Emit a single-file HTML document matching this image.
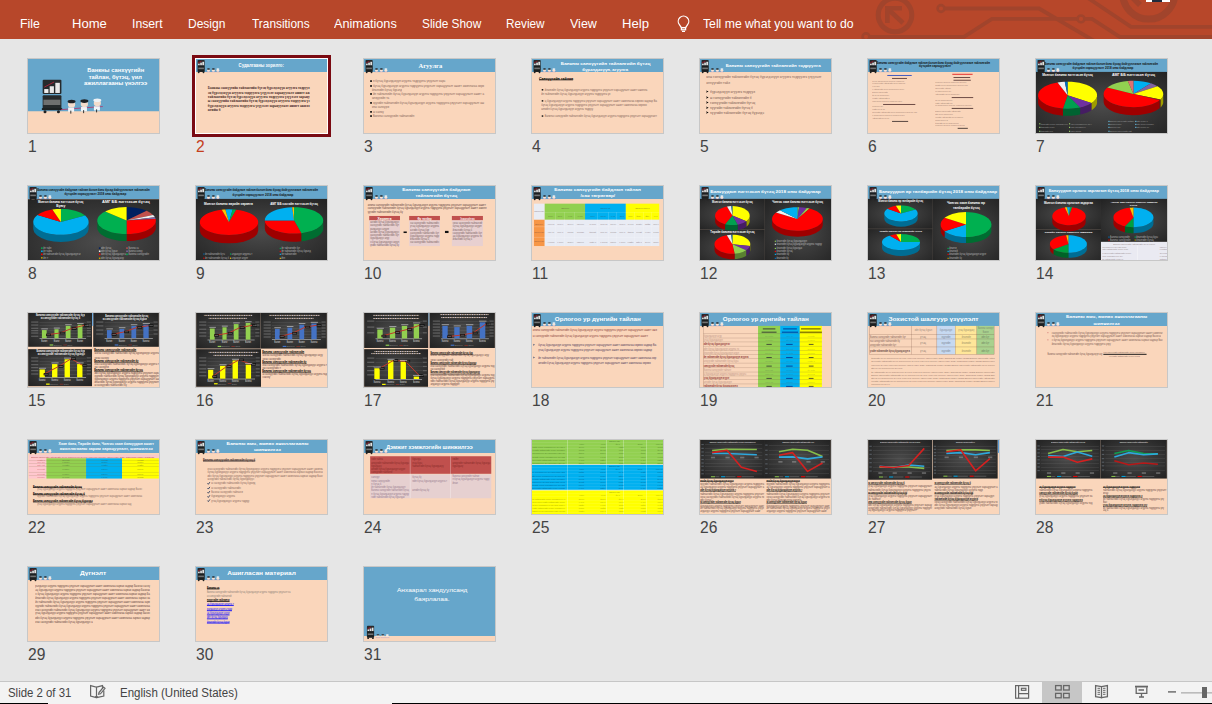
<!DOCTYPE html><html><head><meta charset="utf-8"><style>
*{margin:0;padding:0;box-sizing:border-box}
html,body{width:1212px;height:704px;overflow:hidden;background:#e6e6e6;font-family:"Liberation Sans",sans-serif}
.rib{position:absolute;left:0;top:0;width:1212px;height:39px;background:#b7472a;overflow:hidden}
.tab{position:absolute;top:16px;color:#fff;font-size:13px;line-height:16px;white-space:nowrap}
.th{position:absolute;width:133px;height:76px;border:1px solid #c7c7c7;overflow:hidden}
.th i{position:absolute;display:block}
.th svg{position:absolute;left:0;top:0}
.num{position:absolute;font-size:15.6px;line-height:18px;color:#404040}
.sb{position:absolute;left:0;top:681px;width:1212px;height:23px;background:#f3f3f3;border-top:1px solid #c6c6c6}
.sbt{position:absolute;top:4px;font-size:12px;line-height:15px;color:#444;white-space:nowrap;transform:scaleX(.95);transform-origin:0 0}
</style></head><body><div class="rib"><svg width="1212" height="39" style="position:absolute;left:0;top:0" fill="none" stroke="#a1442c" stroke-width="3.8">
<circle cx="895" cy="15" r="16.8" stroke-width="5"/>
<path d="M889.5 10.5 L903 23" stroke-width="4.6"/><path d="M887.4 23 V8.2 H902" stroke-width="4.6"/>
<circle cx="941" cy="8.5" r="3.4" stroke-width="2.6"/>
<path d="M944.4 8.5 H1039 L1096 42"/>
<circle cx="866" cy="36.8" r="3.4" stroke-width="2.6"/>
<path d="M869.4 36.8 H964 L992 18.9 H1077.6"/>
<circle cx="1081" cy="18.9" r="3.4" stroke-width="2.6"/>
<path d="M1084.4 18.9 H1092 L1120 37 H1212"/>
<path d="M1088 -2 L1131 26.8 H1212"/>
<circle cx="1148.75" cy="-7.1" r="26.2" stroke-width="7"/>
<path d="M1133 -2 L1140 5" stroke-width="5.5"/>
</svg><div style="position:absolute;left:1146px;top:0;width:24px;height:2.3px;background:#fff"></div><div style="position:absolute;left:1152px;top:0;width:10px;height:2px;background:#1e2b3c"></div><span class="tab" style="left:19.6px;transform:scaleX(0.950);transform-origin:0 0">File</span><span class="tab" style="left:72.4px;transform:scaleX(1.003);transform-origin:0 0">Home</span><span class="tab" style="left:132.3px;transform:scaleX(0.941);transform-origin:0 0">Insert</span><span class="tab" style="left:188.4px;transform:scaleX(0.924);transform-origin:0 0">Design</span><span class="tab" style="left:251.5px;transform:scaleX(0.914);transform-origin:0 0">Transitions</span><span class="tab" style="left:334.2px;transform:scaleX(0.976);transform-origin:0 0">Animations</span><span class="tab" style="left:422.0px;transform:scaleX(0.910);transform-origin:0 0">Slide Show</span><span class="tab" style="left:506.4px;transform:scaleX(0.903);transform-origin:0 0">Review</span><span class="tab" style="left:569.8px;transform:scaleX(0.962);transform-origin:0 0">View</span><span class="tab" style="left:621.9px;transform:scaleX(1.009);transform-origin:0 0">Help</span><span class="tab" style="left:703.4px;transform:scaleX(0.939);transform-origin:0 0">Tell me what you want to do</span><svg width="1212" height="39" style="position:absolute;left:0;top:0" fill="none" stroke="#fff" stroke-width="1.25">
<path d="M681.4 27.6 L679.4 24.6 A5.25 5.25 0 1 1 687.6 24.6 L685.6 27.6 Z"/><rect x="681.4" y="27.6" width="4.2" height="2.2"/><path d="M682 31.4 H685"/></svg></div><div class="th" style="left:27px;top:58px;background:#fad6bb"><div style="position:absolute;left:0;top:0;width:131px;height:74px;overflow:hidden"><svg width="131" height="74" viewBox="0 0 131 74" font-family="Liberation Sans"><rect x="0.00" y="0.00" width="131.00" height="74.00" fill="#66a6cb" /><rect x="-8.00" y="52.25" width="160.00" height="79.38" fill="#fad6bb" /><text x="59.19" y="12.97" font-size="4.6" font-weight="bold" font-family="Liberation Sans" fill="#fff" textLength="57.03" lengthAdjust="spacingAndGlyphs" >Банкны санхүүгийн</text><text x="60.75" y="20.00" font-size="4.6" font-weight="bold" font-family="Liberation Sans" fill="#fff" textLength="53.12" lengthAdjust="spacingAndGlyphs" >тайлан, бүтэц, үил</text><text x="56.06" y="25.94" font-size="4.6" font-weight="bold" font-family="Liberation Sans" fill="#fff" textLength="63.28" lengthAdjust="spacingAndGlyphs" >ажиллагааны үнэлгээ</text><rect x="14.66" y="20.69" width="18.75" height="14.38" fill="#262a2c" rx="1"/><rect x="14.66" y="36.31" width="18.75" height="14.84" fill="#262a2c" rx="1"/><rect x="16.22" y="30.06" width="4.22" height="3.91" fill="#eee" /><rect x="21.69" y="27.25" width="4.22" height="6.72" fill="#e8e8e8" /><rect x="27.31" y="23.81" width="4.53" height="10.16" fill="#e8e8e8" /><path d="M16.22 28.19 L26.06 23.03" stroke="#b0223a" stroke-width="0.9"/><rect x="15.44" y="40.69" width="16.88" height="5.31" fill="#7d7d7d" opacity=".85"/><rect x="13.88" y="49.12" width="20.31" height="1.88" fill="#1e2224" /><circle cx="17.00" cy="52.72" r="1.5" fill="#222"/><circle cx="30.44" cy="52.72" r="1.5" fill="#222"/><path d="M32.94 50.69 Q54.50 48.81 74.81 47.56" stroke="#b3346a" stroke-width="0.8" fill="none"/><rect x="40.12" y="48.50" width="6" height="4.2" fill="#fff" opacity=".9"/><ellipse cx="43.56" cy="45.38" rx="3.6" ry="3.2" fill="#f3dccc"/><ellipse cx="43.56" cy="42.56" rx="4" ry="1.8" fill="#1e2226"/><rect x="42.31" y="51.62" width="1" height="3" fill="#333"/><rect x="52.94" y="48.03" width="6" height="4.2" fill="#fff" opacity=".9"/><ellipse cx="56.38" cy="44.91" rx="3.6" ry="3.2" fill="#f3dccc"/><ellipse cx="56.38" cy="42.09" rx="4" ry="1.8" fill="#1e2226"/><rect x="55.12" y="51.16" width="1" height="3" fill="#333"/><rect x="65.91" y="47.25" width="6" height="4.2" fill="#fff" opacity=".9"/><ellipse cx="69.34" cy="44.12" rx="3.6" ry="3.2" fill="#f3dccc"/><ellipse cx="69.34" cy="41.31" rx="4" ry="1.8" fill="#eef2f6"/><rect x="68.09" y="50.38" width="1" height="3" fill="#333"/></svg></div></div><span class="num" style="left:28px;top:138px;color:#444">1</span><div style="position:absolute;left:192px;top:55px;width:139px;height:82px;border:3px solid #7a0a12;background:#fff"></div><div class="th" style="left:196px;top:59px;width:131px;height:74px;border:none;background:#fad6bb"><svg width="131" height="74" viewBox="0 0 131 74" font-family="Liberation Sans"><rect x="0.00" y="0.00" width="131.00" height="13.00" fill="#66a6cb" /><rect x="1.50" y="1.00" width="7.2" height="12" rx="0.8" fill="#25292b"/><rect x="2.10" y="4.60" width="1.6" height="1.6" fill="#e8e8e8"/><rect x="4.20" y="3.60" width="1.7" height="2.6" fill="#e0e0e0"/><rect x="6.30" y="2.80" width="1.8" height="3.4" fill="#e0e0e0"/><path d="M2.10 3.90 L5.50 2.20" stroke="#9a1a2a" stroke-width="0.9"/><rect x="2.00" y="7.00" width="6.2" height="5.4" fill="#1c1f20"/><rect x="2.30" y="8.60" width="5.6" height="1.6" fill="#8a8a8a" opacity=".8"/><circle cx="2.70" cy="13.30" r="0.9" fill="#222"/><circle cx="7.50" cy="13.30" r="0.9" fill="#222"/><ellipse cx="12.50" cy="11.40" rx="1.5" ry="1.5" fill="#f6e2d4"/><ellipse cx="12.50" cy="10.00" rx="1.5" ry="0.7" fill="#1e2226"/><rect x="10.30" y="12.60" width="4.2" height="0.6" fill="#8060b0" opacity=".4"/><ellipse cx="17.40" cy="11.40" rx="1.5" ry="1.5" fill="#f6e2d4"/><ellipse cx="17.40" cy="10.00" rx="1.5" ry="0.7" fill="#1e2226"/><rect x="15.20" y="12.60" width="4.2" height="0.6" fill="#8060b0" opacity=".4"/><ellipse cx="21.90" cy="11.40" rx="1.5" ry="1.5" fill="#f6e2d4"/><ellipse cx="21.90" cy="10.00" rx="1.5" ry="0.7" fill="#eef2f6"/><rect x="19.70" y="12.60" width="4.2" height="0.6" fill="#8060b0" opacity=".4"/><text x="42.59" y="8.04" font-size="4.8" font-weight="bold" font-family="Liberation Sans" fill="#fff" textLength="45.31" lengthAdjust="spacingAndGlyphs" >Судалгааны зорилго:</text><text x="11.81" y="29.90" font-size="3.9000000000000004" font-weight="bold" font-family="Liberation Serif" fill="#3a2020" textLength="101.88" lengthAdjust="spacingAndGlyphs" opacity="0.95">Банкны санхүүгийн тайлангийн бүтэц бүрэлдэхүүн агуулга тодруул</text><text x="11.81" y="34.90" font-size="3.9000000000000004" font-weight="bold" font-family="Liberation Serif" fill="#3a2020" textLength="101.88" lengthAdjust="spacingAndGlyphs" opacity="0.95">эц бүрэлдэхүүн агуулга тодруулга үзүүлэлт харьцуулалт ашигт аж</text><text x="11.81" y="38.97" font-size="3.9000000000000004" font-weight="bold" font-family="Liberation Serif" fill="#3a2020" textLength="101.88" lengthAdjust="spacingAndGlyphs" opacity="0.95">тайлангийн бүтэц бүрэлдэхүүн агуулга тодруулга үзүүлэлт харьцу</text><text x="11.81" y="43.19" font-size="3.9000000000000004" font-weight="bold" font-family="Liberation Serif" fill="#3a2020" textLength="101.88" lengthAdjust="spacingAndGlyphs" opacity="0.95">ы санхүүгийн тайлангийн бүтэц бүрэлдэхүүн агуулга тодруулга үз</text><text x="11.81" y="47.87" font-size="3.9000000000000004" font-weight="bold" font-family="Liberation Serif" fill="#3a2020" textLength="101.88" lengthAdjust="spacingAndGlyphs" opacity="0.95">бүрэлдэхүүн агуулга тодруулга үзүүлэлт харьцуулалт ашигт ажилл</text><text x="11.81" y="52.25" font-size="3.9000000000000004" font-weight="bold" font-family="Liberation Serif" fill="#3a2020" textLength="12.81" lengthAdjust="spacingAndGlyphs" opacity="0.95">нгийн б</text></svg></div><span class="num" style="left:196px;top:138px;color:#c43e1c">2</span><div class="th" style="left:363px;top:58px;background:#fad6bb"><div style="position:absolute;left:0;top:0;width:131px;height:74px;overflow:hidden"><svg width="131" height="74" viewBox="0 0 131 74" font-family="Liberation Sans"><rect x="0.00" y="0.00" width="131.00" height="13.00" fill="#66a6cb" /><rect x="1.50" y="1.00" width="7.2" height="12" rx="0.8" fill="#25292b"/><rect x="2.10" y="4.60" width="1.6" height="1.6" fill="#e8e8e8"/><rect x="4.20" y="3.60" width="1.7" height="2.6" fill="#e0e0e0"/><rect x="6.30" y="2.80" width="1.8" height="3.4" fill="#e0e0e0"/><path d="M2.10 3.90 L5.50 2.20" stroke="#9a1a2a" stroke-width="0.9"/><rect x="2.00" y="7.00" width="6.2" height="5.4" fill="#1c1f20"/><rect x="2.30" y="8.60" width="5.6" height="1.6" fill="#8a8a8a" opacity=".8"/><circle cx="2.70" cy="13.30" r="0.9" fill="#222"/><circle cx="7.50" cy="13.30" r="0.9" fill="#222"/><ellipse cx="12.50" cy="11.40" rx="1.5" ry="1.5" fill="#f6e2d4"/><ellipse cx="12.50" cy="10.00" rx="1.5" ry="0.7" fill="#1e2226"/><rect x="10.30" y="12.60" width="4.2" height="0.6" fill="#8060b0" opacity=".4"/><ellipse cx="17.40" cy="11.40" rx="1.5" ry="1.5" fill="#f6e2d4"/><ellipse cx="17.40" cy="10.00" rx="1.5" ry="0.7" fill="#1e2226"/><rect x="15.20" y="12.60" width="4.2" height="0.6" fill="#8060b0" opacity=".4"/><ellipse cx="21.90" cy="11.40" rx="1.5" ry="1.5" fill="#f6e2d4"/><ellipse cx="21.90" cy="10.00" rx="1.5" ry="0.7" fill="#eef2f6"/><rect x="19.70" y="12.60" width="4.2" height="0.6" fill="#8060b0" opacity=".4"/><text x="54.47" y="8.81" font-size="5.2" font-weight="bold" font-family="Liberation Serif" fill="#fff" textLength="23.87" lengthAdjust="spacingAndGlyphs" >Агуулга</text><rect x="6.14" y="21.25" width="1.79" height="1.67" fill="#111" /><text x="8.89" y="23.31" font-size="3.3800000000000003" font-weight="normal" font-family="Liberation Sans" fill="#4e3030" textLength="72.43" lengthAdjust="spacingAndGlyphs" opacity="0.7">н бүтэц бүрэлдэхүүн агуулга тодруулга үзүүлэлт харь</text><rect x="6.14" y="26.15" width="1.79" height="1.67" fill="#111" /><text x="8.89" y="28.20" font-size="3.3800000000000003" font-weight="normal" font-family="Liberation Sans" fill="#4e3030" textLength="111.22" lengthAdjust="spacingAndGlyphs" opacity="0.7"> бүтэц бүрэлдэхүүн агуулга тодруулга үзүүлэлт харьцуулалт ашигт ажиллагаа хөрв</text><text x="7.93" y="32.02" font-size="3.3800000000000003" font-weight="normal" font-family="Liberation Sans" fill="#4e3030" textLength="29.83" lengthAdjust="spacingAndGlyphs" opacity="0.7">йлангийн бүтэц бүрэлд</text><rect x="6.14" y="34.14" width="1.79" height="1.67" fill="#111" /><text x="8.89" y="36.19" font-size="3.3800000000000003" font-weight="normal" font-family="Liberation Sans" fill="#4e3030" textLength="111.22" lengthAdjust="spacingAndGlyphs" opacity="0.7">йн тайлангийн бүтэц бүрэлдэхүүн агуулга тодруулга үзүүлэлт харьцуулалт ашигт а</text><text x="7.93" y="40.13" font-size="3.3800000000000003" font-weight="normal" font-family="Liberation Sans" fill="#4e3030" textLength="17.30" lengthAdjust="spacingAndGlyphs" opacity="0.7">анхүүгийн та</text><rect x="6.14" y="43.09" width="1.79" height="1.67" fill="#111" /><text x="8.89" y="45.14" font-size="3.3800000000000003" font-weight="normal" font-family="Liberation Sans" fill="#4e3030" textLength="111.22" lengthAdjust="spacingAndGlyphs" opacity="0.7">хүүгийн тайлангийн бүтэц бүрэлдэхүүн агуулга тодруулга үзүүлэлт харьцуулалт аш</text><text x="7.93" y="49.08" font-size="3.3800000000000003" font-weight="normal" font-family="Liberation Sans" fill="#4e3030" textLength="17.30" lengthAdjust="spacingAndGlyphs" opacity="0.7">кны санхүүги</text><rect x="6.14" y="52.04" width="1.79" height="1.67" fill="#111" /><text x="8.89" y="54.09" font-size="3.3800000000000003" font-weight="normal" font-family="Liberation Sans" fill="#4e3030" textLength="10.98" lengthAdjust="spacingAndGlyphs" opacity="0.7">ы санхү</text><rect x="6.14" y="56.22" width="1.79" height="1.67" fill="#111" /><text x="8.89" y="58.27" font-size="3.3800000000000003" font-weight="normal" font-family="Liberation Sans" fill="#4e3030" textLength="41.41" lengthAdjust="spacingAndGlyphs" opacity="0.7">Банкны санхүүгийн тайлангийн </text></svg></div></div><span class="num" style="left:364px;top:138px;color:#444">3</span><div class="th" style="left:531px;top:58px;background:#fad6bb"><div style="position:absolute;left:0;top:0;width:131px;height:74px;overflow:hidden"><svg width="131" height="74" viewBox="0 0 131 74" font-family="Liberation Sans"><rect x="0.00" y="0.00" width="131.00" height="13.00" fill="#66a6cb" /><rect x="1.50" y="1.00" width="7.2" height="12" rx="0.8" fill="#25292b"/><rect x="2.10" y="4.60" width="1.6" height="1.6" fill="#e8e8e8"/><rect x="4.20" y="3.60" width="1.7" height="2.6" fill="#e0e0e0"/><rect x="6.30" y="2.80" width="1.8" height="3.4" fill="#e0e0e0"/><path d="M2.10 3.90 L5.50 2.20" stroke="#9a1a2a" stroke-width="0.9"/><rect x="2.00" y="7.00" width="6.2" height="5.4" fill="#1c1f20"/><rect x="2.30" y="8.60" width="5.6" height="1.6" fill="#8a8a8a" opacity=".8"/><circle cx="2.70" cy="13.30" r="0.9" fill="#222"/><circle cx="7.50" cy="13.30" r="0.9" fill="#222"/><ellipse cx="12.50" cy="11.40" rx="1.5" ry="1.5" fill="#f6e2d4"/><ellipse cx="12.50" cy="10.00" rx="1.5" ry="0.7" fill="#1e2226"/><rect x="10.30" y="12.60" width="4.2" height="0.6" fill="#8060b0" opacity=".4"/><ellipse cx="17.40" cy="11.40" rx="1.5" ry="1.5" fill="#f6e2d4"/><ellipse cx="17.40" cy="10.00" rx="1.5" ry="0.7" fill="#1e2226"/><rect x="15.20" y="12.60" width="4.2" height="0.6" fill="#8060b0" opacity=".4"/><ellipse cx="21.90" cy="11.40" rx="1.5" ry="1.5" fill="#f6e2d4"/><ellipse cx="21.90" cy="10.00" rx="1.5" ry="0.7" fill="#eef2f6"/><rect x="19.70" y="12.60" width="4.2" height="0.6" fill="#8060b0" opacity=".4"/><text x="28.82" y="6.06" font-size="4.2" font-weight="bold" font-family="Liberation Sans" fill="#fff" textLength="89.50" lengthAdjust="spacingAndGlyphs" >Банкны санхүүгийн тайлангийн бүтэц</text><text x="50.30" y="12.03" font-size="4.2" font-weight="bold" font-family="Liberation Sans" fill="#fff" textLength="45.94" lengthAdjust="spacingAndGlyphs" >бүрэлдэхүүн, агуулга</text><text x="6.98" y="21.00" font-size="3.6" font-weight="bold" font-family="Liberation Sans" fill="#000" textLength="34.13" lengthAdjust="spacingAndGlyphs" >Санхүүгийн тайлан</text><rect x="6.98" y="20.54" width="34.13" height="0.72" fill="#000" /><rect x="9.72" y="30.08" width="1.55" height="1.43" fill="#111" /><text x="12.71" y="31.92" font-size="3.12" font-weight="normal" font-family="Liberation Sans" fill="#4e3030" textLength="102.63" lengthAdjust="spacingAndGlyphs" opacity="0.7">йлангийн бүтэц бүрэлдэхүүн агуулга тодруулга үзүүлэлт харьцуулалт ашигт ажилла</text><text x="9.13" y="36.10" font-size="3.12" font-weight="normal" font-family="Liberation Sans" fill="#4e3030" textLength="69.21" lengthAdjust="spacingAndGlyphs" opacity="0.7">йн тайлангийн бүтэц бүрэлдэхүүн агуулга тодруулга үз</text><rect x="9.72" y="41.18" width="1.55" height="1.43" fill="#111" /><text x="12.71" y="43.02" font-size="3.12" font-weight="normal" font-family="Liberation Sans" fill="#4e3030" textLength="112.17" lengthAdjust="spacingAndGlyphs" opacity="0.7">ц бүрэлдэхүүн агуулга тодруулга үзүүлэлт харьцуулалт ашигт ажиллагаа хөрвөх чадвар Ба</text><text x="9.13" y="47.20" font-size="3.12" font-weight="normal" font-family="Liberation Sans" fill="#4e3030" textLength="105.61" lengthAdjust="spacingAndGlyphs" opacity="0.7"> бүтэц бүрэлдэхүүн агуулга тодруулга үзүүлэлт харьцуулалт ашигт ажиллагаа хөрвөх</text><text x="9.13" y="51.25" font-size="3.12" font-weight="normal" font-family="Liberation Sans" fill="#4e3030" textLength="51.91" lengthAdjust="spacingAndGlyphs" opacity="0.7">ангийн бүтэц бүрэлдэхүүн агуулга тодруу</text><rect x="9.72" y="56.34" width="1.55" height="1.43" fill="#111" /><text x="12.71" y="58.18" font-size="3.12" font-weight="normal" font-family="Liberation Sans" fill="#4e3030" textLength="112.17" lengthAdjust="spacingAndGlyphs" opacity="0.7">Банкны санхүүгийн тайлангийн бүтэц бүрэлдэхүүн агуулга тодруулга үзүүлэлт харьцуулалт</text></svg></div></div><span class="num" style="left:532px;top:138px;color:#444">4</span><div class="th" style="left:699px;top:58px;background:#fad6bb"><div style="position:absolute;left:0;top:0;width:131px;height:74px;overflow:hidden"><svg width="131" height="74" viewBox="0 0 131 74" font-family="Liberation Sans"><rect x="0.00" y="0.00" width="131.00" height="13.00" fill="#66a6cb" /><rect x="1.50" y="1.00" width="7.2" height="12" rx="0.8" fill="#25292b"/><rect x="2.10" y="4.60" width="1.6" height="1.6" fill="#e8e8e8"/><rect x="4.20" y="3.60" width="1.7" height="2.6" fill="#e0e0e0"/><rect x="6.30" y="2.80" width="1.8" height="3.4" fill="#e0e0e0"/><path d="M2.10 3.90 L5.50 2.20" stroke="#9a1a2a" stroke-width="0.9"/><rect x="2.00" y="7.00" width="6.2" height="5.4" fill="#1c1f20"/><rect x="2.30" y="8.60" width="5.6" height="1.6" fill="#8a8a8a" opacity=".8"/><circle cx="2.70" cy="13.30" r="0.9" fill="#222"/><circle cx="7.50" cy="13.30" r="0.9" fill="#222"/><ellipse cx="12.50" cy="11.40" rx="1.5" ry="1.5" fill="#f6e2d4"/><ellipse cx="12.50" cy="10.00" rx="1.5" ry="0.7" fill="#1e2226"/><rect x="10.30" y="12.60" width="4.2" height="0.6" fill="#8060b0" opacity=".4"/><ellipse cx="17.40" cy="11.40" rx="1.5" ry="1.5" fill="#f6e2d4"/><ellipse cx="17.40" cy="10.00" rx="1.5" ry="0.7" fill="#1e2226"/><rect x="15.20" y="12.60" width="4.2" height="0.6" fill="#8060b0" opacity=".4"/><ellipse cx="21.90" cy="11.40" rx="1.5" ry="1.5" fill="#f6e2d4"/><ellipse cx="21.90" cy="10.00" rx="1.5" ry="0.7" fill="#eef2f6"/><rect x="19.70" y="12.60" width="4.2" height="0.6" fill="#8060b0" opacity=".4"/><text x="25.83" y="8.37" font-size="4.0" font-weight="bold" font-family="Liberation Sans" fill="#fff" textLength="94.87" lengthAdjust="spacingAndGlyphs" >Банкны санхүүгийн тайлангийн тодруулга</text><text x="6.14" y="19.08" font-size="3.9000000000000004" font-weight="normal" font-family="Liberation Serif" fill="#4e3030" textLength="115.16" lengthAdjust="spacingAndGlyphs" opacity="0.75">кны санхүүгийн тайлангийн бүтэц бүрэлдэхүүн агуулга тодруулга үзүүлэлт</text><text x="6.14" y="25.04" font-size="3.9000000000000004" font-weight="normal" font-family="Liberation Serif" fill="#4e3030" textLength="23.87" lengthAdjust="spacingAndGlyphs" opacity="0.75">анхүүгийн тайл</text><path d="M6.02 31.40 L8.65 32.59 L6.02 33.78 L6.74 32.59Z" fill="#000"/><text x="10.08" y="33.99" font-size="3.9000000000000004" font-weight="normal" font-family="Liberation Serif" fill="#4e3030" textLength="44.99" lengthAdjust="spacingAndGlyphs" opacity="0.8">бүрэлдэхүүн агуулга тодруул</text><path d="M6.02 37.36 L8.65 38.56 L6.02 39.75 L6.74 38.56Z" fill="#000"/><text x="10.08" y="39.96" font-size="3.9000000000000004" font-weight="normal" font-family="Liberation Serif" fill="#4e3030" textLength="41.41" lengthAdjust="spacingAndGlyphs" opacity="0.8">ы санхүүгийн тайлангийн б</text><path d="M6.02 42.37 L8.65 43.57 L6.02 44.76 L6.74 43.57Z" fill="#000"/><text x="10.08" y="44.97" font-size="3.9000000000000004" font-weight="normal" font-family="Liberation Serif" fill="#4e3030" textLength="44.99" lengthAdjust="spacingAndGlyphs" opacity="0.8">санхүүгийн тайлангийн бүтэц</text><path d="M6.02 47.51 L8.65 48.70 L6.02 49.89 L6.74 48.70Z" fill="#000"/><text x="10.08" y="50.10" font-size="3.9000000000000004" font-weight="normal" font-family="Liberation Serif" fill="#4e3030" textLength="42.60" lengthAdjust="spacingAndGlyphs" opacity="0.8">хүүгийн тайлангийн бүтэц б</text><path d="M6.02 52.28 L8.65 53.47 L6.02 54.67 L6.74 53.47Z" fill="#000"/><text x="10.08" y="54.88" font-size="3.9000000000000004" font-weight="normal" font-family="Liberation Serif" fill="#4e3030" textLength="53.94" lengthAdjust="spacingAndGlyphs" opacity="0.8">хүүгийн тайлангийн бүтэц бүрэлдэ</text></svg></div></div><span class="num" style="left:700px;top:138px;color:#444">5</span><div class="th" style="left:867px;top:58px;background:#fad6bb"><div style="position:absolute;left:0;top:0;width:131px;height:74px;overflow:hidden"><svg width="131" height="74" viewBox="0 0 131 74" font-family="Liberation Sans"><rect x="0.00" y="0.00" width="131.00" height="13.00" fill="#66a6cb" /><rect x="1.50" y="1.00" width="7.2" height="12" rx="0.8" fill="#25292b"/><rect x="2.10" y="4.60" width="1.6" height="1.6" fill="#e8e8e8"/><rect x="4.20" y="3.60" width="1.7" height="2.6" fill="#e0e0e0"/><rect x="6.30" y="2.80" width="1.8" height="3.4" fill="#e0e0e0"/><path d="M2.10 3.90 L5.50 2.20" stroke="#9a1a2a" stroke-width="0.9"/><rect x="2.00" y="7.00" width="6.2" height="5.4" fill="#1c1f20"/><rect x="2.30" y="8.60" width="5.6" height="1.6" fill="#8a8a8a" opacity=".8"/><circle cx="2.70" cy="13.30" r="0.9" fill="#222"/><circle cx="7.50" cy="13.30" r="0.9" fill="#222"/><ellipse cx="12.50" cy="11.40" rx="1.5" ry="1.5" fill="#f6e2d4"/><ellipse cx="12.50" cy="10.00" rx="1.5" ry="0.7" fill="#1e2226"/><rect x="10.30" y="12.60" width="4.2" height="0.6" fill="#8060b0" opacity=".4"/><ellipse cx="17.40" cy="11.40" rx="1.5" ry="1.5" fill="#f6e2d4"/><ellipse cx="17.40" cy="10.00" rx="1.5" ry="0.7" fill="#1e2226"/><rect x="15.20" y="12.60" width="4.2" height="0.6" fill="#8060b0" opacity=".4"/><ellipse cx="21.90" cy="11.40" rx="1.5" ry="1.5" fill="#f6e2d4"/><ellipse cx="21.90" cy="10.00" rx="1.5" ry="0.7" fill="#eef2f6"/><rect x="19.70" y="12.60" width="4.2" height="0.6" fill="#8060b0" opacity=".4"/><text x="8.53" y="4.51" font-size="3.2" font-weight="bold" font-family="Liberation Sans" fill="#111" textLength="113.37" lengthAdjust="spacingAndGlyphs" >Банкны санхүүгийн байдлын тайлан болон банк бусад байгууллагын тайлангийн</text><text x="50.89" y="8.32" font-size="3.2" font-weight="bold" font-family="Liberation Sans" fill="#111" textLength="32.22" lengthAdjust="spacingAndGlyphs" >бүтцийн харьцуулалт</text><rect x="19.27" y="15.98" width="24.46" height="1.0" fill="#3050c0" opacity="0.9"/><rect x="24.04" y="18.96" width="14.92" height="1.0" fill="#402020" opacity="0.75"/><text x="4.35" y="22.96" font-size="2.08" font-weight="normal" font-family="Liberation Sans" fill="#4e3030" textLength="31.62" lengthAdjust="spacingAndGlyphs" opacity="0.6"> бүтэц бүрэлдэхүүн агуулга тодруулга</text><text x="4.35" y="24.99" font-size="2.08" font-weight="normal" font-family="Liberation Sans" fill="#4e3030" textLength="32.82" lengthAdjust="spacingAndGlyphs" opacity="0.6">ы санхүүгийн тайлангийн бүтэц бүрэлдэ</text><text x="4.35" y="27.97" font-size="2.08" font-weight="normal" font-family="Liberation Sans" fill="#4e3030" textLength="7.16" lengthAdjust="spacingAndGlyphs" opacity="0.6">үтэц бүр</text><text x="4.35" y="31.07" font-size="2.08" font-weight="normal" font-family="Liberation Sans" fill="#4e3030" textLength="31.62" lengthAdjust="spacingAndGlyphs" opacity="0.6">н тайлангийн бүтэц бүрэлдэхүүн агуул</text><text x="4.35" y="33.93" font-size="2.08" font-weight="normal" font-family="Liberation Sans" fill="#4e3030" textLength="15.51" lengthAdjust="spacingAndGlyphs" opacity="0.6">Банкны санхүүгийн</text><text x="4.35" y="37.04" font-size="2.08" font-weight="normal" font-family="Liberation Sans" fill="#4e3030" textLength="16.71" lengthAdjust="spacingAndGlyphs" opacity="0.6">йн бүтэц бүрэлдэхүү</text><text x="4.35" y="40.02" font-size="2.08" font-weight="normal" font-family="Liberation Sans" fill="#4e3030" textLength="17.30" lengthAdjust="spacingAndGlyphs" opacity="0.6">үүгийн тайлангийн б</text><text x="4.35" y="43.00" font-size="2.08" font-weight="normal" font-family="Liberation Sans" fill="#4e3030" textLength="29.83" lengthAdjust="spacingAndGlyphs" opacity="0.6">үрэлдэхүүн агуулга тодруулга үзүүл</text><rect x="15.09" y="44.98" width="32.22" height="1.0" fill="#402020" opacity="0.75"/><text x="4.35" y="48.02" font-size="2.08" font-weight="normal" font-family="Liberation Sans" fill="#4e3030" textLength="10.74" lengthAdjust="spacingAndGlyphs" opacity="0.6">элдэхүүн агу</text><text x="4.35" y="51.00" font-size="2.08" font-weight="normal" font-family="Liberation Sans" fill="#4e3030" textLength="12.53" lengthAdjust="spacingAndGlyphs" opacity="0.6">нгийн бүтэц бү</text><text x="4.35" y="53.98" font-size="2.08" font-weight="normal" font-family="Liberation Sans" fill="#4e3030" textLength="44.75" lengthAdjust="spacingAndGlyphs" opacity="0.6">анхүүгийн тайлангийн бүтэц бүрэлдэхүүн агуулга тодр</text><text x="4.35" y="56.97" font-size="2.08" font-weight="normal" font-family="Liberation Sans" fill="#4e3030" textLength="32.22" lengthAdjust="spacingAndGlyphs" opacity="0.6">ц бүрэлдэхүүн агуулга тодруулга үзүү</text><text x="4.35" y="59.95" font-size="2.08" font-weight="normal" font-family="Liberation Sans" fill="#4e3030" textLength="16.71" lengthAdjust="spacingAndGlyphs" opacity="0.6">тайлангийн бүтэц бү</text><rect x="24.04" y="61.92" width="16.11" height="1.0" fill="#201818" opacity="0.75"/><rect x="84.31" y="14.79" width="20.29" height="1.0" fill="#e02020" opacity="0.9"/><rect x="85.50" y="18.01" width="16.71" height="1.0" fill="#402020" opacity="0.75"/><rect x="85.50" y="20.75" width="17.30" height="1.0" fill="#402020" opacity="0.75"/><text x="67.24" y="24.15" font-size="2.08" font-weight="normal" font-family="Liberation Sans" fill="#4e3030" textLength="31.38" lengthAdjust="spacingAndGlyphs" opacity="0.6">элдэхүүн агуулга тодруулга үзүүлэлт</text><text x="67.24" y="27.01" font-size="2.08" font-weight="normal" font-family="Liberation Sans" fill="#4e3030" textLength="32.58" lengthAdjust="spacingAndGlyphs" opacity="0.6">ангийн бүтэц бүрэлдэхүүн агуулга тодр</text><text x="67.24" y="30.00" font-size="2.08" font-weight="normal" font-family="Liberation Sans" fill="#4e3030" textLength="15.87" lengthAdjust="spacingAndGlyphs" opacity="0.6">санхүүгийн тайланг</text><text x="67.24" y="32.98" font-size="2.08" font-weight="normal" font-family="Liberation Sans" fill="#4e3030" textLength="15.87" lengthAdjust="spacingAndGlyphs" opacity="0.6">эц бүрэлдэхүүн агу</text><text x="67.24" y="35.96" font-size="2.08" font-weight="normal" font-family="Liberation Sans" fill="#4e3030" textLength="24.22" lengthAdjust="spacingAndGlyphs" opacity="0.6"> тайлангийн бүтэц бүрэлдэхү</text><rect x="83.71" y="38.06" width="21.48" height="1.0" fill="#402020" opacity="0.75"/><text x="67.24" y="42.05" font-size="2.08" font-weight="normal" font-family="Liberation Sans" fill="#4e3030" textLength="17.06" lengthAdjust="spacingAndGlyphs" opacity="0.6"> бүтэц бүрэлдэхүүн </text><text x="67.24" y="44.91" font-size="2.08" font-weight="normal" font-family="Liberation Sans" fill="#4e3030" textLength="17.66" lengthAdjust="spacingAndGlyphs" opacity="0.6">үгийн тайлангийн бүт</text><text x="67.24" y="47.30" font-size="2.08" font-weight="normal" font-family="Liberation Sans" fill="#4e3030" textLength="36.75" lengthAdjust="spacingAndGlyphs" opacity="0.6">эц бүрэлдэхүүн агуулга тодруулга үзүүлэлт </text><rect x="83.71" y="48.92" width="21.48" height="1.0" fill="#301818" opacity="0.75"/><text x="67.24" y="53.03" font-size="2.08" font-weight="normal" font-family="Liberation Sans" fill="#4e3030" textLength="25.42" lengthAdjust="spacingAndGlyphs" opacity="0.6">Банкны санхүүгийн тайлангийн </text><text x="67.24" y="56.01" font-size="2.08" font-weight="normal" font-family="Liberation Sans" fill="#4e3030" textLength="17.66" lengthAdjust="spacingAndGlyphs" opacity="0.6">ийн бүтэц бүрэлдэхүү</text><text x="67.24" y="58.99" font-size="2.08" font-weight="normal" font-family="Liberation Sans" fill="#4e3030" textLength="27.80" lengthAdjust="spacingAndGlyphs" opacity="0.6">хүүгийн тайлангийн бүтэц бүрэлд</text><text x="67.24" y="61.98" font-size="2.08" font-weight="normal" font-family="Liberation Sans" fill="#4e3030" textLength="12.89" lengthAdjust="spacingAndGlyphs" opacity="0.6">бүрэлдэхүүн аг</text><text x="67.24" y="64.96" font-size="2.08" font-weight="normal" font-family="Liberation Sans" fill="#4e3030" textLength="23.63" lengthAdjust="spacingAndGlyphs" opacity="0.6">йлангийн бүтэц бүрэлдэхүүн </text><text x="67.24" y="67.11" font-size="2.08" font-weight="normal" font-family="Liberation Sans" fill="#4e3030" textLength="29.59" lengthAdjust="spacingAndGlyphs" opacity="0.6">элдэхүүн агуулга тодруулга үзүүлэ</text><rect x="89.68" y="68.84" width="10.14" height="1.0" fill="#201818" opacity="0.75"/></svg></div></div><span class="num" style="left:868px;top:138px;color:#444">6</span><div class="th" style="left:1035px;top:58px;background:#fad6bb"><div style="position:absolute;left:0;top:0;width:131px;height:74px;overflow:hidden"><svg width="131" height="74" viewBox="0 0 131 74" font-family="Liberation Sans"><rect x="0.00" y="0.00" width="131.00" height="13.00" fill="#66a6cb" /><defs><radialGradient id="g7" cx=".5" cy=".5" r=".7"><stop offset="0" stop-color="#4b4b4b"/><stop offset="1" stop-color="#222"/></radialGradient></defs><rect x="-4.00" y="12.90" width="139.98" height="66.11" fill="url(#g7)"/><rect x="1.50" y="1.00" width="7.2" height="12" rx="0.8" fill="#25292b"/><rect x="2.10" y="4.60" width="1.6" height="1.6" fill="#e8e8e8"/><rect x="4.20" y="3.60" width="1.7" height="2.6" fill="#e0e0e0"/><rect x="6.30" y="2.80" width="1.8" height="3.4" fill="#e0e0e0"/><path d="M2.10 3.90 L5.50 2.20" stroke="#9a1a2a" stroke-width="0.9"/><rect x="2.00" y="7.00" width="6.2" height="5.4" fill="#1c1f20"/><rect x="2.30" y="8.60" width="5.6" height="1.6" fill="#8a8a8a" opacity=".8"/><circle cx="2.70" cy="13.30" r="0.9" fill="#222"/><circle cx="7.50" cy="13.30" r="0.9" fill="#222"/><ellipse cx="12.50" cy="11.40" rx="1.5" ry="1.5" fill="#f6e2d4"/><ellipse cx="12.50" cy="10.00" rx="1.5" ry="0.7" fill="#1e2226"/><rect x="10.30" y="12.60" width="4.2" height="0.6" fill="#8060b0" opacity=".4"/><ellipse cx="17.40" cy="11.40" rx="1.5" ry="1.5" fill="#f6e2d4"/><ellipse cx="17.40" cy="10.00" rx="1.5" ry="0.7" fill="#1e2226"/><rect x="15.20" y="12.60" width="4.2" height="0.6" fill="#8060b0" opacity=".4"/><ellipse cx="21.90" cy="11.40" rx="1.5" ry="1.5" fill="#f6e2d4"/><ellipse cx="21.90" cy="10.00" rx="1.5" ry="0.7" fill="#eef2f6"/><rect x="19.70" y="12.60" width="4.2" height="0.6" fill="#8060b0" opacity=".4"/><text x="8.53" y="6.30" font-size="3.2" font-weight="bold" font-family="Liberation Sans" fill="#111" textLength="113.37" lengthAdjust="spacingAndGlyphs" >Банкны санхүүгийн байдлын тайлан болон банк бусад байгууллагын тайлангийн</text><text x="36.57" y="10.47" font-size="3.2" font-weight="bold" font-family="Liberation Sans" fill="#111" textLength="60.86" lengthAdjust="spacingAndGlyphs" >бүтцийн харьцуулалт 2018 оны байдлаар</text><text x="6.14" y="17.43" font-size="3.3" font-weight="bold" font-family="Liberation Sans" fill="#fff" textLength="50.72" lengthAdjust="spacingAndGlyphs" >Монгол банкны нэгтгэсэн бүтэц</text><text x="75.95" y="17.43" font-size="3.3" font-weight="bold" font-family="Liberation Sans" fill="#fff" textLength="42.96" lengthAdjust="spacingAndGlyphs" >АМГ ББ нэгтгэсэн бүтэц</text><path d="M61.06 36.17 L61.02 36.88 L60.90 37.58 L60.70 38.28 L60.42 38.98 L60.06 39.66 L59.62 40.34 L59.10 41.01 L58.51 41.66 L57.85 42.30 L57.11 42.92 L56.30 43.52 L55.43 44.10 L55.43 51.30 L56.30 50.72 L57.11 50.12 L57.85 49.50 L58.51 48.86 L59.10 48.21 L59.62 47.54 L60.06 46.86 L60.42 46.18 L60.70 45.48 L60.90 44.78 L61.02 44.08 L61.06 43.37Z" fill="#9e9e00"/><path d="M55.43 44.10 L54.68 44.55 L53.89 44.99 L53.07 45.41 L52.20 45.81 L51.30 46.20 L50.36 46.57 L49.40 46.92 L48.40 47.25 L47.37 47.57 L46.31 47.86 L45.23 48.13 L44.12 48.38 L44.12 55.58 L45.23 55.33 L46.31 55.06 L47.37 54.77 L48.40 54.45 L49.40 54.12 L50.36 53.77 L51.30 53.40 L52.20 53.01 L53.07 52.61 L53.89 52.19 L54.68 51.75 L55.43 51.30Z" fill="#451d63"/><path d="M44.12 48.38 L42.78 48.66 L41.41 48.90 L40.01 49.10 L38.60 49.28 L37.16 49.42 L35.72 49.53 L34.26 49.61 L32.80 49.66 L31.33 49.67 L29.86 49.65 L28.40 49.59 L26.95 49.50 L26.95 56.70 L28.40 56.79 L29.86 56.85 L31.33 56.87 L32.80 56.86 L34.26 56.81 L35.72 56.73 L37.16 56.62 L38.60 56.48 L40.01 56.30 L41.41 56.10 L42.78 55.86 L44.12 55.58Z" fill="#006331"/><path d="M26.95 49.50 L23.55 49.16 L20.27 48.64 L17.15 47.95 L14.22 47.09 L11.54 46.08 L9.13 44.94 L7.03 43.67 L5.28 42.30 L3.88 40.84 L2.88 39.32 L2.27 37.76 L2.06 36.17 L2.06 43.37 L2.27 44.96 L2.88 46.52 L3.88 48.04 L5.28 49.50 L7.03 50.87 L9.13 52.14 L11.54 53.28 L14.22 54.29 L17.15 55.15 L20.27 55.84 L23.55 56.36 L26.95 56.70Z" fill="#9e0000"/><path d="M31.56 36.17 L31.56 22.67 L35.60 22.80 L39.57 23.18 L43.38 23.80 L46.97 24.66 L50.28 25.73 L53.22 27.01 L55.76 28.45 L57.85 30.04 L59.43 31.75 L60.49 33.54 L61.01 35.37 L60.97 37.23 L60.38 39.06 L59.24 40.84 L57.58 42.53 L55.43 44.10Z" fill="#ffff00"/><path d="M31.56 36.17 L55.43 44.10 L52.20 45.81 L48.40 47.25 L44.12 48.38Z" fill="#7030a0"/><path d="M31.56 36.17 L44.12 48.38 L40.01 49.10 L35.72 49.53 L31.33 49.67 L26.95 49.50Z" fill="#00a050"/><path d="M31.56 36.17 L26.95 49.50 L23.15 49.11 L19.51 48.49 L16.07 47.66 L12.90 46.63 L10.06 45.41 L7.59 44.04 L5.53 42.52 L3.93 40.90 L2.81 39.20 L2.19 37.44 L2.08 35.66 L2.48 33.89 L3.39 32.16 L4.79 30.50 L6.65 28.94 L8.95 27.50 L11.64 26.21 L14.67 25.10 L18.00 24.18 L21.57 23.47Z" fill="#ff0000"/><path d="M31.56 36.17 L21.57 23.47 L25.13 22.99 L28.78 22.73Z" fill="#f0f0f0"/><path d="M31.56 36.17 L28.78 22.73 L30.17 22.68 L31.56 22.67Z" fill="#0070c0"/><path d="M127.23 34.98 L127.21 35.46 L127.15 35.94 L127.05 36.42 L126.91 36.90 L126.73 37.38 L126.51 37.86 L126.26 38.33 L125.96 38.79 L125.63 39.25 L125.25 39.71 L124.84 40.15 L124.40 40.60 L124.40 48.60 L124.84 48.15 L125.25 47.71 L125.63 47.25 L125.96 46.79 L126.26 46.33 L126.51 45.86 L126.73 45.38 L126.91 44.90 L127.05 44.42 L127.15 43.94 L127.21 43.46 L127.23 42.98Z" fill="#9e9e00"/><path d="M124.40 40.60 L124.33 40.66 L124.26 40.72 L124.19 40.78 L124.12 40.85 L124.05 40.91 L123.98 40.97 L123.91 41.03 L123.84 41.09 L123.77 41.15 L123.69 41.21 L123.62 41.27 L123.55 41.34 L123.55 49.34 L123.62 49.27 L123.69 49.21 L123.77 49.15 L123.84 49.09 L123.91 49.03 L123.98 48.97 L124.05 48.91 L124.12 48.85 L124.19 48.78 L124.26 48.72 L124.33 48.66 L124.40 48.60Z" fill="#591313"/><path d="M123.55 41.34 L119.79 43.71 L114.95 45.66 L109.27 47.09 L103.02 47.94 L96.50 48.17 L90.02 47.76 L83.90 46.74 L78.44 45.15 L73.89 43.07 L70.47 40.60 L68.35 37.86 L67.63 34.98 L67.63 42.98 L68.35 45.86 L70.47 48.60 L73.89 51.07 L78.44 53.15 L83.90 54.74 L90.02 55.76 L96.50 56.17 L103.02 55.94 L109.27 55.09 L114.95 53.66 L119.79 51.71 L123.55 49.34Z" fill="#9e0000"/><path d="M97.43 34.98 L97.43 21.78 L102.09 21.94 L106.64 22.42 L110.96 23.21 L114.95 24.30Z" fill="#00b0f0"/><path d="M97.43 34.98 L114.95 24.30 L118.50 25.64 L121.54 27.22Z" fill="#8064a2"/><path d="M97.43 34.98 L121.54 27.22 L123.66 28.71 L125.31 30.31 L126.46 32.00 L127.10 33.73 L127.21 35.49 L126.79 37.25 L125.84 38.96 L124.40 40.60Z" fill="#ffff00"/><path d="M97.43 34.98 L124.40 40.60 L123.98 40.97 L123.55 41.34Z" fill="#902020"/><path d="M97.43 34.98 L123.55 41.34 L121.45 42.79 L118.94 44.11 L116.06 45.28 L112.87 46.27 L109.41 47.06 L105.75 47.65 L101.94 48.02 L98.06 48.17 L94.16 48.10 L90.32 47.80 L86.61 47.27 L83.08 46.54 L79.79 45.61 L76.81 44.50 L74.18 43.23 L71.94 41.81 L70.15 40.28 L68.82 38.66 L67.97 36.97 L67.64 35.25 L67.81 33.53 L68.49 31.83 L69.67 30.18 L71.32 28.62Z" fill="#ff0000"/><path d="M97.43 34.98 L71.32 28.62 L73.70 27.00 L76.58 25.55 L79.92 24.30 L83.63 23.28 L87.63 22.51 L91.85 22.01Z" fill="#92d050"/><path d="M97.43 34.98 L91.85 22.01 L94.63 21.83 L97.43 21.78Z" fill="#e07070"/><rect x="3.16" y="64.21" width="1.19" height="1.19" fill="#9c6" /><text x="4.83" y="65.65" font-size="2.3400000000000003" font-weight="normal" font-family="Liberation Sans" fill="#ddd" textLength="26.97" lengthAdjust="spacingAndGlyphs" opacity="0.6">йлангийн бүтэц бүрэлдэхүүн </text><rect x="32.99" y="64.21" width="1.19" height="1.19" fill="#9c6" /><text x="34.66" y="65.65" font-size="2.3400000000000003" font-weight="normal" font-family="Liberation Sans" fill="#ddd" textLength="21.00" lengthAdjust="spacingAndGlyphs" opacity="0.6">үтэц бүрэлдэхүүн агуу</text><rect x="3.16" y="67.79" width="1.19" height="1.19" fill="#9c6" /><text x="4.83" y="69.23" font-size="2.3400000000000003" font-weight="normal" font-family="Liberation Sans" fill="#ddd" textLength="13.84" lengthAdjust="spacingAndGlyphs" opacity="0.6">йлангийн бүтэц</text><rect x="32.99" y="67.79" width="1.19" height="1.19" fill="#9c6" /><text x="34.66" y="69.23" font-size="2.3400000000000003" font-weight="normal" font-family="Liberation Sans" fill="#ddd" textLength="15.04" lengthAdjust="spacingAndGlyphs" opacity="0.6">үтэц бүрэлдэхүү</text><rect x="3.16" y="71.73" width="1.19" height="1.19" fill="#9c6" /><text x="4.83" y="73.17" font-size="2.3400000000000003" font-weight="normal" font-family="Liberation Sans" fill="#ddd" textLength="12.05" lengthAdjust="spacingAndGlyphs" opacity="0.6">йлангийн бүт</text><rect x="32.99" y="71.73" width="1.19" height="1.19" fill="#9c6" /><text x="34.66" y="73.17" font-size="2.3400000000000003" font-weight="normal" font-family="Liberation Sans" fill="#ddd" textLength="10.26" lengthAdjust="spacingAndGlyphs" opacity="0.6">үтэц бүрэл</text><rect x="72.37" y="61.83" width="1.19" height="1.19" fill="#6bd" /><text x="74.04" y="63.26" font-size="2.3400000000000003" font-weight="normal" font-family="Liberation Sans" fill="#ddd" textLength="23.99" lengthAdjust="spacingAndGlyphs" opacity="0.6">Банкны санхүүгийн тайлан</text><rect x="99.22" y="61.83" width="1.19" height="1.19" fill="#6bd" /><text x="100.89" y="63.26" font-size="2.3400000000000003" font-weight="normal" font-family="Liberation Sans" fill="#ddd" textLength="10.86" lengthAdjust="spacingAndGlyphs" opacity="0.6">ийн бүтэц б</text><rect x="72.37" y="64.81" width="1.19" height="1.19" fill="#6bd" /><text x="74.04" y="66.25" font-size="2.3400000000000003" font-weight="normal" font-family="Liberation Sans" fill="#ddd" textLength="11.46" lengthAdjust="spacingAndGlyphs" opacity="0.6">Банкны санх</text><rect x="99.22" y="64.81" width="1.19" height="1.19" fill="#6bd" /><text x="100.89" y="66.25" font-size="2.3400000000000003" font-weight="normal" font-family="Liberation Sans" fill="#ddd" textLength="16.83" lengthAdjust="spacingAndGlyphs" opacity="0.6">ийн бүтэц бүрэлдэ</text><rect x="72.37" y="67.79" width="1.19" height="1.19" fill="#6bd" /><text x="74.04" y="69.23" font-size="2.3400000000000003" font-weight="normal" font-family="Liberation Sans" fill="#ddd" textLength="10.26" lengthAdjust="spacingAndGlyphs" opacity="0.6">Банкны сан</text><rect x="99.22" y="67.79" width="1.19" height="1.19" fill="#6bd" /><text x="100.89" y="69.23" font-size="2.3400000000000003" font-weight="normal" font-family="Liberation Sans" fill="#ddd" textLength="12.05" lengthAdjust="spacingAndGlyphs" opacity="0.6">ийн бүтэц бү</text><rect x="72.37" y="71.73" width="1.19" height="1.19" fill="#6bd" /><text x="74.04" y="73.17" font-size="2.3400000000000003" font-weight="normal" font-family="Liberation Sans" fill="#ddd" textLength="21.60" lengthAdjust="spacingAndGlyphs" opacity="0.6">Банкны санхүүгийн тай</text></svg></div></div><span class="num" style="left:1036px;top:138px;color:#444">7</span><div class="th" style="left:27px;top:185px;background:#fad6bb"><div style="position:absolute;left:0;top:0;width:131px;height:74px;overflow:hidden"><svg width="131" height="74" viewBox="0 0 131 74" font-family="Liberation Sans"><rect x="0.00" y="0.00" width="131.00" height="13.00" fill="#66a6cb" /><defs><radialGradient id="g8" cx=".5" cy=".5" r=".7"><stop offset="0" stop-color="#4b4b4b"/><stop offset="1" stop-color="#222"/></radialGradient></defs><rect x="-8.00" y="13.22" width="160.00" height="85.16" fill="url(#g8)"/><rect x="1.50" y="1.00" width="7.2" height="12" rx="0.8" fill="#25292b"/><rect x="2.10" y="4.60" width="1.6" height="1.6" fill="#e8e8e8"/><rect x="4.20" y="3.60" width="1.7" height="2.6" fill="#e0e0e0"/><rect x="6.30" y="2.80" width="1.8" height="3.4" fill="#e0e0e0"/><path d="M2.10 3.90 L5.50 2.20" stroke="#9a1a2a" stroke-width="0.9"/><rect x="2.00" y="7.00" width="6.2" height="5.4" fill="#1c1f20"/><rect x="2.30" y="8.60" width="5.6" height="1.6" fill="#8a8a8a" opacity=".8"/><circle cx="2.70" cy="13.30" r="0.9" fill="#222"/><circle cx="7.50" cy="13.30" r="0.9" fill="#222"/><ellipse cx="12.50" cy="11.40" rx="1.5" ry="1.5" fill="#f6e2d4"/><ellipse cx="12.50" cy="10.00" rx="1.5" ry="0.7" fill="#1e2226"/><rect x="10.30" y="12.60" width="4.2" height="0.6" fill="#8060b0" opacity=".4"/><ellipse cx="17.40" cy="11.40" rx="1.5" ry="1.5" fill="#f6e2d4"/><ellipse cx="17.40" cy="10.00" rx="1.5" ry="0.7" fill="#1e2226"/><rect x="15.20" y="12.60" width="4.2" height="0.6" fill="#8060b0" opacity=".4"/><ellipse cx="21.90" cy="11.40" rx="1.5" ry="1.5" fill="#f6e2d4"/><ellipse cx="21.90" cy="10.00" rx="1.5" ry="0.7" fill="#eef2f6"/><rect x="19.70" y="12.60" width="4.2" height="0.6" fill="#8060b0" opacity=".4"/><text x="9.19" y="5.20" font-size="2.9" font-weight="bold" font-family="Liberation Sans" fill="#111" textLength="112.50" lengthAdjust="spacingAndGlyphs" >Банкны санхүүгийн байдлын тайлан болон банк бусад байгууллагын тайлангийн</text><text x="36.53" y="9.26" font-size="2.9" font-weight="bold" font-family="Liberation Sans" fill="#111" textLength="61.72" lengthAdjust="spacingAndGlyphs" >бүтцийн харьцуулалт 2018 оны байдлаар</text><text x="9.97" y="17.11" font-size="3.0" font-weight="bold" font-family="Liberation Sans" fill="#fff" textLength="45.31" lengthAdjust="spacingAndGlyphs" >Монгол банкны нэгтгэсэн бүтэц</text><text x="28.25" y="21.33" font-size="3.0" font-weight="bold" font-family="Liberation Sans" fill="#fff" textLength="9.06" lengthAdjust="spacingAndGlyphs" >Буюу</text><text x="74.03" y="17.11" font-size="3.0" font-weight="bold" font-family="Liberation Sans" fill="#fff" textLength="47.66" lengthAdjust="spacingAndGlyphs" >АМГ ББ нэгтгэсэн бүтэц</text><path d="M60.64 35.88 L59.69 39.24 L56.93 42.38 L52.52 45.07 L46.79 47.13 L40.11 48.43 L32.94 48.88 L25.77 48.43 L19.09 47.13 L13.35 45.07 L8.95 42.37 L6.18 39.24 L5.24 35.88 L5.24 42.88 L6.18 46.24 L8.95 49.37 L13.35 52.07 L19.09 54.13 L25.77 55.43 L32.94 55.88 L40.11 55.43 L46.79 54.13 L52.52 52.07 L56.93 49.38 L59.69 46.24 L60.64 42.88Z" fill="#006d94"/><path d="M32.94 35.88 L32.94 22.88 L36.62 22.99 L40.25 23.34 L43.74 23.90 L47.04 24.69 L50.09 25.67 L52.83 26.83 L55.22 28.15 L57.21 29.61Z" fill="#00b050"/><path d="M32.94 35.88 L57.21 29.61 L58.75 31.16 L59.85 32.79 L60.48 34.47 L60.63 36.18 L60.30 37.88 L59.51 39.55 L58.25 41.15 L56.56 42.67 L54.45 44.06 L51.98 45.32 L49.18 46.41 L46.09 47.32 L42.78 48.03 L39.30 48.53 L35.71 48.81 L32.07 48.87 L28.44 48.70 L24.90 48.32 L21.49 47.71 L18.28 46.91 L15.32 45.91 L12.67 44.74 L10.37 43.41 L8.46 41.96 L6.97 40.40 L5.93 38.76 L5.36 37.07 L5.26 35.36 L5.64 33.67 L6.49 32.00 L7.80 30.41 L9.55 28.91Z" fill="#00b0f0"/><path d="M32.94 35.88 L9.55 28.91 L11.82 27.46 L14.49 26.18 L17.51 25.08 L20.83 24.18 L24.38 23.51Z" fill="#ff0000"/><path d="M32.94 35.88 L24.38 23.51 L28.60 23.04 L32.94 22.88Z" fill="#ffff00"/><path d="M127.86 34.62 L127.61 36.39 L126.86 38.12 L125.63 39.79 L123.94 41.38 L121.81 42.84 L119.28 44.17 L116.40 45.34 L113.21 46.32 L109.78 47.10 L106.15 47.66 L102.39 48.01 L98.56 48.12 L98.56 55.12 L102.39 55.01 L106.15 54.66 L109.78 54.10 L113.21 53.32 L116.40 52.34 L119.28 51.17 L121.81 49.84 L123.94 48.38 L125.63 46.79 L126.86 45.12 L127.61 43.39 L127.86 41.62Z" fill="#9e0000"/><path d="M98.56 48.12 L94.74 48.01 L90.98 47.66 L87.35 47.10 L83.91 46.32 L80.73 45.34 L77.84 44.17 L75.32 42.84 L73.19 41.38 L71.49 39.79 L70.26 38.12 L69.51 36.39 L69.26 34.62 L69.26 41.62 L69.51 43.39 L70.26 45.12 L71.49 46.79 L73.19 48.38 L75.32 49.84 L77.84 51.17 L80.73 52.34 L83.91 53.32 L87.35 54.10 L90.98 54.66 L94.74 55.01 L98.56 55.12Z" fill="#006d31"/><path d="M98.56 34.62 L98.56 21.12 L102.96 21.28 L107.27 21.73 L111.37 22.48 L115.18 23.51 L118.62 24.78Z" fill="#002060"/><path d="M98.56 34.62 L118.62 24.78 L122.27 26.69 L125.07 28.88Z" fill="#c0504d"/><path d="M98.56 34.62 L125.07 28.88 L126.13 30.05 L126.94 31.27Z" fill="#f2f2f2"/><path d="M98.56 34.62 L126.94 31.27 L127.34 32.10 L127.63 32.93Z" fill="#8064a2"/><path d="M98.56 34.62 L127.63 32.93 L127.86 34.84 L127.50 36.74 L126.57 38.59 L125.07 40.37 L123.05 42.04 L120.54 43.55 L117.59 44.89 L114.26 46.02 L110.62 46.93 L106.74 47.59 L102.69 47.99 L98.56 48.12Z" fill="#ff0000"/><path d="M98.56 34.62 L98.56 48.12 L94.57 48.00 L90.65 47.62 L86.88 47.00 L83.32 46.16 L80.05 45.09 L77.13 43.83 L74.61 42.40 L72.53 40.82 L70.94 39.13 L69.87 37.35 L69.33 35.52 L69.33 33.68 L69.89 31.85 L70.98 30.08 L72.58 28.39 L74.67 26.81 L77.20 25.38Z" fill="#00b050"/><path d="M98.56 34.62 L77.20 25.38 L80.12 24.13 L83.38 23.08 L86.93 22.24 L90.68 21.62 L94.59 21.25 L98.56 21.12Z" fill="#ffff00"/><rect x="13.09" y="61.34" width="1.56" height="1.56" fill="#00b050" /><text x="15.28" y="63.06" font-size="2.6" font-weight="normal" font-family="Liberation Sans" fill="#ddd" textLength="7.97" lengthAdjust="spacingAndGlyphs" opacity="0.75">йн тайл</text><rect x="13.09" y="64.47" width="1.56" height="1.56" fill="#00b0f0" /><text x="15.28" y="66.19" font-size="2.6" font-weight="normal" font-family="Liberation Sans" fill="#ddd" textLength="8.75" lengthAdjust="spacingAndGlyphs" opacity="0.75">йн тайла</text><rect x="13.09" y="67.59" width="1.56" height="1.56" fill="#ff0000" /><text x="15.28" y="69.31" font-size="2.6" font-weight="normal" font-family="Liberation Sans" fill="#ddd" textLength="37.66" lengthAdjust="spacingAndGlyphs" opacity="0.75">йн тайлангийн бүтэц бүрэлдэхүүн аг</text><rect x="13.09" y="71.03" width="1.56" height="1.56" fill="#c0a000" /><text x="15.28" y="72.75" font-size="2.6" font-weight="normal" font-family="Liberation Sans" fill="#ddd" textLength="4.84" lengthAdjust="spacingAndGlyphs" opacity="0.75">йн т</text><rect x="70.91" y="61.34" width="1.56" height="1.56" fill="#002060" /><text x="73.09" y="63.06" font-size="2.6" font-weight="normal" font-family="Liberation Sans" fill="#ddd" textLength="10.31" lengthAdjust="spacingAndGlyphs" opacity="0.75">ийн бүтэц</text><rect x="70.91" y="64.47" width="1.56" height="1.56" fill="#f2f2f2" /><text x="73.09" y="66.19" font-size="2.6" font-weight="normal" font-family="Liberation Sans" fill="#ddd" textLength="16.56" lengthAdjust="spacingAndGlyphs" opacity="0.75">ийн бүтэц бүрэл</text><rect x="70.91" y="67.59" width="1.56" height="1.56" fill="#ff0000" /><text x="73.09" y="69.31" font-size="2.6" font-weight="normal" font-family="Liberation Sans" fill="#ddd" textLength="25.16" lengthAdjust="spacingAndGlyphs" opacity="0.75">ийн бүтэц бүрэлдэхүүн а</text><rect x="70.91" y="71.50" width="1.56" height="1.56" fill="#c0a000" /><text x="73.09" y="73.22" font-size="2.6" font-weight="normal" font-family="Liberation Sans" fill="#ddd" textLength="22.81" lengthAdjust="spacingAndGlyphs" opacity="0.75">ийн бүтэц бүрэлдэхүү</text><rect x="98.25" y="61.34" width="1.56" height="1.56" fill="#c0504d" /><text x="100.44" y="63.06" font-size="2.6" font-weight="normal" font-family="Liberation Sans" fill="#ddd" textLength="10.31" lengthAdjust="spacingAndGlyphs" opacity="0.75">Банкны са</text><rect x="98.25" y="64.47" width="1.56" height="1.56" fill="#8064a2" /><text x="100.44" y="66.19" font-size="2.6" font-weight="normal" font-family="Liberation Sans" fill="#ddd" textLength="14.22" lengthAdjust="spacingAndGlyphs" opacity="0.75">Банкны санхүү</text><rect x="98.25" y="67.59" width="1.56" height="1.56" fill="#00b050" /><text x="100.44" y="69.31" font-size="2.6" font-weight="normal" font-family="Liberation Sans" fill="#ddd" textLength="20.47" lengthAdjust="spacingAndGlyphs" opacity="0.75">Банкны санхүүгийн </text></svg></div></div><span class="num" style="left:28px;top:265px;color:#444">8</span><div class="th" style="left:195px;top:185px;background:#fad6bb"><div style="position:absolute;left:0;top:0;width:131px;height:74px;overflow:hidden"><svg width="131" height="74" viewBox="0 0 131 74" font-family="Liberation Sans"><rect x="0.00" y="0.00" width="131.00" height="13.00" fill="#66a6cb" /><defs><radialGradient id="g9" cx=".5" cy=".5" r=".7"><stop offset="0" stop-color="#4b4b4b"/><stop offset="1" stop-color="#222"/></radialGradient></defs><rect x="-4.00" y="12.90" width="139.98" height="66.11" fill="url(#g9)"/><rect x="1.50" y="1.00" width="7.2" height="12" rx="0.8" fill="#25292b"/><rect x="2.10" y="4.60" width="1.6" height="1.6" fill="#e8e8e8"/><rect x="4.20" y="3.60" width="1.7" height="2.6" fill="#e0e0e0"/><rect x="6.30" y="2.80" width="1.8" height="3.4" fill="#e0e0e0"/><path d="M2.10 3.90 L5.50 2.20" stroke="#9a1a2a" stroke-width="0.9"/><rect x="2.00" y="7.00" width="6.2" height="5.4" fill="#1c1f20"/><rect x="2.30" y="8.60" width="5.6" height="1.6" fill="#8a8a8a" opacity=".8"/><circle cx="2.70" cy="13.30" r="0.9" fill="#222"/><circle cx="7.50" cy="13.30" r="0.9" fill="#222"/><ellipse cx="12.50" cy="11.40" rx="1.5" ry="1.5" fill="#f6e2d4"/><ellipse cx="12.50" cy="10.00" rx="1.5" ry="0.7" fill="#1e2226"/><rect x="10.30" y="12.60" width="4.2" height="0.6" fill="#8060b0" opacity=".4"/><ellipse cx="17.40" cy="11.40" rx="1.5" ry="1.5" fill="#f6e2d4"/><ellipse cx="17.40" cy="10.00" rx="1.5" ry="0.7" fill="#1e2226"/><rect x="15.20" y="12.60" width="4.2" height="0.6" fill="#8060b0" opacity=".4"/><ellipse cx="21.90" cy="11.40" rx="1.5" ry="1.5" fill="#f6e2d4"/><ellipse cx="21.90" cy="10.00" rx="1.5" ry="0.7" fill="#eef2f6"/><rect x="19.70" y="12.60" width="4.2" height="0.6" fill="#8060b0" opacity=".4"/><text x="8.53" y="5.46" font-size="3.2" font-weight="bold" font-family="Liberation Sans" fill="#111" textLength="113.37" lengthAdjust="spacingAndGlyphs" >Банкны санхүүгийн байдлын тайлан болон банк бусад байгууллагын тайлангийн</text><text x="36.57" y="9.52" font-size="3.2" font-weight="bold" font-family="Liberation Sans" fill="#111" textLength="60.86" lengthAdjust="spacingAndGlyphs" >бүтцийн харьцуулалт 2018 оны байдлаар</text><text x="7.93" y="18.50" font-size="3.3" font-weight="bold" font-family="Liberation Sans" fill="#fff" textLength="48.93" lengthAdjust="spacingAndGlyphs" >Монгол банкны өөрийн хөрөнгө</text><text x="74.16" y="18.50" font-size="3.3" font-weight="bold" font-family="Liberation Sans" fill="#fff" textLength="47.73" lengthAdjust="spacingAndGlyphs" >АМГ ББ хэсгийн нэгтгэсэн бүтэц</text><path d="M62.19 36.17 L61.20 39.48 L58.28 42.57 L53.64 45.22 L47.59 47.25 L40.55 48.53 L32.99 48.97 L25.44 48.53 L18.39 47.25 L12.35 45.22 L7.70 42.57 L4.79 39.48 L3.79 36.17 L3.79 44.57 L4.79 47.88 L7.70 50.97 L12.35 53.62 L18.39 55.65 L25.44 56.93 L32.99 57.37 L40.55 56.93 L47.59 55.65 L53.64 53.62 L58.28 50.97 L61.20 47.88 L62.19 44.57Z" fill="#9e0000"/><path d="M32.99 36.17 L29.33 23.47 L32.99 23.37 L36.65 23.47Z" fill="#00b0f0"/><path d="M32.99 36.17 L36.65 23.47 L38.46 23.60 L40.25 23.77Z" fill="#00b050"/><path d="M32.99 36.17 L40.25 23.77 L43.90 24.30 L47.35 25.02 L50.56 25.94 L53.46 27.04 L56.01 28.30 L58.17 29.69 L59.89 31.19 L61.15 32.77 L61.92 34.42 L62.19 36.10 L61.96 37.77 L61.23 39.42 L60.02 41.02 L58.34 42.53 L56.22 43.93 L53.70 45.19 L50.82 46.31 L47.64 47.24 L44.21 47.99 L40.58 48.53 L36.82 48.86 L32.99 48.97 L29.17 48.86 L25.41 48.53 L21.78 47.99 L18.34 47.24 L15.16 46.31 L12.29 45.19 L9.77 43.93 L7.65 42.53 L5.97 41.02 L4.75 39.42 L4.02 37.77 L3.79 36.10 L4.07 34.42 L4.84 32.77 L6.10 31.19 L7.82 29.69 L9.97 28.30 L12.52 27.04 L15.43 25.94 L18.63 25.02 L22.09 24.30 L25.73 23.77Z" fill="#ff0000"/><path d="M32.99 36.17 L25.73 23.77 L27.52 23.60 L29.33 23.47Z" fill="#ffc000"/><path d="M127.23 34.38 L127.05 35.83 L126.53 37.26 L125.65 38.66 L124.45 40.00 L122.93 41.28 L121.10 42.47 L119.00 43.57 L116.64 44.55 L114.06 45.41 L111.29 46.14 L108.35 46.73 L105.29 47.16 L105.29 55.36 L108.35 54.93 L111.29 54.34 L114.06 53.61 L116.64 52.75 L119.00 51.77 L121.10 50.67 L122.93 49.48 L124.45 48.20 L125.65 46.86 L126.53 45.46 L127.05 44.03 L127.23 42.58Z" fill="#006d31"/><path d="M105.29 47.16 L100.93 47.51 L96.50 47.56 L92.11 47.31 L87.85 46.75 L83.83 45.91 L80.13 44.81 L76.85 43.47 L74.05 41.91 L71.81 40.19 L70.16 38.33 L69.16 36.38 L68.83 34.38 L68.83 42.58 L69.16 44.58 L70.16 46.53 L71.81 48.39 L74.05 50.11 L76.85 51.67 L80.13 53.01 L83.83 54.11 L87.85 54.95 L92.11 55.51 L96.50 55.76 L100.93 55.71 L105.29 55.36Z" fill="#9e0000"/><path d="M98.03 34.38 L98.03 21.18 L101.85 21.29 L105.61 21.63 L109.24 22.19 L112.68 22.96 L115.86 23.93 L118.74 25.07 L121.25 26.38 L123.37 27.82 L125.05 29.38 L126.27 31.02 L127.00 32.73 L127.23 34.45 L126.95 36.18 L126.18 37.88 L124.93 39.52 L123.20 41.07 L121.05 42.50 L118.50 43.79 L115.59 44.92 L112.39 45.87 L108.93 46.62 L105.29 47.16Z" fill="#00b050"/><path d="M98.03 34.38 L105.29 47.16 L101.27 47.50 L97.18 47.57 L93.11 47.39 L89.14 46.95 L85.34 46.27 L81.79 45.35 L78.56 44.22 L75.71 42.89 L73.30 41.40 L71.37 39.77 L69.97 38.03 L69.11 36.22 L68.83 34.38Z" fill="#ff0000"/><path d="M98.03 34.38 L68.83 34.38 L69.10 32.58 L69.92 30.81 L71.26 29.10 L73.11 27.50 L75.42 26.02 L78.16 24.71 L81.27 23.57 L84.70 22.64 L88.37 21.92 L92.23 21.44 L96.20 21.21Z" fill="#00b0f0"/><path d="M98.03 34.38 L96.20 21.21 L97.11 21.19 L98.03 21.18Z" fill="#ffc000"/><rect x="7.34" y="67.43" width="1.19" height="1.19" fill="#0070c0" /><text x="9.01" y="68.97" font-size="2.6" font-weight="normal" font-family="Liberation Sans" fill="#ddd" textLength="19.81" lengthAdjust="spacingAndGlyphs" opacity="0.75">йн тайлангийн бүтэ</text><rect x="7.34" y="71.61" width="1.19" height="1.19" fill="#ff0000" /><text x="9.01" y="73.14" font-size="2.6" font-weight="normal" font-family="Liberation Sans" fill="#ddd" textLength="23.99" lengthAdjust="spacingAndGlyphs" opacity="0.75">йн тайлангийн бүтэц б</text><rect x="33.95" y="67.43" width="1.19" height="1.19" fill="#00b050" /><text x="35.62" y="68.97" font-size="2.6" font-weight="normal" font-family="Liberation Sans" fill="#ddd" textLength="20.64" lengthAdjust="spacingAndGlyphs" opacity="0.75">элдэхүүн агуулга т</text><rect x="33.95" y="71.61" width="1.19" height="1.19" fill="#ffc000" /><text x="35.62" y="73.14" font-size="2.6" font-weight="normal" font-family="Liberation Sans" fill="#ddd" textLength="16.47" lengthAdjust="spacingAndGlyphs" opacity="0.75">элдэхүүн агуулг</text><rect x="83.71" y="61.83" width="1.19" height="1.19" fill="#00b050" /><text x="85.38" y="63.36" font-size="2.6" font-weight="normal" font-family="Liberation Sans" fill="#ddd" textLength="18.62" lengthAdjust="spacingAndGlyphs" opacity="0.75">йн тайлангийн бүт</text><rect x="83.71" y="64.81" width="1.19" height="1.19" fill="#ff0000" /><text x="85.38" y="66.34" font-size="2.6" font-weight="normal" font-family="Liberation Sans" fill="#ddd" textLength="29.36" lengthAdjust="spacingAndGlyphs" opacity="0.75">йн тайлангийн бүтэц бүрэлд</text><rect x="83.71" y="67.79" width="1.19" height="1.19" fill="#00b0f0" /><text x="85.38" y="69.33" font-size="2.6" font-weight="normal" font-family="Liberation Sans" fill="#ddd" textLength="15.04" lengthAdjust="spacingAndGlyphs" opacity="0.75">йн тайлангийн</text><rect x="83.71" y="71.73" width="1.19" height="1.19" fill="#ffc000" /><text x="85.38" y="73.26" font-size="2.6" font-weight="normal" font-family="Liberation Sans" fill="#ddd" textLength="3.70" lengthAdjust="spacingAndGlyphs" opacity="0.75">йн </text></svg></div></div><span class="num" style="left:196px;top:265px;color:#444">9</span><div class="th" style="left:363px;top:185px;background:#fad6bb"><div style="position:absolute;left:0;top:0;width:131px;height:74px;overflow:hidden"><svg width="131" height="74" viewBox="0 0 131 74" font-family="Liberation Sans"><rect x="0.00" y="0.00" width="131.00" height="13.00" fill="#66a6cb" /><rect x="1.50" y="1.00" width="7.2" height="12" rx="0.8" fill="#25292b"/><rect x="2.10" y="4.60" width="1.6" height="1.6" fill="#e8e8e8"/><rect x="4.20" y="3.60" width="1.7" height="2.6" fill="#e0e0e0"/><rect x="6.30" y="2.80" width="1.8" height="3.4" fill="#e0e0e0"/><path d="M2.10 3.90 L5.50 2.20" stroke="#9a1a2a" stroke-width="0.9"/><rect x="2.00" y="7.00" width="6.2" height="5.4" fill="#1c1f20"/><rect x="2.30" y="8.60" width="5.6" height="1.6" fill="#8a8a8a" opacity=".8"/><circle cx="2.70" cy="13.30" r="0.9" fill="#222"/><circle cx="7.50" cy="13.30" r="0.9" fill="#222"/><ellipse cx="12.50" cy="11.40" rx="1.5" ry="1.5" fill="#f6e2d4"/><ellipse cx="12.50" cy="10.00" rx="1.5" ry="0.7" fill="#1e2226"/><rect x="10.30" y="12.60" width="4.2" height="0.6" fill="#8060b0" opacity=".4"/><ellipse cx="17.40" cy="11.40" rx="1.5" ry="1.5" fill="#f6e2d4"/><ellipse cx="17.40" cy="10.00" rx="1.5" ry="0.7" fill="#1e2226"/><rect x="15.20" y="12.60" width="4.2" height="0.6" fill="#8060b0" opacity=".4"/><ellipse cx="21.90" cy="11.40" rx="1.5" ry="1.5" fill="#f6e2d4"/><ellipse cx="21.90" cy="10.00" rx="1.5" ry="0.7" fill="#eef2f6"/><rect x="19.70" y="12.60" width="4.2" height="0.6" fill="#8060b0" opacity=".4"/><text x="38.36" y="5.03" font-size="4.0" font-weight="bold" font-family="Liberation Sans" fill="#fff" textLength="68.02" lengthAdjust="spacingAndGlyphs" >Банкны санхүүгийн байдлын</text><text x="51.49" y="11.36" font-size="4.0" font-weight="bold" font-family="Liberation Sans" fill="#fff" textLength="41.77" lengthAdjust="spacingAndGlyphs" >тайлангийн бүтэц</text><text x="3.76" y="19.99" font-size="3.12" font-weight="normal" font-family="Liberation Sans" fill="#4e3030" textLength="118.14" lengthAdjust="spacingAndGlyphs" opacity="0.9">анкны санхүүгийн тайлангийн бүтэц бүрэлдэхүүн агуулга тодруулга үзүүлэлт харьцуулалт ашигт</text><text x="3.76" y="23.33" font-size="3.12" font-weight="normal" font-family="Liberation Sans" fill="#4e3030" textLength="118.74" lengthAdjust="spacingAndGlyphs" opacity="0.9">санхүүгийн тайлангийн бүтэц бүрэлдэхүүн агуулга тодруулга үзүүлэлт харьцуулалт ашигт ажилл</text><text x="3.76" y="27.39" font-size="3.12" font-weight="normal" font-family="Liberation Sans" fill="#4e3030" textLength="35.20" lengthAdjust="spacingAndGlyphs" opacity="0.9">үүгийн тайлангийн бүтэц бү</text><rect x="5.19" y="29.96" width="30.79" height="4.42" fill="#c0504d" /><rect x="5.19" y="34.38" width="30.79" height="25.66" fill="#e8d0d0" /><text x="13.54" y="33.88" font-size="2.6" font-weight="bold" font-family="Liberation Sans" fill="#fff" textLength="14.08" lengthAdjust="spacingAndGlyphs" >Хөрөнгө</text><text x="6.14" y="37.15" font-size="2.7300000000000004" font-weight="normal" font-family="Liberation Sans" fill="#4e3030" textLength="28.88" lengthAdjust="spacingAndGlyphs" opacity="0.75">ангийн бүтэц бүрэлдэхүүн </text><text x="6.14" y="40.14" font-size="2.7300000000000004" font-weight="normal" font-family="Liberation Sans" fill="#4e3030" textLength="28.88" lengthAdjust="spacingAndGlyphs" opacity="0.75">санхүүгийн тайлангийн бүт</text><text x="6.14" y="43.72" font-size="2.7300000000000004" font-weight="normal" font-family="Liberation Sans" fill="#4e3030" textLength="19.09" lengthAdjust="spacingAndGlyphs" opacity="0.75">рэлдэхүүн агуулг</text><text x="6.14" y="46.70" font-size="2.7300000000000004" font-weight="normal" font-family="Liberation Sans" fill="#4e3030" textLength="28.88" lengthAdjust="spacingAndGlyphs" opacity="0.75">ангийн бүтэц бүрэлдэхүүн </text><text x="6.14" y="49.68" font-size="2.7300000000000004" font-weight="normal" font-family="Liberation Sans" fill="#4e3030" textLength="28.88" lengthAdjust="spacingAndGlyphs" opacity="0.75">санхүүгийн тайлангийн бүт</text><text x="6.14" y="53.02" font-size="2.7300000000000004" font-weight="normal" font-family="Liberation Sans" fill="#4e3030" textLength="19.09" lengthAdjust="spacingAndGlyphs" opacity="0.75">бүрэлдэхүүн агуу</text><text x="6.14" y="56.84" font-size="2.7300000000000004" font-weight="normal" font-family="Liberation Sans" fill="#4e3030" textLength="28.88" lengthAdjust="spacingAndGlyphs" opacity="0.75">н бүтэц бүрэлдэхүүн агуул</text><text x="6.14" y="59.83" font-size="2.7300000000000004" font-weight="normal" font-family="Liberation Sans" fill="#4e3030" textLength="28.88" lengthAdjust="spacingAndGlyphs" opacity="0.75">үгийн тайлангийн бүтэц бү</text><rect x="45.16" y="29.96" width="30.79" height="4.42" fill="#c0504d" /><rect x="45.16" y="34.38" width="30.79" height="25.66" fill="#e8d0d0" /><text x="53.52" y="33.88" font-size="2.6" font-weight="bold" font-family="Liberation Sans" fill="#fff" textLength="14.08" lengthAdjust="spacingAndGlyphs" >Өр төлбөр</text><text x="46.12" y="37.99" font-size="2.7300000000000004" font-weight="normal" font-family="Liberation Sans" fill="#4e3030" textLength="28.88" lengthAdjust="spacingAndGlyphs" opacity="0.75">ны санхүүгийн тайлангийн </text><text x="46.12" y="41.09" font-size="2.7300000000000004" font-weight="normal" font-family="Liberation Sans" fill="#4e3030" textLength="28.88" lengthAdjust="spacingAndGlyphs" opacity="0.75">үтэц бүрэлдэхүүн агуулга </text><text x="46.12" y="44.91" font-size="2.7300000000000004" font-weight="normal" font-family="Liberation Sans" fill="#4e3030" textLength="19.09" lengthAdjust="spacingAndGlyphs" opacity="0.75">ангийн бүтэц бүр</text><text x="46.12" y="47.89" font-size="2.7300000000000004" font-weight="normal" font-family="Liberation Sans" fill="#4e3030" textLength="28.88" lengthAdjust="spacingAndGlyphs" opacity="0.75">санхүүгийн тайлангийн бүт</text><text x="46.12" y="51.11" font-size="2.7300000000000004" font-weight="normal" font-family="Liberation Sans" fill="#4e3030" textLength="28.88" lengthAdjust="spacingAndGlyphs" opacity="0.75"> бүрэлдэхүүн агуулга тодр</text><text x="46.12" y="54.22" font-size="2.7300000000000004" font-weight="normal" font-family="Liberation Sans" fill="#4e3030" textLength="19.09" lengthAdjust="spacingAndGlyphs" opacity="0.75">йлангийн бүтэц б</text><text x="46.12" y="57.08" font-size="2.7300000000000004" font-weight="normal" font-family="Liberation Sans" fill="#4e3030" textLength="28.88" lengthAdjust="spacingAndGlyphs" opacity="0.75">ны санхүүгийн тайлангийн </text><rect x="87.89" y="29.96" width="31.03" height="4.42" fill="#c0504d" /><rect x="87.89" y="34.38" width="31.03" height="25.66" fill="#e8d0d0" /><text x="96.24" y="33.88" font-size="2.6" font-weight="bold" font-family="Liberation Sans" fill="#fff" textLength="14.32" lengthAdjust="spacingAndGlyphs" >Эзэмшигчийн өмч</text><text x="88.84" y="37.99" font-size="2.7300000000000004" font-weight="normal" font-family="Liberation Sans" fill="#4e3030" textLength="29.12" lengthAdjust="spacingAndGlyphs" opacity="0.75">нкны санхүүгийн тайлангий</text><text x="88.84" y="41.09" font-size="2.7300000000000004" font-weight="normal" font-family="Liberation Sans" fill="#4e3030" textLength="29.12" lengthAdjust="spacingAndGlyphs" opacity="0.75"> бүтэц бүрэлдэхүүн агуулг</text><text x="88.84" y="44.91" font-size="2.7300000000000004" font-weight="normal" font-family="Liberation Sans" fill="#4e3030" textLength="19.33" lengthAdjust="spacingAndGlyphs" opacity="0.75">йлангийн бүтэц б</text><text x="88.84" y="48.13" font-size="2.7300000000000004" font-weight="normal" font-family="Liberation Sans" fill="#4e3030" textLength="29.12" lengthAdjust="spacingAndGlyphs" opacity="0.75">санхүүгийн тайлангийн бүт</text><text x="88.84" y="51.11" font-size="2.7300000000000004" font-weight="normal" font-family="Liberation Sans" fill="#4e3030" textLength="29.12" lengthAdjust="spacingAndGlyphs" opacity="0.75">эц бүрэлдэхүүн агуулга то</text><text x="88.84" y="54.46" font-size="2.7300000000000004" font-weight="normal" font-family="Liberation Sans" fill="#4e3030" textLength="19.33" lengthAdjust="spacingAndGlyphs" opacity="0.75">йлангийн бүтэц б</text><rect x="39.56" y="45.48" width="3.22" height="1.55" fill="#111" /><rect x="80.96" y="44.88" width="3.58" height="2.15" fill="#111" /></svg></div></div><span class="num" style="left:364px;top:265px;color:#444">10</span><div class="th" style="left:531px;top:185px;background:#fad6bb"><div style="position:absolute;left:0;top:0;width:131px;height:74px;overflow:hidden"><svg width="131" height="74" viewBox="0 0 131 74" font-family="Liberation Sans"><rect x="0.00" y="0.00" width="131.00" height="13.00" fill="#66a6cb" /><rect x="1.50" y="1.00" width="7.2" height="12" rx="0.8" fill="#25292b"/><rect x="2.10" y="4.60" width="1.6" height="1.6" fill="#e8e8e8"/><rect x="4.20" y="3.60" width="1.7" height="2.6" fill="#e0e0e0"/><rect x="6.30" y="2.80" width="1.8" height="3.4" fill="#e0e0e0"/><path d="M2.10 3.90 L5.50 2.20" stroke="#9a1a2a" stroke-width="0.9"/><rect x="2.00" y="7.00" width="6.2" height="5.4" fill="#1c1f20"/><rect x="2.30" y="8.60" width="5.6" height="1.6" fill="#8a8a8a" opacity=".8"/><circle cx="2.70" cy="13.30" r="0.9" fill="#222"/><circle cx="7.50" cy="13.30" r="0.9" fill="#222"/><ellipse cx="12.50" cy="11.40" rx="1.5" ry="1.5" fill="#f6e2d4"/><ellipse cx="12.50" cy="10.00" rx="1.5" ry="0.7" fill="#1e2226"/><rect x="10.30" y="12.60" width="4.2" height="0.6" fill="#8060b0" opacity=".4"/><ellipse cx="17.40" cy="11.40" rx="1.5" ry="1.5" fill="#f6e2d4"/><ellipse cx="17.40" cy="10.00" rx="1.5" ry="0.7" fill="#1e2226"/><rect x="15.20" y="12.60" width="4.2" height="0.6" fill="#8060b0" opacity=".4"/><ellipse cx="21.90" cy="11.40" rx="1.5" ry="1.5" fill="#f6e2d4"/><ellipse cx="21.90" cy="10.00" rx="1.5" ry="0.7" fill="#eef2f6"/><rect x="19.70" y="12.60" width="4.2" height="0.6" fill="#8060b0" opacity=".4"/><text x="22.25" y="5.03" font-size="4.0" font-weight="bold" font-family="Liberation Sans" fill="#fff" textLength="86.52" lengthAdjust="spacingAndGlyphs" >Банкны санхүүгийн байдлын тайлан</text><text x="48.51" y="11.36" font-size="4.0" font-weight="bold" font-family="Liberation Sans" fill="#fff" textLength="34.61" lengthAdjust="spacingAndGlyphs" >/сая төгрөгөөр/</text><rect x="1.97" y="17.67" width="10.74" height="16.11" fill="#e9ecf4" /><rect x="1.97" y="33.78" width="10.74" height="26.25" fill="#f79646" /><rect x="12.71" y="17.67" width="40.33" height="16.11" fill="#92d050" /><rect x="53.04" y="17.67" width="40.81" height="16.11" fill="#00b0f0" /><rect x="93.85" y="17.67" width="33.41" height="16.11" fill="#ffff00" /><rect x="12.71" y="33.78" width="114.56" height="26.25" fill="#e9ecf4" /><rect x="12.71" y="26.15" width="114.56" height="0.24" fill="#fff" opacity=".5"/><rect x="1.97" y="40.82" width="125.30" height="0.24" fill="#fff" opacity=".8"/><rect x="1.97" y="50.97" width="125.30" height="0.24" fill="#fff" opacity=".8"/><rect x="23.68" y="26.26" width="0.24" height="33.77" fill="#fff" opacity=".6"/><rect x="32.28" y="26.26" width="0.24" height="33.77" fill="#fff" opacity=".6"/><rect x="42.42" y="26.26" width="0.24" height="33.77" fill="#fff" opacity=".6"/><rect x="65.09" y="26.26" width="0.24" height="33.77" fill="#fff" opacity=".6"/><rect x="76.43" y="26.26" width="0.24" height="33.77" fill="#fff" opacity=".6"/><rect x="84.78" y="26.26" width="0.24" height="33.77" fill="#fff" opacity=".6"/><rect x="102.44" y="26.26" width="0.24" height="33.77" fill="#fff" opacity=".6"/><rect x="111.27" y="26.26" width="0.24" height="33.77" fill="#fff" opacity=".6"/><rect x="119.39" y="26.26" width="0.24" height="33.77" fill="#fff" opacity=".6"/><text x="29.41" y="23.10" font-size="2.4699999999999998" font-weight="normal" font-family="Liberation Sans" fill="#4e3030" textLength="7.76" lengthAdjust="spacingAndGlyphs" opacity="0.6">Банкны </text><text x="68.79" y="23.10" font-size="2.4699999999999998" font-weight="normal" font-family="Liberation Sans" fill="#4e3030" textLength="9.55" lengthAdjust="spacingAndGlyphs" opacity="0.6">Банкны са</text><text x="103.40" y="23.10" font-size="2.4699999999999998" font-weight="normal" font-family="Liberation Sans" fill="#4e3030" textLength="14.32" lengthAdjust="spacingAndGlyphs" opacity="0.6">Банкны санхүү</text><text x="2.56" y="25.58" font-size="2.08" font-weight="normal" font-family="Liberation Sans" fill="#4e3030" textLength="9.55" lengthAdjust="spacingAndGlyphs" opacity="0.6">Банкны сан</text><text x="3.16" y="38.99" font-size="2.21" font-weight="normal" font-family="Liberation Sans" fill="#4e3030" textLength="7.76" lengthAdjust="spacingAndGlyphs" opacity="0.6">Банкны с</text><text x="2.56" y="47.11" font-size="2.21" font-weight="normal" font-family="Liberation Sans" fill="#4e3030" textLength="9.55" lengthAdjust="spacingAndGlyphs" opacity="0.6">Банкны сан</text><text x="2.56" y="56.06" font-size="2.21" font-weight="normal" font-family="Liberation Sans" fill="#4e3030" textLength="9.55" lengthAdjust="spacingAndGlyphs" opacity="0.6">Банкны сан</text><text x="16.29" y="31.00" font-size="2.21" font-weight="normal" font-family="Liberation Sans" fill="#4e3030" textLength="4.77" lengthAdjust="spacingAndGlyphs" opacity="0.5">Банкн</text><text x="25.83" y="31.00" font-size="2.21" font-weight="normal" font-family="Liberation Sans" fill="#4e3030" textLength="4.18" lengthAdjust="spacingAndGlyphs" opacity="0.5">Банк</text><text x="35.98" y="31.00" font-size="2.21" font-weight="normal" font-family="Liberation Sans" fill="#4e3030" textLength="4.18" lengthAdjust="spacingAndGlyphs" opacity="0.5">ы са</text><text x="45.52" y="31.00" font-size="2.21" font-weight="normal" font-family="Liberation Sans" fill="#4e3030" textLength="5.37" lengthAdjust="spacingAndGlyphs" opacity="0.5">ы сан</text><text x="58.05" y="31.00" font-size="2.21" font-weight="normal" font-family="Liberation Sans" fill="#4e3030" textLength="4.77" lengthAdjust="spacingAndGlyphs" opacity="0.5">үтэц </text><text x="68.79" y="31.00" font-size="2.21" font-weight="normal" font-family="Liberation Sans" fill="#4e3030" textLength="5.37" lengthAdjust="spacingAndGlyphs" opacity="0.5">Банкн</text><text x="78.94" y="31.00" font-size="2.21" font-weight="normal" font-family="Liberation Sans" fill="#4e3030" textLength="4.18" lengthAdjust="spacingAndGlyphs" opacity="0.5">ы са</text><text x="87.89" y="31.00" font-size="2.21" font-weight="normal" font-family="Liberation Sans" fill="#4e3030" textLength="4.18" lengthAdjust="spacingAndGlyphs" opacity="0.5">Банк</text><text x="96.24" y="31.00" font-size="2.21" font-weight="normal" font-family="Liberation Sans" fill="#4e3030" textLength="4.18" lengthAdjust="spacingAndGlyphs" opacity="0.5">үтэц</text><text x="104.59" y="31.00" font-size="2.21" font-weight="normal" font-family="Liberation Sans" fill="#4e3030" textLength="4.18" lengthAdjust="spacingAndGlyphs" opacity="0.5">йлан</text><text x="113.54" y="31.00" font-size="2.21" font-weight="normal" font-family="Liberation Sans" fill="#4e3030" textLength="3.58" lengthAdjust="spacingAndGlyphs" opacity="0.5">йн </text><text x="121.89" y="31.00" font-size="2.21" font-weight="normal" font-family="Liberation Sans" fill="#4e3030" textLength="3.58" lengthAdjust="spacingAndGlyphs" opacity="0.5">ы с</text><text x="15.69" y="38.99" font-size="2.21" font-weight="normal" font-family="Liberation Sans" fill="#4e3030" textLength="6.56" lengthAdjust="spacingAndGlyphs" opacity="0.55">нкны са</text><text x="25.24" y="38.99" font-size="2.21" font-weight="normal" font-family="Liberation Sans" fill="#4e3030" textLength="5.97" lengthAdjust="spacingAndGlyphs" opacity="0.55">нкны с</text><text x="35.38" y="38.99" font-size="2.21" font-weight="normal" font-family="Liberation Sans" fill="#4e3030" textLength="5.97" lengthAdjust="spacingAndGlyphs" opacity="0.55">санхүү</text><text x="44.93" y="38.99" font-size="2.21" font-weight="normal" font-family="Liberation Sans" fill="#4e3030" textLength="7.16" lengthAdjust="spacingAndGlyphs" opacity="0.55">санхүүг</text><text x="57.46" y="38.99" font-size="2.21" font-weight="normal" font-family="Liberation Sans" fill="#4e3030" textLength="6.56" lengthAdjust="spacingAndGlyphs" opacity="0.55">эц бүрэ</text><text x="68.20" y="38.99" font-size="2.21" font-weight="normal" font-family="Liberation Sans" fill="#4e3030" textLength="7.16" lengthAdjust="spacingAndGlyphs" opacity="0.55">нкны са</text><text x="78.34" y="38.99" font-size="2.21" font-weight="normal" font-family="Liberation Sans" fill="#4e3030" textLength="5.97" lengthAdjust="spacingAndGlyphs" opacity="0.55">санхүү</text><text x="87.29" y="38.99" font-size="2.21" font-weight="normal" font-family="Liberation Sans" fill="#4e3030" textLength="5.97" lengthAdjust="spacingAndGlyphs" opacity="0.55">нкны с</text><text x="95.64" y="38.99" font-size="2.21" font-weight="normal" font-family="Liberation Sans" fill="#4e3030" textLength="5.97" lengthAdjust="spacingAndGlyphs" opacity="0.55">эц бүр</text><text x="104.00" y="38.99" font-size="2.21" font-weight="normal" font-family="Liberation Sans" fill="#4e3030" textLength="5.97" lengthAdjust="spacingAndGlyphs" opacity="0.55">ангийн</text><text x="112.95" y="38.99" font-size="2.21" font-weight="normal" font-family="Liberation Sans" fill="#4e3030" textLength="5.37" lengthAdjust="spacingAndGlyphs" opacity="0.55"> тайл</text><text x="121.30" y="38.99" font-size="2.21" font-weight="normal" font-family="Liberation Sans" fill="#4e3030" textLength="5.37" lengthAdjust="spacingAndGlyphs" opacity="0.55">санхү</text><text x="15.69" y="47.11" font-size="2.21" font-weight="normal" font-family="Liberation Sans" fill="#4e3030" textLength="6.56" lengthAdjust="spacingAndGlyphs" opacity="0.55">үтэц бү</text><text x="25.24" y="47.11" font-size="2.21" font-weight="normal" font-family="Liberation Sans" fill="#4e3030" textLength="5.97" lengthAdjust="spacingAndGlyphs" opacity="0.55">үтэц б</text><text x="35.38" y="47.11" font-size="2.21" font-weight="normal" font-family="Liberation Sans" fill="#4e3030" textLength="5.97" lengthAdjust="spacingAndGlyphs" opacity="0.55">бүрэлд</text><text x="44.93" y="47.11" font-size="2.21" font-weight="normal" font-family="Liberation Sans" fill="#4e3030" textLength="7.16" lengthAdjust="spacingAndGlyphs" opacity="0.55">бүрэлдэ</text><text x="57.46" y="47.11" font-size="2.21" font-weight="normal" font-family="Liberation Sans" fill="#4e3030" textLength="6.56" lengthAdjust="spacingAndGlyphs" opacity="0.55">йлангий</text><text x="68.20" y="47.11" font-size="2.21" font-weight="normal" font-family="Liberation Sans" fill="#4e3030" textLength="7.16" lengthAdjust="spacingAndGlyphs" opacity="0.55">үтэц бү</text><text x="78.34" y="47.11" font-size="2.21" font-weight="normal" font-family="Liberation Sans" fill="#4e3030" textLength="5.97" lengthAdjust="spacingAndGlyphs" opacity="0.55">бүрэлд</text><text x="87.29" y="47.11" font-size="2.21" font-weight="normal" font-family="Liberation Sans" fill="#4e3030" textLength="5.97" lengthAdjust="spacingAndGlyphs" opacity="0.55">үтэц б</text><text x="95.64" y="47.11" font-size="2.21" font-weight="normal" font-family="Liberation Sans" fill="#4e3030" textLength="5.97" lengthAdjust="spacingAndGlyphs" opacity="0.55">йланги</text><text x="104.00" y="47.11" font-size="2.21" font-weight="normal" font-family="Liberation Sans" fill="#4e3030" textLength="5.97" lengthAdjust="spacingAndGlyphs" opacity="0.55">хүүгий</text><text x="112.95" y="47.11" font-size="2.21" font-weight="normal" font-family="Liberation Sans" fill="#4e3030" textLength="5.37" lengthAdjust="spacingAndGlyphs" opacity="0.55">ы сан</text><text x="121.30" y="47.11" font-size="2.21" font-weight="normal" font-family="Liberation Sans" fill="#4e3030" textLength="5.37" lengthAdjust="spacingAndGlyphs" opacity="0.55">бүрэл</text><text x="15.69" y="57.01" font-size="2.21" font-weight="normal" font-family="Liberation Sans" fill="#4e3030" textLength="6.56" lengthAdjust="spacingAndGlyphs" opacity="0.55">ц бүрэл</text><text x="25.24" y="57.01" font-size="2.21" font-weight="normal" font-family="Liberation Sans" fill="#4e3030" textLength="5.97" lengthAdjust="spacingAndGlyphs" opacity="0.55">ц бүрэ</text><text x="35.38" y="57.01" font-size="2.21" font-weight="normal" font-family="Liberation Sans" fill="#4e3030" textLength="5.97" lengthAdjust="spacingAndGlyphs" opacity="0.55">элдэхү</text><text x="44.93" y="57.01" font-size="2.21" font-weight="normal" font-family="Liberation Sans" fill="#4e3030" textLength="7.16" lengthAdjust="spacingAndGlyphs" opacity="0.55">элдэхүү</text><text x="57.46" y="57.01" font-size="2.21" font-weight="normal" font-family="Liberation Sans" fill="#4e3030" textLength="6.56" lengthAdjust="spacingAndGlyphs" opacity="0.55">нгийн б</text><text x="68.20" y="57.01" font-size="2.21" font-weight="normal" font-family="Liberation Sans" fill="#4e3030" textLength="7.16" lengthAdjust="spacingAndGlyphs" opacity="0.55">ц бүрэл</text><text x="78.34" y="57.01" font-size="2.21" font-weight="normal" font-family="Liberation Sans" fill="#4e3030" textLength="5.97" lengthAdjust="spacingAndGlyphs" opacity="0.55">элдэхү</text><text x="87.29" y="57.01" font-size="2.21" font-weight="normal" font-family="Liberation Sans" fill="#4e3030" textLength="5.97" lengthAdjust="spacingAndGlyphs" opacity="0.55">ц бүрэ</text><text x="95.64" y="57.01" font-size="2.21" font-weight="normal" font-family="Liberation Sans" fill="#4e3030" textLength="5.97" lengthAdjust="spacingAndGlyphs" opacity="0.55">нгийн </text><text x="104.00" y="57.01" font-size="2.21" font-weight="normal" font-family="Liberation Sans" fill="#4e3030" textLength="5.97" lengthAdjust="spacingAndGlyphs" opacity="0.55">гийн т</text><text x="112.95" y="57.01" font-size="2.21" font-weight="normal" font-family="Liberation Sans" fill="#4e3030" textLength="5.37" lengthAdjust="spacingAndGlyphs" opacity="0.55">анхүү</text><text x="121.30" y="57.01" font-size="2.21" font-weight="normal" font-family="Liberation Sans" fill="#4e3030" textLength="5.37" lengthAdjust="spacingAndGlyphs" opacity="0.55">элдэх</text></svg></div></div><span class="num" style="left:532px;top:265px;color:#444">11</span><div class="th" style="left:699px;top:185px;background:#fad6bb"><div style="position:absolute;left:0;top:0;width:131px;height:74px;overflow:hidden"><svg width="131" height="74" viewBox="0 0 131 74" font-family="Liberation Sans"><rect x="0.00" y="0.00" width="131.00" height="13.00" fill="#66a6cb" /><rect x="-4.00" y="12.90" width="139.98" height="66.11" fill="#6a5e56" /><defs><radialGradient id="g12a" cx=".5" cy=".5" r=".7"><stop offset="0" stop-color="#4b4b4b"/><stop offset="1" stop-color="#222"/></radialGradient></defs><rect x="-4.00" y="12.90" width="68.62" height="30.43" fill="url(#g12a)"/><defs><radialGradient id="g12b" cx=".5" cy=".5" r=".7"><stop offset="0" stop-color="#4b4b4b"/><stop offset="1" stop-color="#222"/></radialGradient></defs><rect x="-4.00" y="43.69" width="68.62" height="35.32" fill="url(#g12b)"/><defs><radialGradient id="g12c" cx=".5" cy=".5" r=".7"><stop offset="0" stop-color="#4b4b4b"/><stop offset="1" stop-color="#222"/></radialGradient></defs><rect x="64.62" y="12.90" width="71.36" height="66.11" fill="url(#g12c)"/><rect x="1.50" y="1.00" width="7.2" height="12" rx="0.8" fill="#25292b"/><rect x="2.10" y="4.60" width="1.6" height="1.6" fill="#e8e8e8"/><rect x="4.20" y="3.60" width="1.7" height="2.6" fill="#e0e0e0"/><rect x="6.30" y="2.80" width="1.8" height="3.4" fill="#e0e0e0"/><path d="M2.10 3.90 L5.50 2.20" stroke="#9a1a2a" stroke-width="0.9"/><rect x="2.00" y="7.00" width="6.2" height="5.4" fill="#1c1f20"/><rect x="2.30" y="8.60" width="5.6" height="1.6" fill="#8a8a8a" opacity=".8"/><circle cx="2.70" cy="13.30" r="0.9" fill="#222"/><circle cx="7.50" cy="13.30" r="0.9" fill="#222"/><ellipse cx="12.50" cy="11.40" rx="1.5" ry="1.5" fill="#f6e2d4"/><ellipse cx="12.50" cy="10.00" rx="1.5" ry="0.7" fill="#1e2226"/><rect x="10.30" y="12.60" width="4.2" height="0.6" fill="#8060b0" opacity=".4"/><ellipse cx="17.40" cy="11.40" rx="1.5" ry="1.5" fill="#f6e2d4"/><ellipse cx="17.40" cy="10.00" rx="1.5" ry="0.7" fill="#1e2226"/><rect x="15.20" y="12.60" width="4.2" height="0.6" fill="#8060b0" opacity=".4"/><ellipse cx="21.90" cy="11.40" rx="1.5" ry="1.5" fill="#f6e2d4"/><ellipse cx="21.90" cy="10.00" rx="1.5" ry="0.7" fill="#eef2f6"/><rect x="19.70" y="12.60" width="4.2" height="0.6" fill="#8060b0" opacity=".4"/><text x="10.32" y="7.18" font-size="4.0" font-weight="bold" font-family="Liberation Sans" fill="#fff" textLength="110.38" lengthAdjust="spacingAndGlyphs" >Банкуудын нэгтгэсэн бүтэц 2018 оны байдлаар</text><text x="12.11" y="17.32" font-size="3.0" font-weight="bold" font-family="Liberation Sans" fill="#fff" textLength="40.57" lengthAdjust="spacingAndGlyphs" >Монгол банкны нэгтгэсэн бүтэц</text><text x="10.32" y="47.39" font-size="3.0" font-weight="bold" font-family="Liberation Sans" fill="#fff" textLength="44.15" lengthAdjust="spacingAndGlyphs" >Төрийн банкны нэгтгэсэн бүтэц</text><text x="72.37" y="17.32" font-size="3.0" font-weight="bold" font-family="Liberation Sans" fill="#fff" textLength="50.72" lengthAdjust="spacingAndGlyphs" >Чингис хаан банкны нэгтгэсэн бүтэц</text><path d="M49.70 29.61 L49.67 30.10 L49.60 30.60 L49.48 31.09 L49.32 31.58 L49.11 32.06 L48.85 32.54 L48.55 33.01 L48.20 33.47 L47.81 33.92 L47.38 34.36 L46.91 34.78 L46.39 35.19 L46.39 40.69 L46.91 40.28 L47.38 39.86 L47.81 39.42 L48.20 38.97 L48.55 38.51 L48.85 38.04 L49.11 37.56 L49.32 37.08 L49.48 36.59 L49.60 36.10 L49.67 35.60 L49.70 35.11Z" fill="#9e9e00"/><path d="M46.39 35.19 L45.84 35.58 L45.25 35.96 L44.63 36.32 L43.97 36.67 L43.28 36.99 L42.56 37.29 L41.82 37.57 L41.05 37.83 L40.25 38.07 L39.43 38.28 L38.60 38.48 L37.74 38.64 L37.74 44.14 L38.60 43.98 L39.43 43.78 L40.25 43.57 L41.05 43.33 L41.82 43.07 L42.56 42.79 L43.28 42.49 L43.97 42.17 L44.63 41.82 L45.25 41.46 L45.84 41.08 L46.39 40.69Z" fill="#451d63"/><path d="M37.74 38.64 L36.70 38.81 L35.64 38.94 L34.56 39.03 L33.48 39.09 L32.40 39.11 L31.31 39.09 L30.23 39.03 L29.15 38.94 L28.09 38.81 L27.05 38.64 L26.03 38.44 L25.03 38.20 L25.03 43.70 L26.03 43.94 L27.05 44.14 L28.09 44.31 L29.15 44.44 L30.23 44.53 L31.31 44.59 L32.40 44.61 L33.48 44.59 L34.56 44.53 L35.64 44.44 L36.70 44.31 L37.74 44.14Z" fill="#006331"/><path d="M25.03 38.20 L23.59 37.78 L22.23 37.29 L20.96 36.73 L19.79 36.11 L18.73 35.43 L17.79 34.70 L16.98 33.92 L16.31 33.10 L15.78 32.26 L15.40 31.39 L15.17 30.50 L15.10 29.61 L15.10 35.11 L15.17 36.00 L15.40 36.89 L15.78 37.76 L16.31 38.60 L16.98 39.42 L17.79 40.20 L18.73 40.93 L19.79 41.61 L20.96 42.23 L22.23 42.79 L23.59 43.28 L25.03 43.70Z" fill="#9e0000"/><path d="M32.40 29.61 L32.40 20.11 L34.77 20.20 L37.09 20.46 L39.33 20.90 L41.44 21.51 L43.37 22.26 L45.10 23.16 L46.59 24.17 L47.81 25.29 L48.74 26.49 L49.36 27.75 L49.67 29.05 L49.64 30.35 L49.29 31.64 L48.63 32.89 L47.65 34.08 L46.39 35.19Z" fill="#ffff00"/><path d="M32.40 29.61 L46.39 35.19 L44.63 36.32 L42.56 37.29 L40.25 38.07 L37.74 38.64Z" fill="#7030a0"/><path d="M32.40 29.61 L37.74 38.64 L35.21 38.98 L32.61 39.11 L30.01 39.02 L27.47 38.71 L25.03 38.20Z" fill="#00a050"/><path d="M32.40 29.61 L25.03 38.20 L23.02 37.59 L21.18 36.84 L19.54 35.96 L18.12 34.97 L16.95 33.89 L16.06 32.73 L15.45 31.52 L15.14 30.27 L15.13 29.01 L15.43 27.76 L16.02 26.54 L16.90 25.38 L18.05 24.29 L19.46 23.30 L21.09 22.41 L22.92 21.66 L24.92 21.04 L27.05 20.57Z" fill="#ff0000"/><path d="M32.40 29.61 L27.05 20.57 L29.15 20.27 L31.31 20.12Z" fill="#f0f0f0"/><path d="M32.40 29.61 L31.31 20.12 L31.85 20.11 L32.40 20.11Z" fill="#0070c0"/><path d="M50.30 58.25 L50.29 58.40 L50.29 58.54 L50.28 58.69 L50.26 58.84 L50.24 58.99 L50.22 59.14 L50.19 59.29 L50.16 59.44 L50.12 59.58 L50.08 59.73 L50.03 59.88 L49.98 60.03 L49.98 65.53 L50.03 65.38 L50.08 65.23 L50.12 65.08 L50.16 64.94 L50.19 64.79 L50.22 64.64 L50.24 64.49 L50.26 64.34 L50.28 64.19 L50.29 64.04 L50.29 63.90 L50.30 63.75Z" fill="#9e9e00"/><path d="M49.98 60.03 L49.82 60.42 L49.64 60.80 L49.42 61.18 L49.17 61.56 L48.90 61.93 L48.59 62.29 L48.26 62.65 L47.90 63.00 L47.51 63.34 L47.09 63.67 L46.65 63.99 L46.19 64.30 L46.19 69.80 L46.65 69.49 L47.09 69.17 L47.51 68.84 L47.90 68.50 L48.26 68.15 L48.59 67.79 L48.90 67.43 L49.17 67.06 L49.42 66.68 L49.64 66.30 L49.82 65.92 L49.98 65.53Z" fill="#451d63"/><path d="M46.19 64.30 L45.44 64.75 L44.65 65.17 L43.81 65.57 L42.92 65.93 L41.99 66.27 L41.02 66.57 L40.02 66.84 L38.99 67.08 L37.93 67.28 L36.85 67.45 L35.75 67.58 L34.64 67.67 L34.64 73.17 L35.75 73.08 L36.85 72.95 L37.93 72.78 L38.99 72.58 L40.02 72.34 L41.02 72.07 L41.99 71.77 L42.92 71.43 L43.81 71.07 L44.65 70.67 L45.44 70.25 L46.19 69.80Z" fill="#5a8031"/><path d="M34.64 67.67 L32.12 67.74 L29.60 67.63 L27.13 67.33 L24.77 66.84 L22.57 66.19 L20.56 65.37 L18.78 64.42 L17.28 63.34 L16.08 62.16 L15.21 60.90 L14.67 59.58 L14.50 58.25 L14.50 63.75 L14.67 65.08 L15.21 66.40 L16.08 67.66 L17.28 68.84 L18.78 69.92 L20.56 70.87 L22.57 71.69 L24.77 72.34 L27.13 72.83 L29.60 73.13 L32.12 73.24 L34.64 73.17Z" fill="#9e0000"/><path d="M32.40 58.25 L32.40 48.75 L34.81 48.83 L37.18 49.09 L39.47 49.52 L41.62 50.10 L43.60 50.84 L45.39 51.71 L46.93 52.70 L48.21 53.79 L49.19 54.96 L49.87 56.20 L50.24 57.47 L50.27 58.75 L49.98 60.03Z" fill="#ffff00"/><path d="M32.40 58.25 L49.98 60.03 L49.17 61.56 L47.90 63.00 L46.19 64.30Z" fill="#7030a0"/><path d="M32.40 58.25 L46.19 64.30 L44.32 65.33 L42.18 66.20 L39.81 66.89 L37.28 67.39 L34.64 67.67Z" fill="#92d050"/><path d="M32.40 58.25 L34.64 67.67 L32.24 67.75 L29.85 67.65 L27.50 67.38 L25.24 66.95 L23.11 66.37 L21.14 65.63 L19.38 64.77 L17.85 63.79 L16.59 62.70 L15.61 61.54 L14.93 60.32 L14.56 59.06 L14.52 57.78 L14.79 56.52 L15.39 55.28 L16.29 54.10 L17.48 53.00 L18.94 51.98 L20.64 51.08 L22.55 50.31 L24.64 49.68 L26.86 49.21Z" fill="#ff0000"/><path d="M32.40 58.25 L26.86 49.21 L29.04 48.91 L31.27 48.76Z" fill="#f0f0f0"/><path d="M32.40 58.25 L31.27 48.76 L31.83 48.75 L32.40 48.75Z" fill="#0070c0"/><path d="M122.83 32.95 L121.97 36.00 L119.43 38.85 L115.39 41.29 L110.13 43.17 L104.01 44.35 L97.43 44.75 L90.86 44.35 L84.73 43.17 L79.47 41.29 L75.43 38.85 L72.90 36.00 L72.03 32.95 L72.03 38.95 L72.90 42.00 L75.43 44.85 L79.47 47.29 L84.73 49.17 L90.86 50.35 L97.43 50.75 L104.01 50.35 L110.13 49.17 L115.39 47.29 L119.43 44.85 L121.97 42.00 L122.83 38.95Z" fill="#9e0000"/><path d="M97.43 32.95 L97.43 21.15 L98.23 21.15 L99.03 21.17Z" fill="#92d050"/><path d="M97.43 32.95 L99.03 21.17 L102.97 21.43 L106.78 21.98Z" fill="#7030a0"/><path d="M97.43 32.95 L106.78 21.98 L108.25 22.27 L109.67 22.61Z" fill="#92d050"/><path d="M97.43 32.95 L109.67 22.61 L112.50 23.45 L115.08 24.46 L117.34 25.62 L119.25 26.91 L120.78 28.30 L121.90 29.77 L122.58 31.31 L122.83 32.87 L122.63 34.43 L121.99 35.96 L120.92 37.44 L119.43 38.85 L117.56 40.15 L115.33 41.32 L112.79 42.35 L109.98 43.21 L106.95 43.89 L103.75 44.38 L100.44 44.66 L97.08 44.75 L93.72 44.62 L90.43 44.29 L87.26 43.76 L84.27 43.04 L81.52 42.14 L79.04 41.09 L76.88 39.88 L75.09 38.56 L73.69 37.14 L72.70 35.64 L72.15 34.10 L72.05 32.54 L72.39 30.98 L73.17 29.46 L74.37 28.00 L75.99 26.62Z" fill="#ff0000"/><path d="M97.43 32.95 L75.99 26.62 L77.86 25.43 L80.04 24.35Z" fill="#f0f0f0"/><path d="M97.43 32.95 L80.04 24.35 L83.02 23.23 L86.33 22.33 L89.89 21.68 L93.62 21.28 L97.43 21.15Z" fill="#00b0f0"/><rect x="74.76" y="54.67" width="1.19" height="1.19" fill="#92d050" /><text x="76.43" y="56.20" font-size="2.6" font-weight="normal" font-family="Liberation Sans" fill="#ddd" textLength="30.55" lengthAdjust="spacingAndGlyphs" opacity="0.75">йлангийн бүтэц бүрэлдэхүүн </text><rect x="74.76" y="57.65" width="1.19" height="1.19" fill="#f0f0f0" /><text x="76.43" y="59.18" font-size="2.6" font-weight="normal" font-family="Liberation Sans" fill="#ddd" textLength="45.47" lengthAdjust="spacingAndGlyphs" opacity="0.75">йлангийн бүтэц бүрэлдэхүүн агуулга тодруу</text><rect x="74.76" y="61.83" width="1.19" height="1.19" fill="#92d050" /><text x="76.43" y="63.36" font-size="2.6" font-weight="normal" font-family="Liberation Sans" fill="#ddd" textLength="25.78" lengthAdjust="spacingAndGlyphs" opacity="0.75">йлангийн бүтэц бүрэлдэх</text><rect x="74.76" y="64.81" width="1.19" height="1.19" fill="#ff0000" /><text x="76.43" y="66.34" font-size="2.6" font-weight="normal" font-family="Liberation Sans" fill="#ddd" textLength="16.23" lengthAdjust="spacingAndGlyphs" opacity="0.75">йлангийн бүтэц</text><rect x="74.76" y="67.79" width="1.19" height="1.19" fill="#00b0f0" /><text x="76.43" y="69.33" font-size="2.6" font-weight="normal" font-family="Liberation Sans" fill="#ddd" textLength="12.65" lengthAdjust="spacingAndGlyphs" opacity="0.75">йлангийн бү</text><rect x="74.76" y="71.73" width="1.19" height="1.19" fill="#0070c0" /><text x="76.43" y="73.26" font-size="2.6" font-weight="normal" font-family="Liberation Sans" fill="#ddd" textLength="12.05" lengthAdjust="spacingAndGlyphs" opacity="0.75">йлангийн бү</text></svg></div></div><span class="num" style="left:700px;top:265px;color:#444">12</span><div class="th" style="left:867px;top:185px;background:#fad6bb"><div style="position:absolute;left:0;top:0;width:131px;height:74px;overflow:hidden"><svg width="131" height="74" viewBox="0 0 131 74" font-family="Liberation Sans"><rect x="0.00" y="0.00" width="131.00" height="13.00" fill="#66a6cb" /><rect x="-4.00" y="12.90" width="139.98" height="66.11" fill="#6a5e56" /><defs><radialGradient id="g13a" cx=".5" cy=".5" r=".7"><stop offset="0" stop-color="#4b4b4b"/><stop offset="1" stop-color="#222"/></radialGradient></defs><rect x="-4.00" y="12.90" width="68.62" height="29.83" fill="url(#g13a)"/><defs><radialGradient id="g13b" cx=".5" cy=".5" r=".7"><stop offset="0" stop-color="#4b4b4b"/><stop offset="1" stop-color="#222"/></radialGradient></defs><rect x="-4.00" y="43.09" width="68.62" height="35.92" fill="url(#g13b)"/><defs><radialGradient id="g13c" cx=".5" cy=".5" r=".7"><stop offset="0" stop-color="#4b4b4b"/><stop offset="1" stop-color="#222"/></radialGradient></defs><rect x="64.62" y="12.90" width="71.36" height="66.11" fill="url(#g13c)"/><rect x="1.50" y="1.00" width="7.2" height="12" rx="0.8" fill="#25292b"/><rect x="2.10" y="4.60" width="1.6" height="1.6" fill="#e8e8e8"/><rect x="4.20" y="3.60" width="1.7" height="2.6" fill="#e0e0e0"/><rect x="6.30" y="2.80" width="1.8" height="3.4" fill="#e0e0e0"/><path d="M2.10 3.90 L5.50 2.20" stroke="#9a1a2a" stroke-width="0.9"/><rect x="2.00" y="7.00" width="6.2" height="5.4" fill="#1c1f20"/><rect x="2.30" y="8.60" width="5.6" height="1.6" fill="#8a8a8a" opacity=".8"/><circle cx="2.70" cy="13.30" r="0.9" fill="#222"/><circle cx="7.50" cy="13.30" r="0.9" fill="#222"/><ellipse cx="12.50" cy="11.40" rx="1.5" ry="1.5" fill="#f6e2d4"/><ellipse cx="12.50" cy="10.00" rx="1.5" ry="0.7" fill="#1e2226"/><rect x="10.30" y="12.60" width="4.2" height="0.6" fill="#8060b0" opacity=".4"/><ellipse cx="17.40" cy="11.40" rx="1.5" ry="1.5" fill="#f6e2d4"/><ellipse cx="17.40" cy="10.00" rx="1.5" ry="0.7" fill="#1e2226"/><rect x="15.20" y="12.60" width="4.2" height="0.6" fill="#8060b0" opacity=".4"/><ellipse cx="21.90" cy="11.40" rx="1.5" ry="1.5" fill="#f6e2d4"/><ellipse cx="21.90" cy="10.00" rx="1.5" ry="0.7" fill="#eef2f6"/><rect x="19.70" y="12.60" width="4.2" height="0.6" fill="#8060b0" opacity=".4"/><text x="10.92" y="7.18" font-size="4.0" font-weight="bold" font-family="Liberation Sans" fill="#fff" textLength="118.14" lengthAdjust="spacingAndGlyphs" >Банкуудын өр төлбөрийн бүтэц 2018 оны байдлаар</text><text x="10.32" y="16.37" font-size="3.0" font-weight="bold" font-family="Liberation Sans" fill="#fff" textLength="44.75" lengthAdjust="spacingAndGlyphs" >Монгол банкны өр төлбөрийн бүтэц</text><text x="11.51" y="46.22" font-size="2.4" font-weight="bold" font-family="Liberation Sans" fill="#fff" textLength="42.36" lengthAdjust="spacingAndGlyphs" >Төрийн банкны өр төлбөрийн бүтэц</text><text x="78.94" y="17.99" font-size="3.2" font-weight="bold" font-family="Liberation Sans" fill="#fff" textLength="38.19" lengthAdjust="spacingAndGlyphs" >Чингис хаан банкны өр</text><text x="84.90" y="23.00" font-size="3.2" font-weight="bold" font-family="Liberation Sans" fill="#fff" textLength="26.85" lengthAdjust="spacingAndGlyphs" >төлбөрийн бүтэц</text><path d="M49.69 27.46 L49.12 29.53 L47.46 31.46 L44.80 33.12 L41.34 34.39 L37.32 35.19 L32.99 35.46 L28.67 35.19 L24.64 34.39 L21.18 33.12 L18.53 31.46 L16.86 29.53 L16.29 27.46 L16.29 32.66 L16.86 34.73 L18.53 36.66 L21.18 38.32 L24.64 39.59 L28.67 40.39 L32.99 40.66 L37.32 40.39 L41.34 39.59 L44.80 38.32 L47.46 36.66 L49.12 34.73 L49.69 32.66Z" fill="#006d94"/><path d="M32.99 27.46 L32.99 19.46 L35.22 19.53 L37.40 19.74 L39.50 20.09 L41.49 20.57 L43.33 21.18 L44.99 21.89 L46.43 22.71 L47.63 23.60Z" fill="#00b050"/><path d="M32.99 27.46 L47.63 23.60 L48.57 24.57 L49.23 25.59 L49.61 26.64 L49.68 27.71 L49.47 28.77 L48.95 29.81 L48.16 30.81 L47.09 31.74 L45.78 32.61 L44.23 33.38 L42.49 34.04 L40.57 34.59 L38.53 35.01 L36.38 35.29 L34.17 35.44 L31.94 35.44 L29.73 35.30 L27.58 35.03 L25.53 34.61 L23.61 34.07 L21.85 33.42 L20.29 32.65 L18.96 31.80 L17.88 30.86 L17.07 29.87 L16.54 28.83 L16.31 27.77 L16.37 26.71 L16.72 25.65 L17.37 24.63 L18.30 23.66 L19.48 22.76Z" fill="#00b0f0"/><path d="M32.99 27.46 L19.48 22.76 L21.18 21.80 L23.18 20.99 L25.41 20.33 L27.83 19.85Z" fill="#ff0000"/><path d="M32.99 27.46 L27.83 19.85 L30.38 19.56 L32.99 19.46Z" fill="#ffff00"/><path d="M51.99 56.10 L51.35 58.17 L49.45 60.10 L46.43 61.75 L42.49 63.03 L37.91 63.83 L32.99 64.10 L28.08 63.83 L23.49 63.03 L19.56 61.75 L16.54 60.10 L14.64 58.17 L13.99 56.10 L13.99 61.90 L14.64 63.97 L16.54 65.90 L19.56 67.55 L23.49 68.83 L28.08 69.63 L32.99 69.90 L37.91 69.63 L42.49 68.83 L46.43 67.55 L49.45 65.90 L51.35 63.97 L51.99 61.90Z" fill="#006d94"/><path d="M32.99 56.10 L32.99 48.10 L35.47 48.17 L37.91 48.37 L40.26 48.71 L42.49 49.17 L44.56 49.75 L46.43 50.44 L48.07 51.23 L49.45 52.10 L50.55 53.04 L51.35 54.03 L51.83 55.05 L51.99 56.10Z" fill="#00b050"/><path d="M32.99 56.10 L51.99 56.10 L51.83 57.15 L51.34 58.18 L50.53 59.18 L49.42 60.12 L48.02 60.99 L46.36 61.78 L44.47 62.47 L42.38 63.05 L40.13 63.51 L37.76 63.84 L35.30 64.04 L32.80 64.10 L30.31 64.02 L27.86 63.80 L25.50 63.45 L23.27 62.97 L21.21 62.37 L19.36 61.67 L17.74 60.87 L16.38 59.98 L15.31 59.03 L14.55 58.02 L14.11 56.99 L14.00 55.94 L14.21 54.89 L14.75 53.86 L15.61 52.87 L16.77 51.94 L18.21 51.07 L19.90 50.30 L21.82 49.63Z" fill="#00b0f0"/><path d="M32.99 56.10 L21.82 49.63 L24.90 48.86 L28.27 48.35Z" fill="#ff0000"/><path d="M32.99 56.10 L28.27 48.35 L30.61 48.16 L32.99 48.10Z" fill="#ffff00"/><path d="M123.43 38.56 L123.21 40.19 L122.56 41.79 L121.50 43.34 L120.03 44.81 L118.18 46.17 L115.99 47.39 L113.49 48.47 L110.73 49.38 L107.75 50.10 L104.60 50.63 L101.34 50.95 L98.03 51.06 L98.03 57.06 L101.34 56.95 L104.60 56.63 L107.75 56.10 L110.73 55.38 L113.49 54.47 L115.99 53.39 L118.18 52.17 L120.03 50.81 L121.50 49.34 L122.56 47.79 L123.21 46.19 L123.43 44.56Z" fill="#006d31"/><path d="M98.03 51.06 L95.90 51.01 L93.79 50.88 L91.71 50.66 L89.68 50.36 L87.70 49.98 L85.79 49.51 L83.97 48.97 L82.25 48.35 L80.64 47.67 L79.15 46.92 L77.80 46.11 L76.58 45.25 L76.58 51.25 L77.80 52.11 L79.15 52.92 L80.64 53.67 L82.25 54.35 L83.97 54.97 L85.79 55.51 L87.70 55.98 L89.68 56.36 L91.71 56.66 L93.79 56.88 L95.90 57.01 L98.03 57.06Z" fill="#006d94"/><path d="M76.58 45.25 L75.97 44.75 L75.40 44.23 L74.88 43.70 L74.41 43.16 L74.00 42.61 L73.64 42.04 L73.33 41.47 L73.08 40.90 L72.88 40.32 L72.74 39.73 L72.66 39.14 L72.63 38.56 L72.63 44.56 L72.66 45.14 L72.74 45.73 L72.88 46.32 L73.08 46.90 L73.33 47.47 L73.64 48.04 L74.00 48.61 L74.41 49.16 L74.88 49.70 L75.40 50.23 L75.97 50.75 L76.58 51.25Z" fill="#9e0000"/><path d="M98.03 38.56 L98.03 26.06 L101.34 26.16 L104.60 26.48 L107.75 27.01 L110.73 27.73 L113.49 28.64 L115.99 29.72 L118.18 30.95 L120.03 32.31 L121.50 33.77 L122.56 35.32 L123.21 36.92 L123.43 38.56 L123.21 40.19 L122.56 41.79 L121.50 43.34 L120.03 44.81 L118.18 46.17 L115.99 47.39 L113.49 48.47 L110.73 49.38 L107.75 50.10 L104.60 50.63 L101.34 50.95 L98.03 51.06Z" fill="#00b050"/><path d="M98.03 38.56 L98.03 51.06 L94.39 50.93 L90.83 50.54 L87.42 49.91 L84.23 49.05 L81.32 47.97 L78.75 46.70 L76.58 45.25Z" fill="#00b0f0"/><path d="M98.03 38.56 L76.58 45.25 L74.88 43.70 L73.64 42.04 L72.88 40.32 L72.63 38.56 L72.88 36.79 L73.64 35.07 L74.88 33.41 L76.58 31.86Z" fill="#ff0000"/><path d="M98.03 38.56 L76.58 31.86 L78.75 30.42 L81.32 29.14 L84.23 28.06 L87.42 27.20 L90.83 26.57 L94.39 26.18 L98.03 26.06Z" fill="#ffff00"/><rect x="79.53" y="61.83" width="1.19" height="1.19" fill="#00b050" /><text x="81.20" y="63.36" font-size="2.6" font-weight="normal" font-family="Liberation Sans" fill="#ddd" textLength="7.28" lengthAdjust="spacingAndGlyphs" opacity="0.75">йланги</text><rect x="79.53" y="64.81" width="1.19" height="1.19" fill="#00b0f0" /><text x="81.20" y="66.34" font-size="2.6" font-weight="normal" font-family="Liberation Sans" fill="#ddd" textLength="8.47" lengthAdjust="spacingAndGlyphs" opacity="0.75">йлангий</text><rect x="79.53" y="67.79" width="1.19" height="1.19" fill="#ff0000" /><text x="81.20" y="69.33" font-size="2.6" font-weight="normal" font-family="Liberation Sans" fill="#ddd" textLength="37.11" lengthAdjust="spacingAndGlyphs" opacity="0.75">йлангийн бүтэц бүрэлдэхүүн агуулг</text><rect x="79.53" y="71.73" width="1.19" height="1.19" fill="#c0a000" /><text x="81.20" y="73.26" font-size="2.6" font-weight="normal" font-family="Liberation Sans" fill="#ddd" textLength="12.65" lengthAdjust="spacingAndGlyphs" opacity="0.75">йлангийн бү</text></svg></div></div><span class="num" style="left:868px;top:265px;color:#444">13</span><div class="th" style="left:1035px;top:185px;background:#fad6bb"><div style="position:absolute;left:0;top:0;width:131px;height:74px;overflow:hidden"><svg width="131" height="74" viewBox="0 0 131 74" font-family="Liberation Sans"><rect x="0.00" y="0.00" width="131.00" height="13.00" fill="#66a6cb" /><rect x="-4.00" y="12.90" width="139.98" height="66.11" fill="#6a5e56" /><defs><radialGradient id="g14a" cx=".5" cy=".5" r=".7"><stop offset="0" stop-color="#4b4b4b"/><stop offset="1" stop-color="#222"/></radialGradient></defs><rect x="-4.00" y="12.90" width="68.97" height="30.43" fill="url(#g14a)"/><defs><radialGradient id="g14b" cx=".5" cy=".5" r=".7"><stop offset="0" stop-color="#4b4b4b"/><stop offset="1" stop-color="#222"/></radialGradient></defs><rect x="-4.00" y="43.69" width="68.97" height="35.32" fill="url(#g14b)"/><defs><radialGradient id="g14c" cx=".5" cy=".5" r=".7"><stop offset="0" stop-color="#4b4b4b"/><stop offset="1" stop-color="#222"/></radialGradient></defs><rect x="64.97" y="12.90" width="71.00" height="42.96" fill="url(#g14c)"/><rect x="1.50" y="1.00" width="7.2" height="12" rx="0.8" fill="#25292b"/><rect x="2.10" y="4.60" width="1.6" height="1.6" fill="#e8e8e8"/><rect x="4.20" y="3.60" width="1.7" height="2.6" fill="#e0e0e0"/><rect x="6.30" y="2.80" width="1.8" height="3.4" fill="#e0e0e0"/><path d="M2.10 3.90 L5.50 2.20" stroke="#9a1a2a" stroke-width="0.9"/><rect x="2.00" y="7.00" width="6.2" height="5.4" fill="#1c1f20"/><rect x="2.30" y="8.60" width="5.6" height="1.6" fill="#8a8a8a" opacity=".8"/><circle cx="2.70" cy="13.30" r="0.9" fill="#222"/><circle cx="7.50" cy="13.30" r="0.9" fill="#222"/><ellipse cx="12.50" cy="11.40" rx="1.5" ry="1.5" fill="#f6e2d4"/><ellipse cx="12.50" cy="10.00" rx="1.5" ry="0.7" fill="#1e2226"/><rect x="10.30" y="12.60" width="4.2" height="0.6" fill="#8060b0" opacity=".4"/><ellipse cx="17.40" cy="11.40" rx="1.5" ry="1.5" fill="#f6e2d4"/><ellipse cx="17.40" cy="10.00" rx="1.5" ry="0.7" fill="#1e2226"/><rect x="15.20" y="12.60" width="4.2" height="0.6" fill="#8060b0" opacity=".4"/><ellipse cx="21.90" cy="11.40" rx="1.5" ry="1.5" fill="#f6e2d4"/><ellipse cx="21.90" cy="10.00" rx="1.5" ry="0.7" fill="#eef2f6"/><rect x="19.70" y="12.60" width="4.2" height="0.6" fill="#8060b0" opacity=".4"/><text x="12.71" y="5.99" font-size="4.0" font-weight="bold" font-family="Liberation Sans" fill="#fff" textLength="110.38" lengthAdjust="spacingAndGlyphs" >Банкуудын орлого зарлагын бүтэц 2018 оны байдлаар</text><text x="7.93" y="18.47" font-size="3.2" font-weight="bold" font-family="Liberation Sans" fill="#fff" textLength="48.93" lengthAdjust="spacingAndGlyphs" >Монгол банкны орлогын задаргаа</text><text x="8.53" y="47.42" font-size="2.4" font-weight="bold" font-family="Liberation Sans" fill="#fff" textLength="47.73" lengthAdjust="spacingAndGlyphs" >Төрийн банкны орлогын задаргаа</text><text x="74.76" y="17.11" font-size="2.4" font-weight="bold" font-family="Liberation Sans" fill="#fff" textLength="46.54" lengthAdjust="spacingAndGlyphs" >Чингис хаан банкны орлогын задаргаа</text><text x="93.85" y="20.33" font-size="2.4" font-weight="bold" font-family="Liberation Sans" fill="#fff" textLength="7.16" lengthAdjust="spacingAndGlyphs" >бүтэц</text><path d="M49.69 30.20 L49.12 32.53 L47.46 34.70 L44.80 36.57 L41.34 38.00 L37.32 38.90 L32.99 39.20 L28.67 38.90 L24.64 38.00 L21.18 36.57 L18.53 34.70 L16.86 32.53 L16.29 30.20 L16.29 36.20 L16.86 38.53 L18.53 40.70 L21.18 42.57 L24.64 44.00 L28.67 44.90 L32.99 45.20 L37.32 44.90 L41.34 44.00 L44.80 42.57 L47.46 40.70 L49.12 38.53 L49.69 36.20Z" fill="#9e0000"/><path d="M32.99 30.20 L30.90 21.27 L32.47 21.21 L34.04 21.22Z" fill="#00b0f0"/><path d="M32.99 30.20 L34.04 21.22 L35.09 21.27 L36.12 21.36Z" fill="#00b050"/><path d="M32.99 30.20 L36.12 21.36 L38.27 21.66 L40.32 22.11 L42.24 22.71 L44.00 23.43 L45.57 24.28 L46.91 25.23 L48.01 26.27 L48.85 27.37 L49.40 28.53 L49.67 29.71 L49.64 30.91 L49.32 32.09 L48.71 33.24 L47.83 34.33 L46.68 35.36 L45.30 36.29 L43.69 37.11 L41.90 37.82 L39.95 38.38 L37.88 38.81 L35.72 39.08 L33.52 39.20 L31.30 39.16 L29.12 38.96 L27.00 38.60 L24.99 38.10 L23.12 37.46 L21.42 36.69 L19.93 35.81 L18.67 34.83 L17.66 33.77 L16.92 32.64 L16.46 31.47 L16.29 30.28 L16.42 29.09 L16.84 27.91 L17.55 26.78 L18.52 25.71 L19.75 24.72 L21.22 23.82 L22.89 23.04 L24.74 22.38 L26.73 21.86 L28.84 21.49Z" fill="#ff0000"/><path d="M32.99 30.20 L28.84 21.49 L29.86 21.36 L30.90 21.27Z" fill="#ffc000"/><path d="M50.90 58.01 L50.74 59.16 L50.27 60.28 L49.49 61.37 L48.42 62.41 L47.07 63.36 L45.48 64.23 L43.66 64.99 L41.65 65.63 L39.48 66.14 L37.18 66.51 L34.81 66.73 L32.40 66.81 L32.40 71.81 L34.81 71.73 L37.18 71.51 L39.48 71.14 L41.65 70.63 L43.66 69.99 L45.48 69.23 L47.07 68.36 L48.42 67.41 L49.49 66.37 L50.27 65.28 L50.74 64.16 L50.90 63.01Z" fill="#006d94"/><path d="M32.40 66.81 L30.94 66.78 L29.50 66.70 L28.08 66.56 L26.68 66.38 L25.32 66.14 L24.00 65.85 L22.73 65.51 L21.52 65.13 L20.38 64.70 L19.31 64.23 L18.33 63.72 L17.43 63.18 L17.43 68.18 L18.33 68.72 L19.31 69.23 L20.38 69.70 L21.52 70.13 L22.73 70.51 L24.00 70.85 L25.32 71.14 L26.68 71.38 L28.08 71.56 L29.50 71.70 L30.94 71.78 L32.40 71.81Z" fill="#006327"/><path d="M17.43 63.18 L16.88 62.80 L16.37 62.41 L15.91 62.00 L15.50 61.59 L15.12 61.16 L14.80 60.73 L14.53 60.28 L14.30 59.84 L14.12 59.38 L14.00 58.93 L13.92 58.47 L13.90 58.01 L13.90 63.01 L13.92 63.47 L14.00 63.93 L14.12 64.38 L14.30 64.84 L14.53 65.28 L14.80 65.73 L15.12 66.16 L15.50 66.59 L15.91 67.00 L16.37 67.41 L16.88 67.80 L17.43 68.18Z" fill="#9e0000"/><path d="M32.40 58.01 L32.40 49.21 L34.81 49.28 L37.18 49.51 L39.48 49.88 L41.65 50.39 L43.66 51.03 L45.48 51.78 L47.07 52.65 L48.42 53.61 L49.49 54.64 L50.27 55.73 L50.74 56.86 L50.90 58.01 L50.74 59.16 L50.27 60.28 L49.49 61.37 L48.42 62.41 L47.07 63.36 L45.48 64.23 L43.66 64.99 L41.65 65.63 L39.48 66.14 L37.18 66.51 L34.81 66.73 L32.40 66.81Z" fill="#00b0f0"/><path d="M32.40 58.01 L32.40 66.81 L29.91 66.73 L27.47 66.49 L25.13 66.10 L22.91 65.56 L20.86 64.89 L19.02 64.09 L17.43 63.18Z" fill="#00a040"/><path d="M32.40 58.01 L17.43 63.18 L16.07 62.15 L15.03 61.04 L14.32 59.87 L13.95 58.67 L13.93 57.45 L14.27 56.25 L14.95 55.08 L15.97 53.96 L17.29 52.92 L18.91 51.98 L20.78 51.16 L22.88 50.46 L25.16 49.91 L27.57 49.51 L30.08 49.28Z" fill="#ff0000"/><path d="M32.40 58.01 L30.08 49.28 L31.23 49.22 L32.40 49.21Z" fill="#ffc000"/><path d="M117.43 31.40 L117.26 32.68 L116.75 33.93 L115.91 35.15 L114.75 36.30 L113.30 37.36 L111.57 38.33 L109.61 39.17 L107.43 39.88 L105.09 40.45 L102.61 40.86 L100.04 41.11 L97.43 41.20 L97.43 47.20 L100.04 47.11 L102.61 46.86 L105.09 46.45 L107.43 45.88 L109.61 45.17 L111.57 44.33 L113.30 43.36 L114.75 42.30 L115.91 41.15 L116.75 39.93 L117.26 38.68 L117.43 37.40Z" fill="#006d94"/><path d="M97.43 41.20 L96.70 41.19 L95.97 41.17 L95.24 41.14 L94.51 41.09 L93.79 41.03 L93.07 40.96 L92.36 40.88 L91.65 40.78 L90.95 40.67 L90.26 40.55 L89.59 40.41 L88.92 40.26 L88.92 46.26 L89.59 46.41 L90.26 46.55 L90.95 46.67 L91.65 46.78 L92.36 46.88 L93.07 46.96 L93.79 47.03 L94.51 47.09 L95.24 47.14 L95.97 47.17 L96.70 47.19 L97.43 47.20Z" fill="#006327"/><path d="M88.92 40.26 L87.25 39.83 L85.68 39.32 L84.21 38.75 L82.85 38.10 L81.63 37.40 L80.55 36.65 L79.61 35.85 L78.84 35.00 L78.23 34.13 L77.79 33.23 L77.52 32.32 L77.43 31.40 L77.43 37.40 L77.52 38.32 L77.79 39.23 L78.23 40.13 L78.84 41.00 L79.61 41.85 L80.55 42.65 L81.63 43.40 L82.85 44.10 L84.21 44.75 L85.68 45.32 L87.25 45.83 L88.92 46.26Z" fill="#9e0000"/><path d="M97.43 31.40 L97.43 21.60 L100.04 21.68 L102.61 21.93 L105.09 22.34 L107.43 22.91 L109.61 23.62 L111.57 24.47 L113.30 25.43 L114.75 26.50 L115.91 27.65 L116.75 28.86 L117.26 30.12 L117.43 31.40 L117.26 32.68 L116.75 33.93 L115.91 35.15 L114.75 36.30 L113.30 37.36 L111.57 38.33 L109.61 39.17 L107.43 39.88 L105.09 40.45 L102.61 40.86 L100.04 41.11 L97.43 41.20Z" fill="#00b0f0"/><path d="M97.43 31.40 L97.43 41.20 L94.51 41.09 L91.65 40.78 L88.92 40.26Z" fill="#00a040"/><path d="M97.43 31.40 L88.92 40.26 L86.60 39.64 L84.48 38.86 L82.58 37.96 L80.95 36.94 L79.60 35.83 L78.56 34.64 L77.85 33.39 L77.48 32.11 L77.47 30.81 L77.80 29.53 L78.47 28.28 L79.48 27.08 L80.80 25.95 L82.41 24.93 L84.28 24.01 L86.38 23.23 L88.68 22.58 L91.13 22.10 L93.68 21.77Z" fill="#ff0000"/><path d="M97.43 31.40 L93.68 21.77 L95.55 21.64 L97.43 21.60Z" fill="#ffc000"/><rect x="72.37" y="50.49" width="1.19" height="1.19" fill="#0070c0" /><text x="74.04" y="52.02" font-size="2.6" font-weight="normal" font-family="Liberation Sans" fill="#ddd" textLength="19.81" lengthAdjust="spacingAndGlyphs" opacity="0.75">Банкны санхүүгийн </text><rect x="72.37" y="53.47" width="1.19" height="1.19" fill="#ff0000" /><text x="74.04" y="55.01" font-size="2.6" font-weight="normal" font-family="Liberation Sans" fill="#ddd" textLength="20.41" lengthAdjust="spacingAndGlyphs" opacity="0.75">Банкны санхүүгийн </text><rect x="98.63" y="50.49" width="1.19" height="1.19" fill="#00b050" /><text x="100.30" y="52.02" font-size="2.6" font-weight="normal" font-family="Liberation Sans" fill="#ddd" textLength="21.60" lengthAdjust="spacingAndGlyphs" opacity="0.75">йлангийн бүтэц бүрэ</text><rect x="98.63" y="53.47" width="1.19" height="1.19" fill="#c0a000" /><text x="100.30" y="55.01" font-size="2.6" font-weight="normal" font-family="Liberation Sans" fill="#ddd" textLength="17.42" lengthAdjust="spacingAndGlyphs" opacity="0.75">йлангийн бүтэц </text><rect x="64.97" y="55.86" width="67.06" height="23.15" fill="#eaeaf2" /><rect x="101.61" y="59.44" width="0.36" height="19.57" fill="#fff" /><text x="77.15" y="59.14" font-size="2.4699999999999998" font-weight="normal" font-family="Liberation Sans" fill="#4e3030" textLength="41.77" lengthAdjust="spacingAndGlyphs" opacity="0.6">Банкны санхүүгийн тайлангийн бүтэц бүрэл</text><text x="66.17" y="62.07" font-size="2.3400000000000003" font-weight="normal" font-family="Liberation Sans" fill="#4e3030" textLength="24.11" lengthAdjust="spacingAndGlyphs" opacity="0.55">бүрэлдэхүүн агуулга тодр</text><text x="123.68" y="62.07" font-size="2.3400000000000003" font-weight="normal" font-family="Liberation Sans" fill="#4e3030" textLength="7.16" lengthAdjust="spacingAndGlyphs" opacity="0.55">элдэхүү</text><text x="66.17" y="64.22" font-size="2.3400000000000003" font-weight="normal" font-family="Liberation Sans" fill="#4e3030" textLength="25.89" lengthAdjust="spacingAndGlyphs" opacity="0.55">гийн тайлангийн бүтэц бүрэ</text><text x="123.68" y="64.22" font-size="2.3400000000000003" font-weight="normal" font-family="Liberation Sans" fill="#4e3030" textLength="7.16" lengthAdjust="spacingAndGlyphs" opacity="0.55">н тайла</text><text x="66.17" y="68.04" font-size="2.3400000000000003" font-weight="normal" font-family="Liberation Sans" fill="#4e3030" textLength="28.88" lengthAdjust="spacingAndGlyphs" opacity="0.55">ы санхүүгийн тайлангийн бүтэц</text><text x="123.68" y="68.04" font-size="2.3400000000000003" font-weight="normal" font-family="Liberation Sans" fill="#4e3030" textLength="7.16" lengthAdjust="spacingAndGlyphs" opacity="0.55">анхүүги</text><text x="66.17" y="71.02" font-size="2.3400000000000003" font-weight="normal" font-family="Liberation Sans" fill="#4e3030" textLength="20.53" lengthAdjust="spacingAndGlyphs" opacity="0.55">үтэц бүрэлдэхүүн агу</text><text x="123.68" y="71.02" font-size="2.3400000000000003" font-weight="normal" font-family="Liberation Sans" fill="#4e3030" textLength="7.16" lengthAdjust="spacingAndGlyphs" opacity="0.55">ц бүрэл</text><text x="66.17" y="74.00" font-size="2.3400000000000003" font-weight="normal" font-family="Liberation Sans" fill="#4e3030" textLength="21.12" lengthAdjust="spacingAndGlyphs" opacity="0.55">йн тайлангийн бүтэц б</text><text x="123.68" y="74.00" font-size="2.3400000000000003" font-weight="normal" font-family="Liberation Sans" fill="#4e3030" textLength="7.16" lengthAdjust="spacingAndGlyphs" opacity="0.55">тайланг</text></svg></div></div><span class="num" style="left:1036px;top:265px;color:#444">14</span><div class="th" style="left:27px;top:312px;background:#fad6bb"><div style="position:absolute;left:0;top:0;width:131px;height:74px;overflow:hidden"><svg width="131" height="74" viewBox="0 0 131 74" font-family="Liberation Sans"><rect x="0.00" y="0.00" width="131.00" height="74.00" fill="#fad6bb" /><defs><radialGradient id="g15a" cx=".5" cy=".5" r=".7"><stop offset="0" stop-color="#4b4b4b"/><stop offset="1" stop-color="#222"/></radialGradient></defs><rect x="0.18" y="-0.23" width="63.84" height="34.01" fill="url(#g15a)"/><text x="7.93" y="3.24" font-size="2.9899999999999998" font-weight="bold" font-family="Liberation Sans" fill="#fff" textLength="48.93" lengthAdjust="spacingAndGlyphs" opacity="0.95">Банкны санхүүгийн тайлангийн бүтэц бүр</text><text x="12.71" y="6.22" font-size="2.9899999999999998" font-weight="bold" font-family="Liberation Sans" fill="#fff" textLength="39.38" lengthAdjust="spacingAndGlyphs" opacity="0.95">ы санхүүгийн тайлангийн бүтэц б</text><rect x="11.51" y="9.08" width="46.54" height="0.36" fill="#777" opacity=".6"/><rect x="11.51" y="12.06" width="46.54" height="0.36" fill="#777" opacity=".6"/><rect x="11.51" y="15.29" width="46.54" height="0.36" fill="#777" opacity=".6"/><rect x="11.51" y="17.67" width="46.54" height="0.36" fill="#777" opacity=".6"/><rect x="11.51" y="20.06" width="46.54" height="0.36" fill="#777" opacity=".6"/><rect x="11.51" y="23.28" width="46.54" height="0.36" fill="#777" opacity=".6"/><rect x="11.51" y="25.19" width="46.54" height="0.72" fill="#aaa" /><rect x="13.90" y="17.08" width="4.77" height="8.11" fill="#92d050" /><rect x="26.43" y="16.24" width="4.18" height="8.95" fill="#92d050" /><rect x="37.77" y="12.90" width="4.77" height="12.29" fill="#92d050" /><rect x="49.70" y="11.71" width="4.77" height="13.48" fill="#92d050" /><path d="M18.08 21.85 L31.80 20.06 L43.73 15.53 L56.26 12.30" stroke="#c0392b" stroke-width="1.0" fill="none" opacity="1" stroke-linejoin="round"/><rect x="18.08" y="20.66" width="4.77" height="2.39" fill="#000" opacity=".85"/><rect x="18.67" y="21.37" width="3.58" height="0.95" fill="#fff" opacity=".35"/><rect x="31.80" y="18.87" width="4.77" height="2.39" fill="#000" opacity=".85"/><rect x="32.40" y="19.58" width="3.58" height="0.95" fill="#fff" opacity=".35"/><rect x="43.73" y="14.33" width="4.77" height="2.39" fill="#000" opacity=".85"/><rect x="44.33" y="15.05" width="3.58" height="0.95" fill="#fff" opacity=".35"/><rect x="56.26" y="11.11" width="4.77" height="2.39" fill="#000" opacity=".85"/><rect x="56.86" y="11.83" width="3.58" height="0.95" fill="#fff" opacity=".35"/><rect x="13.30" y="15.41" width="6.56" height="0.95" fill="#eee" opacity=".55"/><text x="13.30" y="28.75" font-size="2.6" font-weight="normal" font-family="Liberation Sans" fill="#f0f0f0" textLength="5.97" lengthAdjust="spacingAndGlyphs" opacity="0.85">Банкн</text><rect x="25.83" y="14.57" width="5.97" height="0.95" fill="#eee" opacity=".55"/><text x="25.83" y="28.75" font-size="2.6" font-weight="normal" font-family="Liberation Sans" fill="#f0f0f0" textLength="5.37" lengthAdjust="spacingAndGlyphs" opacity="0.85">Банк</text><rect x="37.17" y="11.23" width="6.56" height="0.95" fill="#eee" opacity=".55"/><text x="37.17" y="28.75" font-size="2.6" font-weight="normal" font-family="Liberation Sans" fill="#f0f0f0" textLength="5.97" lengthAdjust="spacingAndGlyphs" opacity="0.85">Банкн</text><rect x="49.10" y="10.04" width="6.56" height="0.95" fill="#eee" opacity=".55"/><text x="49.10" y="28.75" font-size="2.6" font-weight="normal" font-family="Liberation Sans" fill="#f0f0f0" textLength="5.97" lengthAdjust="spacingAndGlyphs" opacity="0.85">Банкн</text><rect x="3.16" y="8.48" width="7.16" height="1.19" fill="#bbb" opacity=".35"/><rect x="58.65" y="8.48" width="4.18" height="1.19" fill="#bbb" opacity=".35"/><rect x="3.16" y="11.47" width="7.16" height="1.19" fill="#bbb" opacity=".35"/><rect x="58.65" y="11.47" width="4.18" height="1.19" fill="#bbb" opacity=".35"/><rect x="3.16" y="14.69" width="7.16" height="1.19" fill="#bbb" opacity=".35"/><rect x="58.65" y="14.69" width="4.18" height="1.19" fill="#bbb" opacity=".35"/><rect x="3.16" y="17.08" width="7.16" height="1.19" fill="#bbb" opacity=".35"/><rect x="58.65" y="17.08" width="4.18" height="1.19" fill="#bbb" opacity=".35"/><rect x="3.16" y="19.46" width="7.16" height="1.19" fill="#bbb" opacity=".35"/><rect x="58.65" y="19.46" width="4.18" height="1.19" fill="#bbb" opacity=".35"/><rect x="3.16" y="22.68" width="7.16" height="1.19" fill="#bbb" opacity=".35"/><rect x="58.65" y="22.68" width="4.18" height="1.19" fill="#bbb" opacity=".35"/><rect x="21.66" y="31.40" width="3.58" height="1.19" fill="#92d050" /><text x="25.83" y="32.84" font-size="2.3400000000000003" font-weight="normal" font-family="Liberation Sans" fill="#ddd" textLength="7.76" lengthAdjust="spacingAndGlyphs" opacity="0.5">Банкны </text><rect x="35.38" y="31.75" width="3.58" height="0.48" fill="#c0392b" /><text x="39.56" y="32.84" font-size="2.3400000000000003" font-weight="normal" font-family="Liberation Sans" fill="#ddd" textLength="4.77" lengthAdjust="spacingAndGlyphs" opacity="0.5">Банк</text><defs><radialGradient id="g15b" cx=".5" cy=".5" r=".7"><stop offset="0" stop-color="#4b4b4b"/><stop offset="1" stop-color="#222"/></radialGradient></defs><rect x="65.21" y="-0.23" width="65.63" height="34.01" fill="url(#g15b)"/><text x="77.15" y="4.43" font-size="2.9899999999999998" font-weight="bold" font-family="Liberation Sans" fill="#fff" textLength="42.96" lengthAdjust="spacingAndGlyphs" opacity="0.95">Банкны санхүүгийн тайлангийн бүтэц</text><text x="74.76" y="7.05" font-size="2.9899999999999998" font-weight="bold" font-family="Liberation Sans" fill="#fff" textLength="44.15" lengthAdjust="spacingAndGlyphs" opacity="0.95">ы санхүүгийн тайлангийн бүтэц бүрэл</text><rect x="76.55" y="9.08" width="48.33" height="0.36" fill="#777" opacity=".6"/><rect x="76.55" y="12.90" width="48.33" height="0.36" fill="#777" opacity=".6"/><rect x="76.55" y="17.08" width="48.33" height="0.36" fill="#777" opacity=".6"/><rect x="76.55" y="21.01" width="48.33" height="0.36" fill="#777" opacity=".6"/><rect x="76.55" y="25.19" width="48.33" height="0.72" fill="#aaa" /><rect x="78.94" y="17.08" width="4.77" height="8.11" fill="#4472c4" /><rect x="91.47" y="15.88" width="4.77" height="9.31" fill="#4472c4" /><rect x="103.40" y="12.90" width="4.77" height="12.29" fill="#4472c4" /><rect x="115.33" y="11.71" width="5.37" height="13.48" fill="#4472c4" /><path d="M83.71 21.49 L96.24 18.87 L109.37 14.33 L120.70 12.66" stroke="#c0392b" stroke-width="1.0" fill="none" opacity="1" stroke-linejoin="round"/><rect x="83.71" y="20.30" width="4.77" height="2.39" fill="#000" opacity=".85"/><rect x="84.31" y="21.01" width="3.58" height="0.95" fill="#fff" opacity=".35"/><rect x="96.24" y="17.67" width="4.77" height="2.39" fill="#000" opacity=".85"/><rect x="96.84" y="18.39" width="3.58" height="0.95" fill="#fff" opacity=".35"/><rect x="109.37" y="13.14" width="4.77" height="2.39" fill="#000" opacity=".85"/><rect x="109.96" y="13.85" width="3.58" height="0.95" fill="#fff" opacity=".35"/><rect x="120.70" y="11.47" width="4.77" height="2.39" fill="#000" opacity=".85"/><rect x="121.30" y="12.18" width="3.58" height="0.95" fill="#fff" opacity=".35"/><rect x="78.34" y="15.41" width="6.56" height="0.95" fill="#eee" opacity=".55"/><text x="78.34" y="28.75" font-size="2.6" font-weight="normal" font-family="Liberation Sans" fill="#f0f0f0" textLength="5.97" lengthAdjust="spacingAndGlyphs" opacity="0.85">Банкн</text><rect x="90.87" y="14.21" width="6.56" height="0.95" fill="#eee" opacity=".55"/><text x="90.87" y="28.75" font-size="2.6" font-weight="normal" font-family="Liberation Sans" fill="#f0f0f0" textLength="5.97" lengthAdjust="spacingAndGlyphs" opacity="0.85">Банкн</text><rect x="102.80" y="11.23" width="6.56" height="0.95" fill="#eee" opacity=".55"/><text x="102.80" y="28.75" font-size="2.6" font-weight="normal" font-family="Liberation Sans" fill="#f0f0f0" textLength="5.97" lengthAdjust="spacingAndGlyphs" opacity="0.85">Банкн</text><rect x="114.74" y="10.04" width="7.16" height="0.95" fill="#eee" opacity=".55"/><text x="114.74" y="28.75" font-size="2.6" font-weight="normal" font-family="Liberation Sans" fill="#f0f0f0" textLength="6.56" lengthAdjust="spacingAndGlyphs" opacity="0.85">Банкны</text><rect x="68.20" y="8.48" width="7.16" height="1.19" fill="#bbb" opacity=".35"/><rect x="125.47" y="8.48" width="4.18" height="1.19" fill="#bbb" opacity=".35"/><rect x="68.20" y="12.30" width="7.16" height="1.19" fill="#bbb" opacity=".35"/><rect x="125.47" y="12.30" width="4.18" height="1.19" fill="#bbb" opacity=".35"/><rect x="68.20" y="16.48" width="7.16" height="1.19" fill="#bbb" opacity=".35"/><rect x="125.47" y="16.48" width="4.18" height="1.19" fill="#bbb" opacity=".35"/><rect x="68.20" y="20.42" width="7.16" height="1.19" fill="#bbb" opacity=".35"/><rect x="125.47" y="20.42" width="4.18" height="1.19" fill="#bbb" opacity=".35"/><rect x="86.69" y="31.40" width="3.58" height="1.19" fill="#4472c4" /><text x="90.87" y="32.84" font-size="2.3400000000000003" font-weight="normal" font-family="Liberation Sans" fill="#ddd" textLength="7.76" lengthAdjust="spacingAndGlyphs" opacity="0.5">Банкны </text><rect x="100.42" y="31.75" width="3.58" height="0.48" fill="#c0392b" /><text x="104.59" y="32.84" font-size="2.3400000000000003" font-weight="normal" font-family="Liberation Sans" fill="#ddd" textLength="4.77" lengthAdjust="spacingAndGlyphs" opacity="0.5">Банк</text><rect x="64.02" y="-0.23" width="1.19" height="13.13" fill="#6fa8dc" /><defs><radialGradient id="g15c" cx=".5" cy=".5" r=".7"><stop offset="0" stop-color="#4b4b4b"/><stop offset="1" stop-color="#222"/></radialGradient></defs><rect x="0.18" y="36.17" width="63.84" height="36.99" fill="url(#g15c)"/><text x="8.53" y="39.04" font-size="2.9899999999999998" font-weight="bold" font-family="Liberation Sans" fill="#fff" textLength="48.33" lengthAdjust="spacingAndGlyphs" opacity="0.95">Банкны санхүүгийн тайлангийн бүтэц бүр</text><text x="9.72" y="42.02" font-size="2.9899999999999998" font-weight="bold" font-family="Liberation Sans" fill="#fff" textLength="47.14" lengthAdjust="spacingAndGlyphs" opacity="0.95">ы санхүүгийн тайлангийн бүтэц бүрэлдэ</text><rect x="11.51" y="44.88" width="46.54" height="0.36" fill="#777" opacity=".6"/><rect x="11.51" y="48.10" width="46.54" height="0.36" fill="#777" opacity=".6"/><rect x="11.51" y="51.68" width="46.54" height="0.36" fill="#777" opacity=".6"/><rect x="11.51" y="54.67" width="46.54" height="0.36" fill="#777" opacity=".6"/><rect x="11.51" y="57.65" width="46.54" height="0.36" fill="#777" opacity=".6"/><rect x="11.51" y="60.99" width="46.54" height="0.36" fill="#777" opacity=".6"/><rect x="11.51" y="64.21" width="46.54" height="0.72" fill="#aaa" /><rect x="11.51" y="56.46" width="5.37" height="7.76" fill="#ffff00" /><rect x="24.04" y="51.09" width="5.37" height="13.13" fill="#ffff00" /><rect x="36.57" y="46.31" width="5.37" height="17.90" fill="#ffff00" /><rect x="49.10" y="51.09" width="5.37" height="13.13" fill="#ffff00" /><path d="M15.69 61.23 L30.61 53.47 L43.14 45.72 L54.47 52.28" stroke="#c0392b" stroke-width="1.0" fill="none" opacity="1" stroke-linejoin="round"/><rect x="15.69" y="60.04" width="4.77" height="2.39" fill="#000" opacity=".85"/><rect x="16.29" y="60.75" width="3.58" height="0.95" fill="#fff" opacity=".35"/><rect x="30.61" y="52.28" width="4.77" height="2.39" fill="#000" opacity=".85"/><rect x="31.20" y="53.00" width="3.58" height="0.95" fill="#fff" opacity=".35"/><rect x="43.14" y="44.52" width="4.77" height="2.39" fill="#000" opacity=".85"/><rect x="43.73" y="45.24" width="3.58" height="0.95" fill="#fff" opacity=".35"/><rect x="54.47" y="51.09" width="4.77" height="2.39" fill="#000" opacity=".85"/><rect x="55.07" y="51.80" width="3.58" height="0.95" fill="#fff" opacity=".35"/><rect x="10.92" y="54.79" width="7.16" height="0.95" fill="#eee" opacity=".55"/><text x="10.92" y="67.77" font-size="2.6" font-weight="normal" font-family="Liberation Sans" fill="#f0f0f0" textLength="6.56" lengthAdjust="spacingAndGlyphs" opacity="0.85">Банкны</text><rect x="23.45" y="49.42" width="7.16" height="0.95" fill="#eee" opacity=".55"/><text x="23.45" y="67.77" font-size="2.6" font-weight="normal" font-family="Liberation Sans" fill="#f0f0f0" textLength="6.56" lengthAdjust="spacingAndGlyphs" opacity="0.85">Банкны</text><rect x="35.98" y="44.64" width="7.16" height="0.95" fill="#eee" opacity=".55"/><text x="35.98" y="67.77" font-size="2.6" font-weight="normal" font-family="Liberation Sans" fill="#f0f0f0" textLength="6.56" lengthAdjust="spacingAndGlyphs" opacity="0.85">Банкны</text><rect x="48.51" y="49.42" width="7.16" height="0.95" fill="#eee" opacity=".55"/><text x="48.51" y="67.77" font-size="2.6" font-weight="normal" font-family="Liberation Sans" fill="#f0f0f0" textLength="6.56" lengthAdjust="spacingAndGlyphs" opacity="0.85">Банкны</text><rect x="3.16" y="44.28" width="7.16" height="1.19" fill="#bbb" opacity=".35"/><rect x="58.65" y="44.28" width="4.18" height="1.19" fill="#bbb" opacity=".35"/><rect x="3.16" y="47.51" width="7.16" height="1.19" fill="#bbb" opacity=".35"/><rect x="58.65" y="47.51" width="4.18" height="1.19" fill="#bbb" opacity=".35"/><rect x="3.16" y="51.09" width="7.16" height="1.19" fill="#bbb" opacity=".35"/><rect x="58.65" y="51.09" width="4.18" height="1.19" fill="#bbb" opacity=".35"/><rect x="3.16" y="54.07" width="7.16" height="1.19" fill="#bbb" opacity=".35"/><rect x="58.65" y="54.07" width="4.18" height="1.19" fill="#bbb" opacity=".35"/><rect x="3.16" y="57.05" width="7.16" height="1.19" fill="#bbb" opacity=".35"/><rect x="58.65" y="57.05" width="4.18" height="1.19" fill="#bbb" opacity=".35"/><rect x="3.16" y="60.39" width="7.16" height="1.19" fill="#bbb" opacity=".35"/><rect x="58.65" y="60.39" width="4.18" height="1.19" fill="#bbb" opacity=".35"/><rect x="18.08" y="70.54" width="3.58" height="1.19" fill="#ffff00" /><text x="22.25" y="71.98" font-size="2.3400000000000003" font-weight="normal" font-family="Liberation Sans" fill="#ddd" textLength="7.76" lengthAdjust="spacingAndGlyphs" opacity="0.5">Банкны </text><rect x="31.80" y="70.89" width="3.58" height="0.48" fill="#c0392b" /><text x="35.98" y="71.98" font-size="2.3400000000000003" font-weight="normal" font-family="Liberation Sans" fill="#ddd" textLength="4.77" lengthAdjust="spacingAndGlyphs" opacity="0.5">Банк</text><text x="66.17" y="38.22" font-size="3.3800000000000003" font-weight="bold" font-family="Liberation Sans" fill="#000" textLength="42.00" lengthAdjust="spacingAndGlyphs" opacity="1">Банкны санхүүгийн тайлангийн </text><rect x="66.17" y="38.20" width="42.00" height="0.48" fill="#000" /><text x="66.41" y="41.38" font-size="2.8600000000000003" font-weight="normal" font-family="Liberation Sans" fill="#4e3030" textLength="64.44" lengthAdjust="spacingAndGlyphs" opacity="0.9">анкны санхүүгийн тайлангийн бүтэц бүрэлдэхүүн агуулга</text><text x="66.41" y="46.15" font-size="2.8600000000000003" font-weight="normal" font-family="Liberation Sans" fill="#4e3030" textLength="14.32" lengthAdjust="spacingAndGlyphs" opacity="0.9">нкны санхүү</text><text x="66.17" y="49.20" font-size="3.3800000000000003" font-weight="bold" font-family="Liberation Sans" fill="#000" textLength="44.39" lengthAdjust="spacingAndGlyphs" opacity="1">Банкны санхүүгийн тайлангийн бү</text><rect x="66.17" y="49.18" width="44.39" height="0.48" fill="#000" /><text x="66.41" y="52.12" font-size="2.8600000000000003" font-weight="normal" font-family="Liberation Sans" fill="#4e3030" textLength="64.44" lengthAdjust="spacingAndGlyphs" opacity="0.9">кны санхүүгийн тайлангийн бүтэц бүрэлдэхүүн агуулга т</text><text x="66.41" y="54.86" font-size="2.8600000000000003" font-weight="normal" font-family="Liberation Sans" fill="#4e3030" textLength="14.32" lengthAdjust="spacingAndGlyphs" opacity="0.9">ны санхүүги</text><text x="66.17" y="58.03" font-size="3.3800000000000003" font-weight="bold" font-family="Liberation Sans" fill="#000" textLength="48.57" lengthAdjust="spacingAndGlyphs" opacity="1">Банкны санхүүгийн тайлангийн бүтэц</text><rect x="66.17" y="58.01" width="48.57" height="0.48" fill="#000" /><text x="66.41" y="61.07" font-size="2.8600000000000003" font-weight="normal" font-family="Liberation Sans" fill="#4e3030" textLength="64.44" lengthAdjust="spacingAndGlyphs" opacity="0.9">ийн бүтэц бүрэлдэхүүн агуулга тодруулга үзүүлэлт харь</text><text x="66.41" y="64.05" font-size="2.8600000000000003" font-weight="normal" font-family="Liberation Sans" fill="#4e3030" textLength="64.44" lengthAdjust="spacingAndGlyphs" opacity="0.9">хүүгийн тайлангийн бүтэц бүрэлдэхүүн агуулга тодруулг</text><text x="66.41" y="67.03" font-size="2.8600000000000003" font-weight="normal" font-family="Liberation Sans" fill="#4e3030" textLength="64.44" lengthAdjust="spacingAndGlyphs" opacity="0.9">бүрэлдэхүүн агуулга тодруулга үзүүлэлт харьцуулалт аш</text><text x="66.41" y="70.02" font-size="2.8600000000000003" font-weight="normal" font-family="Liberation Sans" fill="#4e3030" textLength="64.44" lengthAdjust="spacingAndGlyphs" opacity="0.9">йлангийн бүтэц бүрэлдэхүүн агуулга тодруулга үзүүлэлт</text><text x="66.41" y="73.00" font-size="2.8600000000000003" font-weight="normal" font-family="Liberation Sans" fill="#4e3030" textLength="32.22" lengthAdjust="spacingAndGlyphs" opacity="0.9">ы санхүүгийн тайлангийн бү</text></svg></div></div><span class="num" style="left:28px;top:392px;color:#444">15</span><div class="th" style="left:195px;top:312px;background:#fad6bb"><div style="position:absolute;left:0;top:0;width:131px;height:74px;overflow:hidden"><svg width="131" height="74" viewBox="0 0 131 74" font-family="Liberation Sans"><rect x="0.00" y="0.00" width="131.00" height="74.00" fill="#fad6bb" /><defs><pattern id="dots" width="2.4" height="1" patternUnits="userSpaceOnUse"><rect width="0.9" height="1" fill="#e8e0ff"/><rect x="1.2" width="0.8" height="1" fill="#ffd9a0"/></pattern></defs><defs><radialGradient id="g16a" cx=".5" cy=".5" r=".7"><stop offset="0" stop-color="#4b4b4b"/><stop offset="1" stop-color="#222"/></radialGradient></defs><rect x="0.18" y="-0.23" width="64.44" height="35.80" fill="url(#g16a)"/><rect x="7.93" y="1.90" width="48.33" height="1" fill="url(#dots)" opacity=".9"/><rect x="12.71" y="4.88" width="38.19" height="1" fill="url(#dots)" opacity=".9"/><rect x="11.51" y="9.08" width="47.14" height="0.36" fill="#777" opacity=".6"/><rect x="11.51" y="12.06" width="47.14" height="0.36" fill="#777" opacity=".6"/><rect x="11.51" y="16.24" width="47.14" height="0.36" fill="#777" opacity=".6"/><rect x="11.51" y="19.82" width="47.14" height="0.36" fill="#777" opacity=".6"/><rect x="11.51" y="23.04" width="47.14" height="0.36" fill="#777" opacity=".6"/><rect x="11.51" y="26.62" width="47.14" height="0.72" fill="#aaa" /><rect x="13.90" y="15.53" width="4.77" height="11.10" fill="#92d050" /><rect x="26.43" y="14.33" width="4.18" height="12.29" fill="#92d050" /><rect x="37.77" y="11.11" width="4.77" height="15.51" fill="#92d050" /><rect x="49.70" y="9.92" width="4.77" height="16.71" fill="#92d050" /><path d="M18.08 22.45 L31.80 20.30 L43.73 14.69 L56.26 12.30" stroke="#c0392b" stroke-width="1.0" fill="none" opacity="1" stroke-linejoin="round"/><rect x="18.08" y="21.25" width="4.77" height="2.39" fill="#000" opacity=".85"/><rect x="18.67" y="21.97" width="3.58" height="0.95" fill="#fff" opacity=".35"/><rect x="31.80" y="19.11" width="4.77" height="2.39" fill="#000" opacity=".85"/><rect x="32.40" y="19.82" width="3.58" height="0.95" fill="#fff" opacity=".35"/><rect x="43.73" y="13.50" width="4.77" height="2.39" fill="#000" opacity=".85"/><rect x="44.33" y="14.21" width="3.58" height="0.95" fill="#fff" opacity=".35"/><rect x="56.26" y="11.11" width="4.77" height="2.39" fill="#000" opacity=".85"/><rect x="56.86" y="11.83" width="3.58" height="0.95" fill="#fff" opacity=".35"/><rect x="13.30" y="13.85" width="6.56" height="0.95" fill="#eee" opacity=".55"/><text x="13.30" y="30.18" font-size="2.6" font-weight="normal" font-family="Liberation Sans" fill="#f0f0f0" textLength="5.97" lengthAdjust="spacingAndGlyphs" opacity="0.85">Банкн</text><rect x="25.83" y="12.66" width="5.97" height="0.95" fill="#eee" opacity=".55"/><text x="25.83" y="30.18" font-size="2.6" font-weight="normal" font-family="Liberation Sans" fill="#f0f0f0" textLength="5.37" lengthAdjust="spacingAndGlyphs" opacity="0.85">Банк</text><rect x="37.17" y="9.44" width="6.56" height="0.95" fill="#eee" opacity=".55"/><text x="37.17" y="30.18" font-size="2.6" font-weight="normal" font-family="Liberation Sans" fill="#f0f0f0" textLength="5.97" lengthAdjust="spacingAndGlyphs" opacity="0.85">Банкн</text><rect x="49.10" y="8.25" width="6.56" height="0.95" fill="#eee" opacity=".55"/><text x="49.10" y="30.18" font-size="2.6" font-weight="normal" font-family="Liberation Sans" fill="#f0f0f0" textLength="5.97" lengthAdjust="spacingAndGlyphs" opacity="0.85">Банкн</text><rect x="3.16" y="8.48" width="7.16" height="1.19" fill="#bbb" opacity=".35"/><rect x="59.25" y="8.48" width="4.18" height="1.19" fill="#bbb" opacity=".35"/><rect x="3.16" y="11.47" width="7.16" height="1.19" fill="#bbb" opacity=".35"/><rect x="59.25" y="11.47" width="4.18" height="1.19" fill="#bbb" opacity=".35"/><rect x="3.16" y="15.64" width="7.16" height="1.19" fill="#bbb" opacity=".35"/><rect x="59.25" y="15.64" width="4.18" height="1.19" fill="#bbb" opacity=".35"/><rect x="3.16" y="19.22" width="7.16" height="1.19" fill="#bbb" opacity=".35"/><rect x="59.25" y="19.22" width="4.18" height="1.19" fill="#bbb" opacity=".35"/><rect x="3.16" y="22.45" width="7.16" height="1.19" fill="#bbb" opacity=".35"/><rect x="59.25" y="22.45" width="4.18" height="1.19" fill="#bbb" opacity=".35"/><rect x="21.66" y="32.83" width="3.58" height="1.19" fill="#92d050" /><text x="25.83" y="34.27" font-size="2.3400000000000003" font-weight="normal" font-family="Liberation Sans" fill="#ddd" textLength="7.76" lengthAdjust="spacingAndGlyphs" opacity="0.5">Банкны </text><rect x="35.38" y="33.19" width="3.58" height="0.48" fill="#c0392b" /><text x="39.56" y="34.27" font-size="2.3400000000000003" font-weight="normal" font-family="Liberation Sans" fill="#ddd" textLength="4.77" lengthAdjust="spacingAndGlyphs" opacity="0.5">Банк</text><defs><radialGradient id="g16b" cx=".5" cy=".5" r=".7"><stop offset="0" stop-color="#4b4b4b"/><stop offset="1" stop-color="#222"/></radialGradient></defs><rect x="64.62" y="-0.23" width="66.23" height="35.80" fill="url(#g16b)"/><rect x="72.97" y="1.90" width="50.72" height="1" fill="url(#dots)" opacity=".9"/><rect x="78.94" y="4.88" width="38.78" height="1" fill="url(#dots)" opacity=".9"/><rect x="75.95" y="9.08" width="48.93" height="0.36" fill="#777" opacity=".6"/><rect x="75.95" y="12.06" width="48.93" height="0.36" fill="#777" opacity=".6"/><rect x="75.95" y="15.05" width="48.93" height="0.36" fill="#777" opacity=".6"/><rect x="75.95" y="18.03" width="48.93" height="0.36" fill="#777" opacity=".6"/><rect x="75.95" y="21.01" width="48.93" height="0.36" fill="#777" opacity=".6"/><rect x="75.95" y="24.00" width="48.93" height="0.36" fill="#777" opacity=".6"/><rect x="75.95" y="26.26" width="48.93" height="0.72" fill="#aaa" /><rect x="78.94" y="15.88" width="4.77" height="10.38" fill="#4472c4" /><rect x="91.47" y="14.69" width="4.77" height="11.58" fill="#4472c4" /><rect x="103.40" y="11.71" width="4.77" height="14.56" fill="#4472c4" /><rect x="115.33" y="10.51" width="5.37" height="15.75" fill="#4472c4" /><path d="M83.71 23.64 L96.24 20.30 L109.37 14.09 L120.70 12.30" stroke="#c0392b" stroke-width="1.0" fill="none" opacity="1" stroke-linejoin="round"/><rect x="83.71" y="22.45" width="4.77" height="2.39" fill="#000" opacity=".85"/><rect x="84.31" y="23.16" width="3.58" height="0.95" fill="#fff" opacity=".35"/><rect x="96.24" y="19.11" width="4.77" height="2.39" fill="#000" opacity=".85"/><rect x="96.84" y="19.82" width="3.58" height="0.95" fill="#fff" opacity=".35"/><rect x="109.37" y="12.90" width="4.77" height="2.39" fill="#000" opacity=".85"/><rect x="109.96" y="13.62" width="3.58" height="0.95" fill="#fff" opacity=".35"/><rect x="120.70" y="11.11" width="4.77" height="2.39" fill="#000" opacity=".85"/><rect x="121.30" y="11.83" width="3.58" height="0.95" fill="#fff" opacity=".35"/><rect x="78.34" y="14.21" width="6.56" height="0.95" fill="#eee" opacity=".55"/><text x="78.34" y="29.83" font-size="2.6" font-weight="normal" font-family="Liberation Sans" fill="#f0f0f0" textLength="5.97" lengthAdjust="spacingAndGlyphs" opacity="0.85">Банкн</text><rect x="90.87" y="13.02" width="6.56" height="0.95" fill="#eee" opacity=".55"/><text x="90.87" y="29.83" font-size="2.6" font-weight="normal" font-family="Liberation Sans" fill="#f0f0f0" textLength="5.97" lengthAdjust="spacingAndGlyphs" opacity="0.85">Банкн</text><rect x="102.80" y="10.04" width="6.56" height="0.95" fill="#eee" opacity=".55"/><text x="102.80" y="29.83" font-size="2.6" font-weight="normal" font-family="Liberation Sans" fill="#f0f0f0" textLength="5.97" lengthAdjust="spacingAndGlyphs" opacity="0.85">Банкн</text><rect x="114.74" y="8.84" width="7.16" height="0.95" fill="#eee" opacity=".55"/><text x="114.74" y="29.83" font-size="2.6" font-weight="normal" font-family="Liberation Sans" fill="#f0f0f0" textLength="6.56" lengthAdjust="spacingAndGlyphs" opacity="0.85">Банкны</text><rect x="67.60" y="8.48" width="7.16" height="1.19" fill="#bbb" opacity=".35"/><rect x="125.47" y="8.48" width="4.18" height="1.19" fill="#bbb" opacity=".35"/><rect x="67.60" y="11.47" width="7.16" height="1.19" fill="#bbb" opacity=".35"/><rect x="125.47" y="11.47" width="4.18" height="1.19" fill="#bbb" opacity=".35"/><rect x="67.60" y="14.45" width="7.16" height="1.19" fill="#bbb" opacity=".35"/><rect x="125.47" y="14.45" width="4.18" height="1.19" fill="#bbb" opacity=".35"/><rect x="67.60" y="17.43" width="7.16" height="1.19" fill="#bbb" opacity=".35"/><rect x="125.47" y="17.43" width="4.18" height="1.19" fill="#bbb" opacity=".35"/><rect x="67.60" y="20.42" width="7.16" height="1.19" fill="#bbb" opacity=".35"/><rect x="125.47" y="20.42" width="4.18" height="1.19" fill="#bbb" opacity=".35"/><rect x="67.60" y="23.40" width="7.16" height="1.19" fill="#bbb" opacity=".35"/><rect x="125.47" y="23.40" width="4.18" height="1.19" fill="#bbb" opacity=".35"/><rect x="86.69" y="32.83" width="3.58" height="1.19" fill="#4472c4" /><text x="90.87" y="34.27" font-size="2.3400000000000003" font-weight="normal" font-family="Liberation Sans" fill="#ddd" textLength="7.76" lengthAdjust="spacingAndGlyphs" opacity="0.5">Банкны </text><rect x="100.42" y="33.19" width="3.58" height="0.48" fill="#c0392b" /><text x="104.59" y="34.27" font-size="2.3400000000000003" font-weight="normal" font-family="Liberation Sans" fill="#ddd" textLength="4.77" lengthAdjust="spacingAndGlyphs" opacity="0.5">Банк</text><defs><radialGradient id="g16c" cx=".5" cy=".5" r=".7"><stop offset="0" stop-color="#4b4b4b"/><stop offset="1" stop-color="#222"/></radialGradient></defs><rect x="0.18" y="36.17" width="64.80" height="37.59" fill="url(#g16c)"/><rect x="12.71" y="38.89" width="49.52" height="1" fill="url(#dots)" opacity=".9"/><rect x="17.48" y="41.87" width="39.38" height="1" fill="url(#dots)" opacity=".9"/><rect x="11.51" y="44.88" width="47.49" height="0.36" fill="#777" opacity=".6"/><rect x="11.51" y="48.10" width="47.49" height="0.36" fill="#777" opacity=".6"/><rect x="11.51" y="52.04" width="47.49" height="0.36" fill="#777" opacity=".6"/><rect x="11.51" y="55.86" width="47.49" height="0.36" fill="#777" opacity=".6"/><rect x="11.51" y="59.20" width="47.49" height="0.36" fill="#777" opacity=".6"/><rect x="11.51" y="62.78" width="47.49" height="0.36" fill="#777" opacity=".6"/><rect x="11.51" y="65.64" width="47.49" height="0.72" fill="#aaa" /><rect x="12.11" y="56.81" width="5.13" height="8.83" fill="#ffff00" /><rect x="24.04" y="52.88" width="5.37" height="12.77" fill="#ffff00" /><rect x="36.57" y="47.51" width="5.37" height="18.14" fill="#ffff00" /><rect x="49.70" y="51.68" width="5.37" height="13.96" fill="#ffff00" /><path d="M16.29 63.62 L30.61 53.47 L43.14 46.91 L55.07 51.32" stroke="#c0392b" stroke-width="1.0" fill="none" opacity="1" stroke-linejoin="round"/><rect x="16.29" y="62.42" width="4.77" height="2.39" fill="#000" opacity=".85"/><rect x="16.88" y="63.14" width="3.58" height="0.95" fill="#fff" opacity=".35"/><rect x="30.61" y="52.28" width="4.77" height="2.39" fill="#000" opacity=".85"/><rect x="31.20" y="53.00" width="3.58" height="0.95" fill="#fff" opacity=".35"/><rect x="43.14" y="45.72" width="4.77" height="2.39" fill="#000" opacity=".85"/><rect x="43.73" y="46.43" width="3.58" height="0.95" fill="#fff" opacity=".35"/><rect x="55.07" y="50.13" width="4.77" height="2.39" fill="#000" opacity=".85"/><rect x="55.67" y="50.85" width="3.58" height="0.95" fill="#fff" opacity=".35"/><rect x="11.51" y="55.14" width="6.92" height="0.95" fill="#eee" opacity=".55"/><text x="11.51" y="69.21" font-size="2.6" font-weight="normal" font-family="Liberation Sans" fill="#f0f0f0" textLength="6.32" lengthAdjust="spacingAndGlyphs" opacity="0.85">Банкн</text><rect x="23.45" y="51.21" width="7.16" height="0.95" fill="#eee" opacity=".55"/><text x="23.45" y="69.21" font-size="2.6" font-weight="normal" font-family="Liberation Sans" fill="#f0f0f0" textLength="6.56" lengthAdjust="spacingAndGlyphs" opacity="0.85">Банкны</text><rect x="35.98" y="45.84" width="7.16" height="0.95" fill="#eee" opacity=".55"/><text x="35.98" y="69.21" font-size="2.6" font-weight="normal" font-family="Liberation Sans" fill="#f0f0f0" textLength="6.56" lengthAdjust="spacingAndGlyphs" opacity="0.85">Банкны</text><rect x="49.10" y="50.01" width="7.16" height="0.95" fill="#eee" opacity=".55"/><text x="49.10" y="69.21" font-size="2.6" font-weight="normal" font-family="Liberation Sans" fill="#f0f0f0" textLength="6.56" lengthAdjust="spacingAndGlyphs" opacity="0.85">Банкны</text><rect x="3.16" y="44.28" width="7.16" height="1.19" fill="#bbb" opacity=".35"/><rect x="59.60" y="44.28" width="4.18" height="1.19" fill="#bbb" opacity=".35"/><rect x="3.16" y="47.51" width="7.16" height="1.19" fill="#bbb" opacity=".35"/><rect x="59.60" y="47.51" width="4.18" height="1.19" fill="#bbb" opacity=".35"/><rect x="3.16" y="51.44" width="7.16" height="1.19" fill="#bbb" opacity=".35"/><rect x="59.60" y="51.44" width="4.18" height="1.19" fill="#bbb" opacity=".35"/><rect x="3.16" y="55.26" width="7.16" height="1.19" fill="#bbb" opacity=".35"/><rect x="59.60" y="55.26" width="4.18" height="1.19" fill="#bbb" opacity=".35"/><rect x="3.16" y="58.60" width="7.16" height="1.19" fill="#bbb" opacity=".35"/><rect x="59.60" y="58.60" width="4.18" height="1.19" fill="#bbb" opacity=".35"/><rect x="3.16" y="62.18" width="7.16" height="1.19" fill="#bbb" opacity=".35"/><rect x="59.60" y="62.18" width="4.18" height="1.19" fill="#bbb" opacity=".35"/><rect x="18.08" y="70.18" width="3.58" height="1.19" fill="#ffff00" /><text x="22.25" y="71.62" font-size="2.3400000000000003" font-weight="normal" font-family="Liberation Sans" fill="#ddd" textLength="7.76" lengthAdjust="spacingAndGlyphs" opacity="0.5">Банкны </text><rect x="31.80" y="70.54" width="3.58" height="0.48" fill="#c0392b" /><text x="35.98" y="71.62" font-size="2.3400000000000003" font-weight="normal" font-family="Liberation Sans" fill="#ddd" textLength="4.77" lengthAdjust="spacingAndGlyphs" opacity="0.5">Банк</text><text x="66.17" y="40.25" font-size="3.3800000000000003" font-weight="bold" font-family="Liberation Sans" fill="#000" textLength="42.00" lengthAdjust="spacingAndGlyphs" opacity="1">Банкны санхүүгийн тайлангийн </text><rect x="66.17" y="40.23" width="42.00" height="0.48" fill="#000" /><text x="66.41" y="43.17" font-size="2.8600000000000003" font-weight="normal" font-family="Liberation Sans" fill="#4e3030" textLength="60.26" lengthAdjust="spacingAndGlyphs" opacity="0.9">анкны санхүүгийн тайлангийн бүтэц бүрэлдэхүүн агуу</text><text x="66.41" y="47.10" font-size="2.8600000000000003" font-weight="normal" font-family="Liberation Sans" fill="#4e3030" textLength="18.50" lengthAdjust="spacingAndGlyphs" opacity="0.9">нкны санхүүгийн</text><text x="66.17" y="50.15" font-size="3.3800000000000003" font-weight="bold" font-family="Liberation Sans" fill="#000" textLength="44.39" lengthAdjust="spacingAndGlyphs" opacity="1">Банкны санхүүгийн тайлангийн бү</text><rect x="66.17" y="50.13" width="44.39" height="0.48" fill="#000" /><text x="66.41" y="53.31" font-size="2.8600000000000003" font-weight="normal" font-family="Liberation Sans" fill="#4e3030" textLength="64.44" lengthAdjust="spacingAndGlyphs" opacity="0.9">кны санхүүгийн тайлангийн бүтэц бүрэлдэхүүн агуулга т</text><text x="66.41" y="56.29" font-size="2.8600000000000003" font-weight="normal" font-family="Liberation Sans" fill="#4e3030" textLength="18.50" lengthAdjust="spacingAndGlyphs" opacity="0.9">ны санхүүгийн т</text><text x="66.17" y="59.10" font-size="3.3800000000000003" font-weight="bold" font-family="Liberation Sans" fill="#000" textLength="48.57" lengthAdjust="spacingAndGlyphs" opacity="1">Банкны санхүүгийн тайлангийн бүтэц</text><rect x="66.17" y="59.08" width="48.57" height="0.48" fill="#000" /><text x="66.41" y="62.02" font-size="2.8600000000000003" font-weight="normal" font-family="Liberation Sans" fill="#4e3030" textLength="64.44" lengthAdjust="spacingAndGlyphs" opacity="0.9">ы санхүүгийн тайлангийн бүтэц бүрэлдэхүүн агуулга тод</text><text x="66.41" y="65.00" font-size="2.8600000000000003" font-weight="normal" font-family="Liberation Sans" fill="#4e3030" textLength="7.76" lengthAdjust="spacingAndGlyphs" opacity="0.9"> санхү</text></svg></div></div><span class="num" style="left:196px;top:392px;color:#444">16</span><div class="th" style="left:363px;top:312px;background:#fad6bb"><div style="position:absolute;left:0;top:0;width:131px;height:74px;overflow:hidden"><svg width="131" height="74" viewBox="0 0 131 74" font-family="Liberation Sans"><rect x="0.00" y="0.00" width="131.00" height="74.00" fill="#fad6bb" /><defs><pattern id="dots" width="2.4" height="1" patternUnits="userSpaceOnUse"><rect width="0.9" height="1" fill="#e8e0ff"/><rect x="1.2" width="0.8" height="1" fill="#ffd9a0"/></pattern></defs><defs><radialGradient id="g17a" cx=".5" cy=".5" r=".7"><stop offset="0" stop-color="#4b4b4b"/><stop offset="1" stop-color="#222"/></radialGradient></defs><rect x="0.18" y="-0.23" width="63.84" height="35.20" fill="url(#g17a)"/><rect x="9.13" y="1.90" width="45.94" height="1" fill="url(#dots)" opacity=".9"/><rect x="9.13" y="5.00" width="45.94" height="1" fill="url(#dots)" opacity=".9"/><rect x="11.51" y="8.13" width="46.54" height="0.36" fill="#777" opacity=".6"/><rect x="11.51" y="14.09" width="46.54" height="0.36" fill="#777" opacity=".6"/><rect x="11.51" y="19.82" width="46.54" height="0.36" fill="#777" opacity=".6"/><rect x="11.51" y="25.43" width="46.54" height="0.72" fill="#aaa" /><rect x="13.30" y="16.48" width="5.37" height="8.95" fill="#92d050" /><rect x="25.83" y="14.69" width="5.37" height="10.74" fill="#92d050" /><rect x="37.77" y="12.90" width="5.37" height="12.53" fill="#92d050" /><rect x="49.70" y="11.11" width="5.37" height="14.32" fill="#92d050" /><path d="M17.48 23.04 L31.20 19.46 L43.14 16.48 L55.67 12.30" stroke="#c0392b" stroke-width="1.0" fill="none" opacity="1" stroke-linejoin="round"/><rect x="17.48" y="21.85" width="4.77" height="2.39" fill="#000" opacity=".85"/><rect x="18.08" y="22.57" width="3.58" height="0.95" fill="#fff" opacity=".35"/><rect x="31.20" y="18.27" width="4.77" height="2.39" fill="#000" opacity=".85"/><rect x="31.80" y="18.99" width="3.58" height="0.95" fill="#fff" opacity=".35"/><rect x="43.14" y="15.29" width="4.77" height="2.39" fill="#000" opacity=".85"/><rect x="43.73" y="16.00" width="3.58" height="0.95" fill="#fff" opacity=".35"/><rect x="55.67" y="11.11" width="4.77" height="2.39" fill="#000" opacity=".85"/><rect x="56.26" y="11.83" width="3.58" height="0.95" fill="#fff" opacity=".35"/><rect x="12.71" y="14.81" width="7.16" height="0.95" fill="#eee" opacity=".55"/><text x="12.71" y="28.99" font-size="2.6" font-weight="normal" font-family="Liberation Sans" fill="#f0f0f0" textLength="6.56" lengthAdjust="spacingAndGlyphs" opacity="0.85">Банкны</text><rect x="25.24" y="13.02" width="7.16" height="0.95" fill="#eee" opacity=".55"/><text x="25.24" y="28.99" font-size="2.6" font-weight="normal" font-family="Liberation Sans" fill="#f0f0f0" textLength="6.56" lengthAdjust="spacingAndGlyphs" opacity="0.85">Банкны</text><rect x="37.17" y="11.23" width="7.16" height="0.95" fill="#eee" opacity=".55"/><text x="37.17" y="28.99" font-size="2.6" font-weight="normal" font-family="Liberation Sans" fill="#f0f0f0" textLength="6.56" lengthAdjust="spacingAndGlyphs" opacity="0.85">Банкны</text><rect x="49.10" y="9.44" width="7.16" height="0.95" fill="#eee" opacity=".55"/><text x="49.10" y="28.99" font-size="2.6" font-weight="normal" font-family="Liberation Sans" fill="#f0f0f0" textLength="6.56" lengthAdjust="spacingAndGlyphs" opacity="0.85">Банкны</text><rect x="3.16" y="7.53" width="7.16" height="1.19" fill="#bbb" opacity=".35"/><rect x="58.65" y="7.53" width="4.18" height="1.19" fill="#bbb" opacity=".35"/><rect x="3.16" y="13.50" width="7.16" height="1.19" fill="#bbb" opacity=".35"/><rect x="58.65" y="13.50" width="4.18" height="1.19" fill="#bbb" opacity=".35"/><rect x="3.16" y="19.22" width="7.16" height="1.19" fill="#bbb" opacity=".35"/><rect x="58.65" y="19.22" width="4.18" height="1.19" fill="#bbb" opacity=".35"/><rect x="21.66" y="31.63" width="3.58" height="1.19" fill="#92d050" /><text x="25.83" y="33.07" font-size="2.3400000000000003" font-weight="normal" font-family="Liberation Sans" fill="#ddd" textLength="7.76" lengthAdjust="spacingAndGlyphs" opacity="0.5">Банкны </text><rect x="35.38" y="31.99" width="3.58" height="0.48" fill="#c0392b" /><text x="39.56" y="33.07" font-size="2.3400000000000003" font-weight="normal" font-family="Liberation Sans" fill="#ddd" textLength="4.77" lengthAdjust="spacingAndGlyphs" opacity="0.5">Банк</text><rect x="64.02" y="-0.23" width="1.79" height="35.20" fill="#c9a99a" /><rect x="64.26" y="-0.23" width="1.31" height="13.13" fill="#5b88a8" /><defs><radialGradient id="g17b" cx=".5" cy=".5" r=".7"><stop offset="0" stop-color="#4b4b4b"/><stop offset="1" stop-color="#222"/></radialGradient></defs><rect x="65.81" y="-0.23" width="65.04" height="35.20" fill="url(#g17b)"/><rect x="75.95" y="1.06" width="48.93" height="1" fill="url(#dots)" opacity=".9"/><rect x="77.15" y="4.05" width="45.94" height="1" fill="url(#dots)" opacity=".9"/><rect x="77.15" y="8.13" width="47.73" height="0.36" fill="#777" opacity=".6"/><rect x="77.15" y="11.11" width="47.73" height="0.36" fill="#777" opacity=".6"/><rect x="77.15" y="14.09" width="47.73" height="0.36" fill="#777" opacity=".6"/><rect x="77.15" y="17.08" width="47.73" height="0.36" fill="#777" opacity=".6"/><rect x="77.15" y="20.06" width="47.73" height="0.36" fill="#777" opacity=".6"/><rect x="77.15" y="23.04" width="47.73" height="0.36" fill="#777" opacity=".6"/><rect x="77.15" y="25.43" width="47.73" height="0.72" fill="#aaa" /><rect x="78.34" y="12.90" width="5.37" height="12.53" fill="#4472c4" /><rect x="90.27" y="14.09" width="5.37" height="11.34" fill="#4472c4" /><rect x="102.56" y="12.90" width="5.61" height="12.53" fill="#4472c4" /><rect x="115.69" y="9.32" width="5.61" height="16.11" fill="#4472c4" /><path d="M83.11 23.64 L96.24 22.21 L108.77 20.06 L121.89 11.11" stroke="#c0392b" stroke-width="1.0" fill="none" opacity="1" stroke-linejoin="round"/><rect x="83.11" y="22.45" width="4.77" height="2.39" fill="#000" opacity=".85"/><rect x="83.71" y="23.16" width="3.58" height="0.95" fill="#fff" opacity=".35"/><rect x="96.24" y="21.01" width="4.77" height="2.39" fill="#000" opacity=".85"/><rect x="96.84" y="21.73" width="3.58" height="0.95" fill="#fff" opacity=".35"/><rect x="108.77" y="18.87" width="4.77" height="2.39" fill="#000" opacity=".85"/><rect x="109.37" y="19.58" width="3.58" height="0.95" fill="#fff" opacity=".35"/><rect x="121.89" y="9.92" width="4.77" height="2.39" fill="#000" opacity=".85"/><rect x="122.49" y="10.63" width="3.58" height="0.95" fill="#fff" opacity=".35"/><rect x="77.74" y="11.23" width="7.16" height="0.95" fill="#eee" opacity=".55"/><text x="77.74" y="28.99" font-size="2.6" font-weight="normal" font-family="Liberation Sans" fill="#f0f0f0" textLength="6.56" lengthAdjust="spacingAndGlyphs" opacity="0.85">Банкны</text><rect x="89.68" y="12.42" width="7.16" height="0.95" fill="#eee" opacity=".55"/><text x="89.68" y="28.99" font-size="2.6" font-weight="normal" font-family="Liberation Sans" fill="#f0f0f0" textLength="6.56" lengthAdjust="spacingAndGlyphs" opacity="0.85">Банкны</text><rect x="101.97" y="11.23" width="7.40" height="0.95" fill="#eee" opacity=".55"/><text x="101.97" y="28.99" font-size="2.6" font-weight="normal" font-family="Liberation Sans" fill="#f0f0f0" textLength="6.80" lengthAdjust="spacingAndGlyphs" opacity="0.85">Банкны</text><rect x="115.09" y="7.65" width="7.40" height="0.95" fill="#eee" opacity=".55"/><text x="115.09" y="28.99" font-size="2.6" font-weight="normal" font-family="Liberation Sans" fill="#f0f0f0" textLength="6.80" lengthAdjust="spacingAndGlyphs" opacity="0.85">Банкны</text><rect x="68.79" y="7.53" width="7.16" height="1.19" fill="#bbb" opacity=".35"/><rect x="125.47" y="7.53" width="4.18" height="1.19" fill="#bbb" opacity=".35"/><rect x="68.79" y="10.51" width="7.16" height="1.19" fill="#bbb" opacity=".35"/><rect x="125.47" y="10.51" width="4.18" height="1.19" fill="#bbb" opacity=".35"/><rect x="68.79" y="13.50" width="7.16" height="1.19" fill="#bbb" opacity=".35"/><rect x="125.47" y="13.50" width="4.18" height="1.19" fill="#bbb" opacity=".35"/><rect x="68.79" y="16.48" width="7.16" height="1.19" fill="#bbb" opacity=".35"/><rect x="125.47" y="16.48" width="4.18" height="1.19" fill="#bbb" opacity=".35"/><rect x="68.79" y="19.46" width="7.16" height="1.19" fill="#bbb" opacity=".35"/><rect x="125.47" y="19.46" width="4.18" height="1.19" fill="#bbb" opacity=".35"/><rect x="68.79" y="22.45" width="7.16" height="1.19" fill="#bbb" opacity=".35"/><rect x="125.47" y="22.45" width="4.18" height="1.19" fill="#bbb" opacity=".35"/><rect x="86.69" y="31.63" width="3.58" height="1.19" fill="#4472c4" /><text x="90.87" y="33.07" font-size="2.3400000000000003" font-weight="normal" font-family="Liberation Sans" fill="#ddd" textLength="7.76" lengthAdjust="spacingAndGlyphs" opacity="0.5">Банкны </text><rect x="100.42" y="31.99" width="3.58" height="0.48" fill="#c0392b" /><text x="104.59" y="33.07" font-size="2.3400000000000003" font-weight="normal" font-family="Liberation Sans" fill="#ddd" textLength="4.77" lengthAdjust="spacingAndGlyphs" opacity="0.5">Банк</text><defs><radialGradient id="g17c" cx=".5" cy=".5" r=".7"><stop offset="0" stop-color="#4b4b4b"/><stop offset="1" stop-color="#222"/></radialGradient></defs><rect x="0.18" y="36.17" width="63.84" height="37.59" fill="url(#g17c)"/><rect x="10.32" y="38.06" width="43.56" height="1" fill="url(#dots)" opacity=".9"/><rect x="7.34" y="40.08" width="49.52" height="1" fill="url(#dots)" opacity=".9"/><rect x="11.51" y="45.12" width="46.54" height="0.36" fill="#777" opacity=".6"/><rect x="11.51" y="49.30" width="46.54" height="0.36" fill="#777" opacity=".6"/><rect x="11.51" y="53.47" width="46.54" height="0.36" fill="#777" opacity=".6"/><rect x="11.51" y="57.65" width="46.54" height="0.36" fill="#777" opacity=".6"/><rect x="11.51" y="61.83" width="46.54" height="0.36" fill="#777" opacity=".6"/><rect x="11.51" y="66.00" width="46.54" height="0.72" fill="#aaa" /><rect x="10.32" y="55.26" width="5.37" height="10.74" fill="#ffff00" /><rect x="24.04" y="47.51" width="5.37" height="18.50" fill="#ffff00" /><rect x="36.57" y="48.70" width="5.37" height="17.30" fill="#ffff00" /><rect x="49.70" y="63.62" width="5.37" height="2.39" fill="#ffff00" /><path d="M15.69 55.26 L29.41 47.51 L41.35 48.10 L55.07 62.42" stroke="#c0392b" stroke-width="1.0" fill="none" opacity="1" stroke-linejoin="round"/><rect x="15.69" y="54.07" width="4.77" height="2.39" fill="#000" opacity=".85"/><rect x="16.29" y="54.79" width="3.58" height="0.95" fill="#fff" opacity=".35"/><rect x="29.41" y="46.31" width="4.77" height="2.39" fill="#000" opacity=".85"/><rect x="30.01" y="47.03" width="3.58" height="0.95" fill="#fff" opacity=".35"/><rect x="41.35" y="46.91" width="4.77" height="2.39" fill="#000" opacity=".85"/><rect x="41.94" y="47.63" width="3.58" height="0.95" fill="#fff" opacity=".35"/><rect x="55.07" y="61.23" width="4.77" height="2.39" fill="#000" opacity=".85"/><rect x="55.67" y="61.95" width="3.58" height="0.95" fill="#fff" opacity=".35"/><rect x="9.72" y="53.59" width="7.16" height="0.95" fill="#eee" opacity=".55"/><text x="9.72" y="69.56" font-size="2.6" font-weight="normal" font-family="Liberation Sans" fill="#f0f0f0" textLength="6.56" lengthAdjust="spacingAndGlyphs" opacity="0.85">Банкны</text><rect x="23.45" y="45.84" width="7.16" height="0.95" fill="#eee" opacity=".55"/><text x="23.45" y="69.56" font-size="2.6" font-weight="normal" font-family="Liberation Sans" fill="#f0f0f0" textLength="6.56" lengthAdjust="spacingAndGlyphs" opacity="0.85">Банкны</text><rect x="35.98" y="47.03" width="7.16" height="0.95" fill="#eee" opacity=".55"/><text x="35.98" y="69.56" font-size="2.6" font-weight="normal" font-family="Liberation Sans" fill="#f0f0f0" textLength="6.56" lengthAdjust="spacingAndGlyphs" opacity="0.85">Банкны</text><rect x="49.10" y="61.95" width="7.16" height="0.95" fill="#eee" opacity=".55"/><text x="49.10" y="69.56" font-size="2.6" font-weight="normal" font-family="Liberation Sans" fill="#f0f0f0" textLength="6.56" lengthAdjust="spacingAndGlyphs" opacity="0.85">Банкны</text><rect x="3.16" y="44.52" width="7.16" height="1.19" fill="#bbb" opacity=".35"/><rect x="58.65" y="44.52" width="4.18" height="1.19" fill="#bbb" opacity=".35"/><rect x="3.16" y="48.70" width="7.16" height="1.19" fill="#bbb" opacity=".35"/><rect x="58.65" y="48.70" width="4.18" height="1.19" fill="#bbb" opacity=".35"/><rect x="3.16" y="52.88" width="7.16" height="1.19" fill="#bbb" opacity=".35"/><rect x="58.65" y="52.88" width="4.18" height="1.19" fill="#bbb" opacity=".35"/><rect x="3.16" y="57.05" width="7.16" height="1.19" fill="#bbb" opacity=".35"/><rect x="58.65" y="57.05" width="4.18" height="1.19" fill="#bbb" opacity=".35"/><rect x="3.16" y="61.23" width="7.16" height="1.19" fill="#bbb" opacity=".35"/><rect x="58.65" y="61.23" width="4.18" height="1.19" fill="#bbb" opacity=".35"/><rect x="18.08" y="70.78" width="3.58" height="1.19" fill="#ffff00" /><text x="22.25" y="72.21" font-size="2.3400000000000003" font-weight="normal" font-family="Liberation Sans" fill="#ddd" textLength="7.76" lengthAdjust="spacingAndGlyphs" opacity="0.5">Банкны </text><rect x="31.80" y="71.13" width="3.58" height="0.48" fill="#c0392b" /><text x="35.98" y="72.21" font-size="2.3400000000000003" font-weight="normal" font-family="Liberation Sans" fill="#ddd" textLength="4.77" lengthAdjust="spacingAndGlyphs" opacity="0.5">Банк</text><text x="66.41" y="40.80" font-size="2.6" font-weight="bold" font-family="Liberation Sans" fill="#000" textLength="42.36" lengthAdjust="spacingAndGlyphs" opacity="1">Банкны санхүүгийн тайлангийн бүтэц бүр</text><rect x="66.41" y="41.06" width="42.36" height="0.48" fill="#000" /><text x="66.41" y="43.48" font-size="2.7300000000000004" font-weight="normal" font-family="Liberation Sans" fill="#4e3030" textLength="58.47" lengthAdjust="spacingAndGlyphs" opacity="0.9">анкны санхүүгийн тайлангийн бүтэц бүрэлдэхүүн агуу</text><text x="66.41" y="47.53" font-size="2.7300000000000004" font-weight="normal" font-family="Liberation Sans" fill="#4e3030" textLength="22.67" lengthAdjust="spacingAndGlyphs" opacity="0.9">нкны санхүүгийн тай</text><text x="66.41" y="50.95" font-size="2.6" font-weight="bold" font-family="Liberation Sans" fill="#000" textLength="45.94" lengthAdjust="spacingAndGlyphs" opacity="1">Банкны санхүүгийн тайлангийн бүтэц бүрэлдэ</text><rect x="66.41" y="51.21" width="45.94" height="0.48" fill="#000" /><text x="66.41" y="53.86" font-size="2.7300000000000004" font-weight="normal" font-family="Liberation Sans" fill="#4e3030" textLength="63.84" lengthAdjust="spacingAndGlyphs" opacity="0.9">кны санхүүгийн тайлангийн бүтэц бүрэлдэхүүн агуулга тод</text><text x="66.41" y="56.60" font-size="2.7300000000000004" font-weight="normal" font-family="Liberation Sans" fill="#4e3030" textLength="14.32" lengthAdjust="spacingAndGlyphs" opacity="0.9">ны санхүүгий</text><text x="66.41" y="60.49" font-size="2.6" font-weight="bold" font-family="Liberation Sans" fill="#000" textLength="49.52" lengthAdjust="spacingAndGlyphs" opacity="1">Банкны санхүүгийн тайлангийн бүтэц бүрэлдэхүү</text><rect x="66.41" y="60.75" width="49.52" height="0.48" fill="#000" /><text x="66.41" y="63.17" font-size="2.7300000000000004" font-weight="normal" font-family="Liberation Sans" fill="#4e3030" textLength="63.84" lengthAdjust="spacingAndGlyphs" opacity="0.9">кны санхүүгийн тайлангийн бүтэц бүрэлдэхүүн агуулга тод</text><text x="66.41" y="66.15" font-size="2.7300000000000004" font-weight="normal" font-family="Liberation Sans" fill="#4e3030" textLength="63.84" lengthAdjust="spacingAndGlyphs" opacity="0.9"> бүтэц бүрэлдэхүүн агуулга тодруулга үзүүлэлт харьцуула</text><text x="66.41" y="69.13" font-size="2.7300000000000004" font-weight="normal" font-family="Liberation Sans" fill="#4e3030" textLength="63.84" lengthAdjust="spacingAndGlyphs" opacity="0.9">гийн тайлангийн бүтэц бүрэлдэхүүн агуулга тодруулга үзү</text><text x="66.41" y="72.12" font-size="2.7300000000000004" font-weight="normal" font-family="Liberation Sans" fill="#4e3030" textLength="29.24" lengthAdjust="spacingAndGlyphs" opacity="0.9">элдэхүүн агуулга тодруулг</text></svg></div></div><span class="num" style="left:364px;top:392px;color:#444">17</span><div class="th" style="left:531px;top:312px;background:#fad6bb"><div style="position:absolute;left:0;top:0;width:131px;height:74px;overflow:hidden"><svg width="131" height="74" viewBox="0 0 131 74" font-family="Liberation Sans"><rect x="0.00" y="0.00" width="131.00" height="13.00" fill="#66a6cb" /><rect x="1.50" y="1.00" width="7.2" height="12" rx="0.8" fill="#25292b"/><rect x="2.10" y="4.60" width="1.6" height="1.6" fill="#e8e8e8"/><rect x="4.20" y="3.60" width="1.7" height="2.6" fill="#e0e0e0"/><rect x="6.30" y="2.80" width="1.8" height="3.4" fill="#e0e0e0"/><path d="M2.10 3.90 L5.50 2.20" stroke="#9a1a2a" stroke-width="0.9"/><rect x="2.00" y="7.00" width="6.2" height="5.4" fill="#1c1f20"/><rect x="2.30" y="8.60" width="5.6" height="1.6" fill="#8a8a8a" opacity=".8"/><circle cx="2.70" cy="13.30" r="0.9" fill="#222"/><circle cx="7.50" cy="13.30" r="0.9" fill="#222"/><ellipse cx="12.50" cy="11.40" rx="1.5" ry="1.5" fill="#f6e2d4"/><ellipse cx="12.50" cy="10.00" rx="1.5" ry="0.7" fill="#1e2226"/><rect x="10.30" y="12.60" width="4.2" height="0.6" fill="#8060b0" opacity=".4"/><ellipse cx="17.40" cy="11.40" rx="1.5" ry="1.5" fill="#f6e2d4"/><ellipse cx="17.40" cy="10.00" rx="1.5" ry="0.7" fill="#1e2226"/><rect x="15.20" y="12.60" width="4.2" height="0.6" fill="#8060b0" opacity=".4"/><ellipse cx="21.90" cy="11.40" rx="1.5" ry="1.5" fill="#f6e2d4"/><ellipse cx="21.90" cy="10.00" rx="1.5" ry="0.7" fill="#eef2f6"/><rect x="19.70" y="12.60" width="4.2" height="0.6" fill="#8060b0" opacity=".4"/><text x="22.85" y="8.14" font-size="5.0" font-weight="bold" font-family="Liberation Sans" fill="#fff" textLength="85.92" lengthAdjust="spacingAndGlyphs" >Орлогоо ур дүнгийн тайлан</text><text x="0.77" y="18.44" font-size="3.12" font-weight="normal" font-family="Liberation Sans" fill="#803030" textLength="124.11" lengthAdjust="spacingAndGlyphs" opacity="0.9">анкны санхүүгийн тайлангийн бүтэц бүрэлдэхүүн агуулга тодруулга үзүүлэлт харьцуулалт ашигт ажи</text><text x="0.77" y="23.57" font-size="3.12" font-weight="normal" font-family="Liberation Sans" fill="#803030" textLength="115.16" lengthAdjust="spacingAndGlyphs" opacity="0.9">ы санхүүгийн тайлангийн бүтэц бүрэлдэхүүн агуулга тодруулга үзүүлэлт харьцуулалт ашигт </text><path d="M1.01 30.68 L2.92 31.75 L1.01 32.83 L1.61 31.75Z" fill="#1f3864"/><text x="6.14" y="32.88" font-size="3.12" font-weight="normal" font-family="Liberation Sans" fill="#3a2a50" textLength="118.14" lengthAdjust="spacingAndGlyphs" opacity="0.9"> бүтэц бүрэлдэхүүн агуулга тодруулга үзүүлэлт харьцуулалт ашигт ажиллагаа хөрвөх чадвар Ба</text><text x="6.14" y="37.89" font-size="3.12" font-weight="normal" font-family="Liberation Sans" fill="#3a2a50" textLength="113.96" lengthAdjust="spacingAndGlyphs" opacity="0.9">үтэц бүрэлдэхүүн агуулга тодруулга үзүүлэлт харьцуулалт ашигт ажиллагаа хөрвөх чадвар </text><path d="M1.01 43.45 L2.92 44.52 L1.01 45.60 L1.61 44.52Z" fill="#1f3864"/><text x="6.14" y="45.65" font-size="3.12" font-weight="normal" font-family="Liberation Sans" fill="#3a2a50" textLength="118.14" lengthAdjust="spacingAndGlyphs" opacity="0.9">йн тайлангийн бүтэц бүрэлдэхүүн агуулга тодруулга үзүүлэлт харьцуулалт ашигт ажиллагаа хөр</text><text x="6.14" y="51.25" font-size="3.12" font-weight="normal" font-family="Liberation Sans" fill="#3a2a50" textLength="112.77" lengthAdjust="spacingAndGlyphs" opacity="0.9">ангийн бүтэц бүрэлдэхүүн агуулга тодруулга үзүүлэлт харьцуулалт ашигт ажиллагаа хөрвөх</text></svg></div></div><span class="num" style="left:532px;top:392px;color:#444">18</span><div class="th" style="left:699px;top:312px;background:#fad6bb"><div style="position:absolute;left:0;top:0;width:131px;height:74px;overflow:hidden"><svg width="131" height="74" viewBox="0 0 131 74" font-family="Liberation Sans"><rect x="0.00" y="0.00" width="131.00" height="13.00" fill="#66a6cb" /><rect x="1.50" y="1.00" width="7.2" height="12" rx="0.8" fill="#25292b"/><rect x="2.10" y="4.60" width="1.6" height="1.6" fill="#e8e8e8"/><rect x="4.20" y="3.60" width="1.7" height="2.6" fill="#e0e0e0"/><rect x="6.30" y="2.80" width="1.8" height="3.4" fill="#e0e0e0"/><path d="M2.10 3.90 L5.50 2.20" stroke="#9a1a2a" stroke-width="0.9"/><rect x="2.00" y="7.00" width="6.2" height="5.4" fill="#1c1f20"/><rect x="2.30" y="8.60" width="5.6" height="1.6" fill="#8a8a8a" opacity=".8"/><circle cx="2.70" cy="13.30" r="0.9" fill="#222"/><circle cx="7.50" cy="13.30" r="0.9" fill="#222"/><ellipse cx="12.50" cy="11.40" rx="1.5" ry="1.5" fill="#f6e2d4"/><ellipse cx="12.50" cy="10.00" rx="1.5" ry="0.7" fill="#1e2226"/><rect x="10.30" y="12.60" width="4.2" height="0.6" fill="#8060b0" opacity=".4"/><ellipse cx="17.40" cy="11.40" rx="1.5" ry="1.5" fill="#f6e2d4"/><ellipse cx="17.40" cy="10.00" rx="1.5" ry="0.7" fill="#1e2226"/><rect x="15.20" y="12.60" width="4.2" height="0.6" fill="#8060b0" opacity=".4"/><ellipse cx="21.90" cy="11.40" rx="1.5" ry="1.5" fill="#f6e2d4"/><ellipse cx="21.90" cy="10.00" rx="1.5" ry="0.7" fill="#eef2f6"/><rect x="19.70" y="12.60" width="4.2" height="0.6" fill="#8060b0" opacity=".4"/><text x="22.85" y="8.14" font-size="5.0" font-weight="bold" font-family="Liberation Sans" fill="#fff" textLength="85.92" lengthAdjust="spacingAndGlyphs" >Орлогоо ур дүнгийн тайлан</text><rect x="58.05" y="12.90" width="22.08" height="66.11" fill="#92d050" /><rect x="80.13" y="12.90" width="19.69" height="66.11" fill="#00b0f0" /><rect x="99.82" y="12.90" width="22.08" height="66.11" fill="#ffff00" /><rect x="3.40" y="12.90" width="0.36" height="66.11" fill="#8a6a5a" opacity=".7"/><rect x="3.40" y="20.66" width="118.50" height="0.36" fill="#7a5a4a" opacity=".55"/><rect x="3.40" y="24.83" width="118.50" height="0.36" fill="#7a5a4a" opacity=".55"/><rect x="3.40" y="28.77" width="118.50" height="0.36" fill="#7a5a4a" opacity=".55"/><rect x="3.40" y="32.95" width="118.50" height="0.36" fill="#7a5a4a" opacity=".55"/><rect x="3.40" y="37.36" width="118.50" height="0.36" fill="#7a5a4a" opacity=".55"/><rect x="3.40" y="41.54" width="118.50" height="0.36" fill="#7a5a4a" opacity=".55"/><rect x="3.40" y="45.48" width="118.50" height="0.36" fill="#7a5a4a" opacity=".55"/><rect x="3.40" y="49.89" width="118.50" height="0.36" fill="#7a5a4a" opacity=".55"/><rect x="3.40" y="54.67" width="118.50" height="0.36" fill="#7a5a4a" opacity=".55"/><rect x="3.40" y="58.84" width="118.50" height="0.36" fill="#7a5a4a" opacity=".55"/><rect x="3.40" y="62.78" width="118.50" height="0.36" fill="#7a5a4a" opacity=".55"/><rect x="3.40" y="66.60" width="118.50" height="0.36" fill="#7a5a4a" opacity=".55"/><rect x="3.40" y="70.78" width="118.50" height="0.36" fill="#7a5a4a" opacity=".55"/><text x="3.76" y="23.98" font-size="2.6" font-weight="normal" font-family="Liberation Sans" fill="#7a5050" textLength="17.90" lengthAdjust="spacingAndGlyphs" opacity="0.5">бүрэлдэхүүн агуу</text><text x="65.21" y="23.89" font-size="2.3400000000000003" font-weight="normal" font-family="Liberation Sans" fill="#555" textLength="7.76" lengthAdjust="spacingAndGlyphs" opacity="0.35">йн тайл</text><text x="86.10" y="23.89" font-size="2.3400000000000003" font-weight="normal" font-family="Liberation Sans" fill="#555" textLength="7.16" lengthAdjust="spacingAndGlyphs" opacity="0.35">үтэц бү</text><text x="107.58" y="23.89" font-size="2.3400000000000003" font-weight="normal" font-family="Liberation Sans" fill="#555" textLength="7.16" lengthAdjust="spacingAndGlyphs" opacity="0.35">хүүгийн</text><text x="3.76" y="28.16" font-size="2.6" font-weight="normal" font-family="Liberation Sans" fill="#7a5050" textLength="19.09" lengthAdjust="spacingAndGlyphs" opacity="0.5">үтэц бүрэлдэхүүн </text><text x="65.21" y="28.06" font-size="2.3400000000000003" font-weight="normal" font-family="Liberation Sans" fill="#555" textLength="7.76" lengthAdjust="spacingAndGlyphs" opacity="0.35">хүүгийн</text><text x="86.10" y="28.06" font-size="2.3400000000000003" font-weight="normal" font-family="Liberation Sans" fill="#555" textLength="7.16" lengthAdjust="spacingAndGlyphs" opacity="0.35">ийн бүт</text><text x="107.58" y="28.06" font-size="2.3400000000000003" font-weight="normal" font-family="Liberation Sans" fill="#555" textLength="7.16" lengthAdjust="spacingAndGlyphs" opacity="0.35">ы санхү</text><text x="3.76" y="32.33" font-size="2.6" font-weight="bold" font-family="Liberation Sans" fill="#802020" textLength="26.25" lengthAdjust="spacingAndGlyphs" opacity="0.9">ийн бүтэц бүрэлдэхүүн аг</text><rect x="66.41" y="30.90" width="5.37" height="1.0" fill="#333" opacity="0.8"/><rect x="86.10" y="30.90" width="6.56" height="1.0" fill="#003090" opacity="0.8"/><rect x="108.77" y="30.90" width="4.77" height="1.0" fill="#333" opacity="0.8"/><text x="3.76" y="37.11" font-size="2.6" font-weight="normal" font-family="Liberation Sans" fill="#7a5050" textLength="35.20" lengthAdjust="spacingAndGlyphs" opacity="0.5">ийн бүтэц бүрэлдэхүүн агуулга то</text><text x="65.21" y="37.01" font-size="2.3400000000000003" font-weight="normal" font-family="Liberation Sans" fill="#555" textLength="7.76" lengthAdjust="spacingAndGlyphs" opacity="0.35">ы санхү</text><text x="86.10" y="37.01" font-size="2.3400000000000003" font-weight="normal" font-family="Liberation Sans" fill="#555" textLength="7.16" lengthAdjust="spacingAndGlyphs" opacity="0.35">йлангий</text><text x="107.58" y="37.01" font-size="2.3400000000000003" font-weight="normal" font-family="Liberation Sans" fill="#555" textLength="7.16" lengthAdjust="spacingAndGlyphs" opacity="0.35">Банкны </text><text x="3.76" y="41.28" font-size="2.6" font-weight="normal" font-family="Liberation Sans" fill="#7a5050" textLength="35.20" lengthAdjust="spacingAndGlyphs" opacity="0.5">йлангийн бүтэц бүрэлдэхүүн агуул</text><text x="65.21" y="41.19" font-size="2.3400000000000003" font-weight="normal" font-family="Liberation Sans" fill="#555" textLength="7.76" lengthAdjust="spacingAndGlyphs" opacity="0.35">Банкны </text><text x="86.10" y="41.19" font-size="2.3400000000000003" font-weight="normal" font-family="Liberation Sans" fill="#555" textLength="7.16" lengthAdjust="spacingAndGlyphs" opacity="0.35">йн тайл</text><text x="107.58" y="41.19" font-size="2.3400000000000003" font-weight="normal" font-family="Liberation Sans" fill="#555" textLength="7.16" lengthAdjust="spacingAndGlyphs" opacity="0.35">бүрэлдэ</text><text x="3.76" y="45.46" font-size="2.6" font-weight="bold" font-family="Liberation Sans" fill="#802020" textLength="44.75" lengthAdjust="spacingAndGlyphs" opacity="0.9">йн тайлангийн бүтэц бүрэлдэхүүн агуулга </text><rect x="66.41" y="44.02" width="5.37" height="1.0" fill="#333" opacity="0.8"/><rect x="86.10" y="44.02" width="6.56" height="1.0" fill="#003090" opacity="0.8"/><rect x="108.77" y="44.02" width="4.77" height="1.0" fill="#333" opacity="0.8"/><text x="3.76" y="49.40" font-size="2.6" font-weight="normal" font-family="Liberation Sans" fill="#7a5050" textLength="34.61" lengthAdjust="spacingAndGlyphs" opacity="0.5">анхүүгийн тайлангийн бүтэц бүрэ</text><text x="65.21" y="49.30" font-size="2.3400000000000003" font-weight="normal" font-family="Liberation Sans" fill="#555" textLength="7.76" lengthAdjust="spacingAndGlyphs" opacity="0.35"> бүтэц </text><text x="86.10" y="49.30" font-size="2.3400000000000003" font-weight="normal" font-family="Liberation Sans" fill="#555" textLength="7.16" lengthAdjust="spacingAndGlyphs" opacity="0.35">кны сан</text><text x="107.58" y="49.30" font-size="2.3400000000000003" font-weight="normal" font-family="Liberation Sans" fill="#555" textLength="7.16" lengthAdjust="spacingAndGlyphs" opacity="0.35">нгийн б</text><text x="3.76" y="54.05" font-size="2.6" font-weight="bold" font-family="Liberation Sans" fill="#802020" textLength="30.43" lengthAdjust="spacingAndGlyphs" opacity="0.9">санхүүгийн тайлангийн бүтэц</text><rect x="66.41" y="52.61" width="5.37" height="1.0" fill="#333" opacity="0.8"/><rect x="86.10" y="52.61" width="6.56" height="1.0" fill="#003090" opacity="0.8"/><rect x="108.77" y="52.61" width="4.77" height="1.0" fill="#333" opacity="0.8"/><text x="3.76" y="57.99" font-size="2.6" font-weight="normal" font-family="Liberation Sans" fill="#7a5050" textLength="27.45" lengthAdjust="spacingAndGlyphs" opacity="0.5">Банкны санхүүгийн тайланг</text><text x="65.21" y="57.89" font-size="2.3400000000000003" font-weight="normal" font-family="Liberation Sans" fill="#555" textLength="7.76" lengthAdjust="spacingAndGlyphs" opacity="0.35">йлангий</text><text x="86.10" y="57.89" font-size="2.3400000000000003" font-weight="normal" font-family="Liberation Sans" fill="#555" textLength="7.16" lengthAdjust="spacingAndGlyphs" opacity="0.35">бүрэлдэ</text><text x="107.58" y="57.89" font-size="2.3400000000000003" font-weight="normal" font-family="Liberation Sans" fill="#555" textLength="7.16" lengthAdjust="spacingAndGlyphs" opacity="0.35">йн тайл</text><text x="3.76" y="61.93" font-size="2.6" font-weight="normal" font-family="Liberation Sans" fill="#7a5050" textLength="42.36" lengthAdjust="spacingAndGlyphs" opacity="0.5">ц бүрэлдэхүүн агуулга тодруулга үзүүлэ</text><text x="65.21" y="61.83" font-size="2.3400000000000003" font-weight="normal" font-family="Liberation Sans" fill="#555" textLength="7.76" lengthAdjust="spacingAndGlyphs" opacity="0.35">гийн та</text><text x="86.10" y="61.83" font-size="2.3400000000000003" font-weight="normal" font-family="Liberation Sans" fill="#555" textLength="7.16" lengthAdjust="spacingAndGlyphs" opacity="0.35"> бүтэц </text><text x="107.58" y="61.83" font-size="2.3400000000000003" font-weight="normal" font-family="Liberation Sans" fill="#555" textLength="7.16" lengthAdjust="spacingAndGlyphs" opacity="0.35">анхүүги</text><text x="3.76" y="66.34" font-size="2.6" font-weight="bold" font-family="Liberation Sans" fill="#802020" textLength="25.66" lengthAdjust="spacingAndGlyphs" opacity="0.9">үтэц бүрэлдэхүүн агуулг</text><rect x="66.41" y="64.91" width="5.37" height="1.0" fill="#333" opacity="0.8"/><rect x="86.10" y="64.91" width="6.56" height="1.0" fill="#003090" opacity="0.8"/><rect x="108.77" y="64.91" width="4.77" height="1.0" fill="#333" opacity="0.8"/><text x="3.76" y="70.16" font-size="2.6" font-weight="normal" font-family="Liberation Sans" fill="#7a5050" textLength="28.04" lengthAdjust="spacingAndGlyphs" opacity="0.5">ангийн бүтэц бүрэлдэхүүн </text><text x="65.21" y="70.07" font-size="2.3400000000000003" font-weight="normal" font-family="Liberation Sans" fill="#555" textLength="7.76" lengthAdjust="spacingAndGlyphs" opacity="0.35">нкны са</text><text x="86.10" y="70.07" font-size="2.3400000000000003" font-weight="normal" font-family="Liberation Sans" fill="#555" textLength="7.16" lengthAdjust="spacingAndGlyphs" opacity="0.35"> тайлан</text><text x="107.58" y="70.07" font-size="2.3400000000000003" font-weight="normal" font-family="Liberation Sans" fill="#555" textLength="7.16" lengthAdjust="spacingAndGlyphs" opacity="0.35">рэлдэхү</text><text x="3.76" y="74.34" font-size="2.6" font-weight="bold" font-family="Liberation Sans" fill="#802020" textLength="34.01" lengthAdjust="spacingAndGlyphs" opacity="0.9"> тайлангийн бүтэц бүрэлдэхүүн а</text><rect x="66.41" y="72.90" width="5.37" height="1.0" fill="#333" opacity="0.8"/><rect x="86.10" y="72.90" width="6.56" height="1.0" fill="#003090" opacity="0.8"/><rect x="108.77" y="72.90" width="4.77" height="1.0" fill="#333" opacity="0.8"/><rect x="62.83" y="15.28" width="12.53" height="1.2" fill="#333" opacity="0.75"/><rect x="61.63" y="18.62" width="14.92" height="1.2" fill="#333" opacity="0.75"/><rect x="83.11" y="15.28" width="13.72" height="1.2" fill="#003090" opacity="0.75"/><rect x="81.92" y="18.62" width="16.11" height="1.2" fill="#003090" opacity="0.75"/><rect x="101.01" y="15.28" width="19.69" height="1.2" fill="#443300" opacity="0.75"/><rect x="99.82" y="18.62" width="22.08" height="1.2" fill="#443300" opacity="0.75"/></svg></div></div><span class="num" style="left:700px;top:392px;color:#444">19</span><div class="th" style="left:867px;top:312px;background:#fad6bb"><div style="position:absolute;left:0;top:0;width:131px;height:74px;overflow:hidden"><svg width="131" height="74" viewBox="0 0 131 74" font-family="Liberation Sans"><rect x="0.00" y="0.00" width="131.00" height="13.00" fill="#66a6cb" /><rect x="1.50" y="1.00" width="7.2" height="12" rx="0.8" fill="#25292b"/><rect x="2.10" y="4.60" width="1.6" height="1.6" fill="#e8e8e8"/><rect x="4.20" y="3.60" width="1.7" height="2.6" fill="#e0e0e0"/><rect x="6.30" y="2.80" width="1.8" height="3.4" fill="#e0e0e0"/><path d="M2.10 3.90 L5.50 2.20" stroke="#9a1a2a" stroke-width="0.9"/><rect x="2.00" y="7.00" width="6.2" height="5.4" fill="#1c1f20"/><rect x="2.30" y="8.60" width="5.6" height="1.6" fill="#8a8a8a" opacity=".8"/><circle cx="2.70" cy="13.30" r="0.9" fill="#222"/><circle cx="7.50" cy="13.30" r="0.9" fill="#222"/><ellipse cx="12.50" cy="11.40" rx="1.5" ry="1.5" fill="#f6e2d4"/><ellipse cx="12.50" cy="10.00" rx="1.5" ry="0.7" fill="#1e2226"/><rect x="10.30" y="12.60" width="4.2" height="0.6" fill="#8060b0" opacity=".4"/><ellipse cx="17.40" cy="11.40" rx="1.5" ry="1.5" fill="#f6e2d4"/><ellipse cx="17.40" cy="10.00" rx="1.5" ry="0.7" fill="#1e2226"/><rect x="15.20" y="12.60" width="4.2" height="0.6" fill="#8060b0" opacity=".4"/><ellipse cx="21.90" cy="11.40" rx="1.5" ry="1.5" fill="#f6e2d4"/><ellipse cx="21.90" cy="10.00" rx="1.5" ry="0.7" fill="#eef2f6"/><rect x="19.70" y="12.60" width="4.2" height="0.6" fill="#8060b0" opacity=".4"/><text x="20.46" y="8.14" font-size="5.0" font-weight="bold" font-family="Liberation Sans" fill="#fff" textLength="90.10" lengthAdjust="spacingAndGlyphs" >Зохистой шалгуур үзүүлэлт</text><rect x="68.79" y="12.90" width="18.50" height="28.40" fill="#c6d9f1" /><rect x="87.29" y="12.90" width="21.48" height="28.40" fill="#ffe699" /><rect x="108.77" y="12.90" width="17.30" height="28.40" fill="#a9d18e" /><rect x="1.37" y="21.49" width="124.70" height="0.36" fill="#6a4a3a" opacity=".6"/><rect x="1.37" y="25.79" width="124.70" height="0.36" fill="#6a4a3a" opacity=".6"/><rect x="1.37" y="33.78" width="124.70" height="0.36" fill="#6a4a3a" opacity=".6"/><rect x="1.37" y="41.06" width="124.70" height="0.36" fill="#6a4a3a" opacity=".6"/><rect x="1.25" y="12.90" width="0.36" height="28.40" fill="#6a4a3a" opacity=".6"/><rect x="43.02" y="12.90" width="0.36" height="28.40" fill="#6a4a3a" opacity=".6"/><rect x="68.67" y="12.90" width="0.36" height="28.40" fill="#6a4a3a" opacity=".6"/><rect x="87.17" y="12.90" width="0.36" height="28.40" fill="#6a4a3a" opacity=".6"/><rect x="108.65" y="12.90" width="0.36" height="28.40" fill="#6a4a3a" opacity=".6"/><rect x="125.95" y="12.90" width="0.36" height="28.40" fill="#6a4a3a" opacity=".6"/><text x="46.72" y="18.25" font-size="2.6" font-weight="normal" font-family="Liberation Sans" fill="#555" textLength="17.30" lengthAdjust="spacingAndGlyphs" opacity="0.6">ийн бүтэц бүрэл</text><text x="71.78" y="18.25" font-size="2.6" font-weight="normal" font-family="Liberation Sans" fill="#555" textLength="12.53" lengthAdjust="spacingAndGlyphs" opacity="0.6">бүрэлдэхүүн</text><text x="90.27" y="18.25" font-size="2.6" font-weight="normal" font-family="Liberation Sans" fill="#555" textLength="16.11" lengthAdjust="spacingAndGlyphs" opacity="0.6">үтэц бүрэлдэхү</text><text x="109.96" y="16.46" font-size="2.6" font-weight="normal" font-family="Liberation Sans" fill="#555" textLength="15.51" lengthAdjust="spacingAndGlyphs" opacity="0.6">Банкны санхүүг</text><text x="114.74" y="20.40" font-size="2.6" font-weight="normal" font-family="Liberation Sans" fill="#555" textLength="5.97" lengthAdjust="spacingAndGlyphs" opacity="0.6">Банкн</text><text x="1.97" y="24.58" font-size="2.6" font-weight="normal" font-family="Liberation Sans" fill="#4e3030" textLength="35.80" lengthAdjust="spacingAndGlyphs" opacity="0.75">Банкны санхүүгийн тайлангийн бүт</text><text x="1.97" y="28.75" font-size="2.6" font-weight="normal" font-family="Liberation Sans" fill="#4e3030" textLength="29.83" lengthAdjust="spacingAndGlyphs" opacity="0.75">ны санхүүгийн тайлангийн бү</text><text x="1.97" y="32.93" font-size="2.6" font-weight="normal" font-family="Liberation Sans" fill="#4e3030" textLength="26.25" lengthAdjust="spacingAndGlyphs" opacity="0.75">анхүүгийн тайлангийн бүт</text><text x="1.97" y="38.90" font-size="2.6" font-weight="bold" font-family="Liberation Sans" fill="#4e3030" textLength="39.98" lengthAdjust="spacingAndGlyphs" opacity="0.9">үгийн тайлангийн бүтэц бүрэлдэхүүн а</text><text x="52.09" y="24.58" font-size="2.6" font-weight="normal" font-family="Liberation Sans" fill="#333" textLength="5.97" lengthAdjust="spacingAndGlyphs" opacity="0.55">үтэц </text><text x="73.57" y="24.58" font-size="2.6" font-weight="normal" font-family="Liberation Sans" fill="#333" textLength="8.95" lengthAdjust="spacingAndGlyphs" opacity="0.55">хүүгийн </text><text x="93.85" y="24.58" font-size="2.6" font-weight="normal" font-family="Liberation Sans" fill="#333" textLength="8.95" lengthAdjust="spacingAndGlyphs" opacity="0.55">йлангийн</text><text x="113.54" y="24.58" font-size="2.6" font-weight="normal" font-family="Liberation Sans" fill="#333" textLength="7.76" lengthAdjust="spacingAndGlyphs" opacity="0.55">ийн бүт</text><text x="52.09" y="30.78" font-size="2.6" font-weight="normal" font-family="Liberation Sans" fill="#333" textLength="5.97" lengthAdjust="spacingAndGlyphs" opacity="0.55">үтэц </text><text x="73.57" y="30.78" font-size="2.6" font-weight="normal" font-family="Liberation Sans" fill="#333" textLength="8.95" lengthAdjust="spacingAndGlyphs" opacity="0.55">хүүгийн </text><text x="93.85" y="30.78" font-size="2.6" font-weight="normal" font-family="Liberation Sans" fill="#333" textLength="8.95" lengthAdjust="spacingAndGlyphs" opacity="0.55">йлангийн</text><text x="113.54" y="30.78" font-size="2.6" font-weight="normal" font-family="Liberation Sans" fill="#333" textLength="7.76" lengthAdjust="spacingAndGlyphs" opacity="0.55">ийн бүт</text><text x="52.09" y="38.90" font-size="2.6" font-weight="normal" font-family="Liberation Sans" fill="#333" textLength="5.97" lengthAdjust="spacingAndGlyphs" opacity="0.55">үтэц </text><text x="73.57" y="38.90" font-size="2.6" font-weight="normal" font-family="Liberation Sans" fill="#333" textLength="8.95" lengthAdjust="spacingAndGlyphs" opacity="0.55">хүүгийн </text><text x="93.85" y="38.90" font-size="2.6" font-weight="normal" font-family="Liberation Sans" fill="#333" textLength="8.95" lengthAdjust="spacingAndGlyphs" opacity="0.55">йлангийн</text><text x="113.54" y="38.90" font-size="2.6" font-weight="normal" font-family="Liberation Sans" fill="#333" textLength="7.76" lengthAdjust="spacingAndGlyphs" opacity="0.55">ийн бүт</text><text x="3.16" y="46.01" font-size="2.4699999999999998" font-weight="normal" font-family="Liberation Sans" fill="#4e3030" textLength="123.51" lengthAdjust="spacingAndGlyphs" opacity="0.65">йлангийн бүтэц бүрэлдэхүүн агуулга тодруулга үзүүлэлт харьцуулалт ашигт ажиллагаа хөрвөх чадвар Банкны санхүүгийн тайла</text><text x="3.16" y="49.35" font-size="2.4699999999999998" font-weight="normal" font-family="Liberation Sans" fill="#4e3030" textLength="123.51" lengthAdjust="spacingAndGlyphs" opacity="0.65">анхүүгийн тайлангийн бүтэц бүрэлдэхүүн агуулга тодруулга үзүүлэлт харьцуулалт ашигт ажиллагаа хөрвөх чадвар Банкны санх</text><text x="3.16" y="52.93" font-size="2.4699999999999998" font-weight="normal" font-family="Liberation Sans" fill="#4e3030" textLength="123.51" lengthAdjust="spacingAndGlyphs" opacity="0.65">элдэхүүн агуулга тодруулга үзүүлэлт харьцуулалт ашигт ажиллагаа хөрвөх чадвар Банкны санхүүгийн тайлангийн бүтэц бүрэлд</text><text x="3.16" y="56.15" font-size="2.4699999999999998" font-weight="normal" font-family="Liberation Sans" fill="#4e3030" textLength="31.03" lengthAdjust="spacingAndGlyphs" opacity="0.65">ийн бүтэц бүрэлдэхүүн агуулга</text><text x="3.16" y="59.73" font-size="2.4699999999999998" font-weight="normal" font-family="Liberation Sans" fill="#4e3030" textLength="123.51" lengthAdjust="spacingAndGlyphs" opacity="0.65">йн тайлангийн бүтэц бүрэлдэхүүн агуулга тодруулга үзүүлэлт харьцуулалт ашигт ажиллагаа хөрвөх чадвар Банкны санхүүгийн </text><text x="3.16" y="62.71" font-size="2.4699999999999998" font-weight="normal" font-family="Liberation Sans" fill="#4e3030" textLength="123.51" lengthAdjust="spacingAndGlyphs" opacity="0.65">Банкны санхүүгийн тайлангийн бүтэц бүрэлдэхүүн агуулга тодруулга үзүүлэлт харьцуулалт ашигт ажиллагаа хөрвөх чадвар Бан</text><text x="3.16" y="65.70" font-size="2.4699999999999998" font-weight="normal" font-family="Liberation Sans" fill="#4e3030" textLength="123.51" lengthAdjust="spacingAndGlyphs" opacity="0.65">ийн бүтэц бүрэлдэхүүн агуулга тодруулга үзүүлэлт харьцуулалт ашигт ажиллагаа хөрвөх чадвар Банкны санхүүгийн тайлангийн</text><text x="3.16" y="68.68" font-size="2.4699999999999998" font-weight="normal" font-family="Liberation Sans" fill="#4e3030" textLength="123.51" lengthAdjust="spacingAndGlyphs" opacity="0.65">хүүгийн тайлангийн бүтэц бүрэлдэхүүн агуулга тодруулга үзүүлэлт харьцуулалт ашигт ажиллагаа хөрвөх чадвар Банкны санхүү</text><text x="3.16" y="71.66" font-size="2.4699999999999998" font-weight="normal" font-family="Liberation Sans" fill="#4e3030" textLength="18.50" lengthAdjust="spacingAndGlyphs" opacity="0.65">бүрэлдэхүүн агуул</text></svg></div></div><span class="num" style="left:868px;top:392px;color:#444">20</span><div class="th" style="left:1035px;top:312px;background:#fad6bb"><div style="position:absolute;left:0;top:0;width:131px;height:74px;overflow:hidden"><svg width="131" height="74" viewBox="0 0 131 74" font-family="Liberation Sans"><rect x="0.00" y="0.00" width="131.00" height="13.00" fill="#66a6cb" /><rect x="1.50" y="1.00" width="7.2" height="12" rx="0.8" fill="#25292b"/><rect x="2.10" y="4.60" width="1.6" height="1.6" fill="#e8e8e8"/><rect x="4.20" y="3.60" width="1.7" height="2.6" fill="#e0e0e0"/><rect x="6.30" y="2.80" width="1.8" height="3.4" fill="#e0e0e0"/><path d="M2.10 3.90 L5.50 2.20" stroke="#9a1a2a" stroke-width="0.9"/><rect x="2.00" y="7.00" width="6.2" height="5.4" fill="#1c1f20"/><rect x="2.30" y="8.60" width="5.6" height="1.6" fill="#8a8a8a" opacity=".8"/><circle cx="2.70" cy="13.30" r="0.9" fill="#222"/><circle cx="7.50" cy="13.30" r="0.9" fill="#222"/><ellipse cx="12.50" cy="11.40" rx="1.5" ry="1.5" fill="#f6e2d4"/><ellipse cx="12.50" cy="10.00" rx="1.5" ry="0.7" fill="#1e2226"/><rect x="10.30" y="12.60" width="4.2" height="0.6" fill="#8060b0" opacity=".4"/><ellipse cx="17.40" cy="11.40" rx="1.5" ry="1.5" fill="#f6e2d4"/><ellipse cx="17.40" cy="10.00" rx="1.5" ry="0.7" fill="#1e2226"/><rect x="15.20" y="12.60" width="4.2" height="0.6" fill="#8060b0" opacity=".4"/><ellipse cx="21.90" cy="11.40" rx="1.5" ry="1.5" fill="#f6e2d4"/><ellipse cx="21.90" cy="10.00" rx="1.5" ry="0.7" fill="#eef2f6"/><rect x="19.70" y="12.60" width="4.2" height="0.6" fill="#8060b0" opacity=".4"/><text x="30.01" y="5.32" font-size="3.8" font-weight="bold" font-family="Liberation Sans" fill="#fff" textLength="81.15" lengthAdjust="spacingAndGlyphs" >Банкны өмч, өмнөх ажиллагааны</text><text x="57.46" y="11.52" font-size="3.8" font-weight="bold" font-family="Liberation Sans" fill="#fff" textLength="26.25" lengthAdjust="spacingAndGlyphs" >шинжилгээ</text><rect x="11.27" y="19.22" width="1.19" height="0.95" fill="#d07070" opacity=".8"/><text x="15.69" y="20.73" font-size="2.8600000000000003" font-weight="normal" font-family="Liberation Sans" fill="#4e3030" textLength="110.98" lengthAdjust="spacingAndGlyphs" opacity="0.75">санхүүгийн тайлангийн бүтэц бүрэлдэхүүн агуулга тодруулга үзүүлэлт харьцуулалт ашигт ажиллаг</text><text x="15.69" y="23.71" font-size="2.8600000000000003" font-weight="normal" font-family="Liberation Sans" fill="#4e3030" textLength="109.19" lengthAdjust="spacingAndGlyphs" opacity="0.75">эц бүрэлдэхүүн агуулга тодруулга үзүүлэлт харьцуулалт ашигт ажиллагаа хөрвөх чадвар Банкны</text><rect x="11.27" y="26.38" width="1.19" height="0.95" fill="#d07070" opacity=".8"/><text x="15.69" y="27.89" font-size="2.8600000000000003" font-weight="normal" font-family="Liberation Sans" fill="#4e3030" textLength="110.98" lengthAdjust="spacingAndGlyphs" opacity="0.75">н бүтэц бүрэлдэхүүн агуулга тодруулга үзүүлэлт харьцуулалт ашигт ажиллагаа хөрвөх чадвар Бан</text><text x="15.69" y="31.83" font-size="2.8600000000000003" font-weight="normal" font-family="Liberation Sans" fill="#4e3030" textLength="59.07" lengthAdjust="spacingAndGlyphs" opacity="0.75">йлангийн бүтэц бүрэлдэхүүн агуулга тодруулга үзүү</text><text x="11.51" y="41.88" font-size="2.6" font-weight="normal" font-family="Liberation Sans" fill="#4e3030" textLength="54.89" lengthAdjust="spacingAndGlyphs" opacity="0.8">Банкны санхүүгийн тайлангийн бүтэц бүрэлдэхүүн агу</text><text x="67.60" y="39.52" font-size="2.3400000000000003" font-weight="normal" font-family="Liberation Sans" fill="#4e3030" textLength="41.17" lengthAdjust="spacingAndGlyphs" opacity="0.7">кны санхүүгийн тайлангийн бүтэц бүрэлдэхү</text><rect x="67.36" y="40.82" width="43.20" height="0.95" fill="#111" /><text x="72.97" y="44.17" font-size="2.3400000000000003" font-weight="normal" font-family="Liberation Sans" fill="#4e3030" textLength="31.03" lengthAdjust="spacingAndGlyphs" opacity="0.7">нхүүгийн тайлангийн бүтэц бүрэл</text></svg></div></div><span class="num" style="left:1036px;top:392px;color:#444">21</span><div class="th" style="left:27px;top:439px;background:#fad6bb"><div style="position:absolute;left:0;top:0;width:131px;height:74px;overflow:hidden"><svg width="131" height="74" viewBox="0 0 131 74" font-family="Liberation Sans"><rect x="0.00" y="0.00" width="131.00" height="13.00" fill="#66a6cb" /><rect x="1.50" y="1.00" width="7.2" height="12" rx="0.8" fill="#25292b"/><rect x="2.10" y="4.60" width="1.6" height="1.6" fill="#e8e8e8"/><rect x="4.20" y="3.60" width="1.7" height="2.6" fill="#e0e0e0"/><rect x="6.30" y="2.80" width="1.8" height="3.4" fill="#e0e0e0"/><path d="M2.10 3.90 L5.50 2.20" stroke="#9a1a2a" stroke-width="0.9"/><rect x="2.00" y="7.00" width="6.2" height="5.4" fill="#1c1f20"/><rect x="2.30" y="8.60" width="5.6" height="1.6" fill="#8a8a8a" opacity=".8"/><circle cx="2.70" cy="13.30" r="0.9" fill="#222"/><circle cx="7.50" cy="13.30" r="0.9" fill="#222"/><ellipse cx="12.50" cy="11.40" rx="1.5" ry="1.5" fill="#f6e2d4"/><ellipse cx="12.50" cy="10.00" rx="1.5" ry="0.7" fill="#1e2226"/><rect x="10.30" y="12.60" width="4.2" height="0.6" fill="#8060b0" opacity=".4"/><ellipse cx="17.40" cy="11.40" rx="1.5" ry="1.5" fill="#f6e2d4"/><ellipse cx="17.40" cy="10.00" rx="1.5" ry="0.7" fill="#1e2226"/><rect x="15.20" y="12.60" width="4.2" height="0.6" fill="#8060b0" opacity=".4"/><ellipse cx="21.90" cy="11.40" rx="1.5" ry="1.5" fill="#f6e2d4"/><ellipse cx="21.90" cy="10.00" rx="1.5" ry="0.7" fill="#eef2f6"/><rect x="19.70" y="12.60" width="4.2" height="0.6" fill="#8060b0" opacity=".4"/><text x="30.61" y="4.78" font-size="3.3" font-weight="bold" font-family="Liberation Sans" fill="#fff" textLength="95.47" lengthAdjust="spacingAndGlyphs" >Хаан банк, Төрийн банк, Чингис хаан банкуудын ашигт</text><text x="31.80" y="10.27" font-size="3.3" font-weight="bold" font-family="Liberation Sans" fill="#fff" textLength="93.08" lengthAdjust="spacingAndGlyphs" >ажиллагааны зарим харьцуулалт, шинжилгээ</text><rect x="0.77" y="14.69" width="130.07" height="3.58" fill="#f8c9cc" /><text x="3.16" y="17.61" font-size="2.4699999999999998" font-weight="normal" font-family="Liberation Sans" fill="#9c0006" textLength="122.91" lengthAdjust="spacingAndGlyphs" opacity="0.7">Банкны санхүүгийн тайлангийн бүтэц бүрэлдэхүүн агуулга тодруулга үзүүлэлт харьцуулалт ашигт ажиллагаа хөрвөх чадвар Ба</text><rect x="0.77" y="18.27" width="17.66" height="20.29" fill="#ffc7ce" /><rect x="18.43" y="18.27" width="39.62" height="20.29" fill="#92d050" /><rect x="58.05" y="18.27" width="36.04" height="20.29" fill="#00b0f0" /><rect x="94.09" y="18.27" width="36.75" height="20.29" fill="#ffff00" /><rect x="0.77" y="20.66" width="130.07" height="0.36" fill="#7a6a3a" opacity=".45"/><rect x="0.77" y="23.40" width="130.07" height="0.36" fill="#7a6a3a" opacity=".45"/><rect x="0.77" y="26.26" width="130.07" height="0.36" fill="#7a6a3a" opacity=".45"/><rect x="0.77" y="31.99" width="130.07" height="0.36" fill="#7a6a3a" opacity=".45"/><rect x="0.77" y="35.33" width="130.07" height="0.36" fill="#7a6a3a" opacity=".45"/><text x="34.19" y="20.62" font-size="2.21" font-weight="normal" font-family="Liberation Sans" fill="#333" textLength="7.16" lengthAdjust="spacingAndGlyphs" opacity="0.55">анхүүги</text><text x="73.57" y="20.62" font-size="2.21" font-weight="normal" font-family="Liberation Sans" fill="#333" textLength="5.97" lengthAdjust="spacingAndGlyphs" opacity="0.55">нхүүги</text><text x="109.37" y="20.62" font-size="2.21" font-weight="normal" font-family="Liberation Sans" fill="#333" textLength="5.97" lengthAdjust="spacingAndGlyphs" opacity="0.55">хүүгий</text><text x="9.13" y="20.62" font-size="2.21" font-weight="normal" font-family="Liberation Sans" fill="#9c0006" textLength="7.76" lengthAdjust="spacingAndGlyphs" opacity="0.45">үүгийн т</text><text x="34.19" y="22.88" font-size="2.21" font-weight="normal" font-family="Liberation Sans" fill="#333" textLength="7.16" lengthAdjust="spacingAndGlyphs" opacity="0.55">н бүтэц</text><text x="73.57" y="22.88" font-size="2.21" font-weight="normal" font-family="Liberation Sans" fill="#333" textLength="5.97" lengthAdjust="spacingAndGlyphs" opacity="0.55"> бүтэц</text><text x="109.37" y="22.88" font-size="2.21" font-weight="normal" font-family="Liberation Sans" fill="#333" textLength="5.97" lengthAdjust="spacingAndGlyphs" opacity="0.55">бүтэц </text><text x="9.13" y="22.88" font-size="2.21" font-weight="normal" font-family="Liberation Sans" fill="#9c0006" textLength="7.76" lengthAdjust="spacingAndGlyphs" opacity="0.45">үтэц бүр</text><text x="34.19" y="25.63" font-size="2.21" font-weight="normal" font-family="Liberation Sans" fill="#333" textLength="7.16" lengthAdjust="spacingAndGlyphs" opacity="0.55">хүүгийн</text><text x="73.57" y="25.63" font-size="2.21" font-weight="normal" font-family="Liberation Sans" fill="#333" textLength="5.97" lengthAdjust="spacingAndGlyphs" opacity="0.55">үүгийн</text><text x="109.37" y="25.63" font-size="2.21" font-weight="normal" font-family="Liberation Sans" fill="#333" textLength="5.97" lengthAdjust="spacingAndGlyphs" opacity="0.55">үгийн </text><text x="9.13" y="25.63" font-size="2.21" font-weight="normal" font-family="Liberation Sans" fill="#9c0006" textLength="7.76" lengthAdjust="spacingAndGlyphs" opacity="0.45">гийн тай</text><text x="34.19" y="29.81" font-size="2.21" font-weight="normal" font-family="Liberation Sans" fill="#333" textLength="7.16" lengthAdjust="spacingAndGlyphs" opacity="0.55">ы санхү</text><text x="73.57" y="29.81" font-size="2.21" font-weight="normal" font-family="Liberation Sans" fill="#333" textLength="5.97" lengthAdjust="spacingAndGlyphs" opacity="0.55"> санхү</text><text x="109.37" y="29.81" font-size="2.21" font-weight="normal" font-family="Liberation Sans" fill="#333" textLength="5.97" lengthAdjust="spacingAndGlyphs" opacity="0.55">санхүү</text><text x="9.13" y="29.81" font-size="2.21" font-weight="normal" font-family="Liberation Sans" fill="#9c0006" textLength="7.76" lengthAdjust="spacingAndGlyphs" opacity="0.45">анхүүгий</text><text x="34.19" y="34.58" font-size="2.21" font-weight="normal" font-family="Liberation Sans" fill="#333" textLength="7.16" lengthAdjust="spacingAndGlyphs" opacity="0.55">ы санхү</text><text x="73.57" y="34.58" font-size="2.21" font-weight="normal" font-family="Liberation Sans" fill="#333" textLength="5.97" lengthAdjust="spacingAndGlyphs" opacity="0.55"> санхү</text><text x="109.37" y="34.58" font-size="2.21" font-weight="normal" font-family="Liberation Sans" fill="#333" textLength="5.97" lengthAdjust="spacingAndGlyphs" opacity="0.55">санхүү</text><text x="9.13" y="34.58" font-size="2.21" font-weight="normal" font-family="Liberation Sans" fill="#9c0006" textLength="7.76" lengthAdjust="spacingAndGlyphs" opacity="0.45">анхүүгий</text><text x="34.19" y="37.80" font-size="2.21" font-weight="normal" font-family="Liberation Sans" fill="#333" textLength="7.16" lengthAdjust="spacingAndGlyphs" opacity="0.55">эц бүрэ</text><text x="73.57" y="37.80" font-size="2.21" font-weight="normal" font-family="Liberation Sans" fill="#333" textLength="5.97" lengthAdjust="spacingAndGlyphs" opacity="0.55">ц бүрэ</text><text x="109.37" y="37.80" font-size="2.21" font-weight="normal" font-family="Liberation Sans" fill="#333" textLength="5.97" lengthAdjust="spacingAndGlyphs" opacity="0.55"> бүрэл</text><text x="9.13" y="37.80" font-size="2.21" font-weight="normal" font-family="Liberation Sans" fill="#9c0006" textLength="7.76" lengthAdjust="spacingAndGlyphs" opacity="0.45">бүрэлдэх</text><text x="4.95" y="47.53" font-size="3.3800000000000003" font-weight="bold" font-family="Liberation Sans" fill="#000" textLength="48.93" lengthAdjust="spacingAndGlyphs" opacity="1">Банкны санхүүгийн тайлангийн бүтэц</text><rect x="4.95" y="47.51" width="48.93" height="0.48" fill="#000" /><text x="9.13" y="50.28" font-size="2.7300000000000004" font-weight="normal" font-family="Liberation Sans" fill="#4e3030" textLength="105.01" lengthAdjust="spacingAndGlyphs" opacity="0.65">үтэц бүрэлдэхүүн агуулга тодруулга үзүүлэлт харьцуулалт ашигт ажиллагаа хөрвөх чадвар Банкн</text><text x="4.95" y="54.69" font-size="3.3800000000000003" font-weight="bold" font-family="Liberation Sans" fill="#000" textLength="51.91" lengthAdjust="spacingAndGlyphs" opacity="1">Банкны санхүүгийн тайлангийн бүтэц б</text><rect x="4.95" y="54.67" width="51.91" height="0.48" fill="#000" /><text x="9.13" y="57.44" font-size="2.7300000000000004" font-weight="normal" font-family="Liberation Sans" fill="#4e3030" textLength="105.01" lengthAdjust="spacingAndGlyphs" opacity="0.65">хүүгийн тайлангийн бүтэц бүрэлдэхүүн агуулга тодруулга үзүүлэлт харьцуулалт ашигт ажиллагаа</text><text x="4.95" y="61.85" font-size="3.3800000000000003" font-weight="bold" font-family="Liberation Sans" fill="#000" textLength="59.67" lengthAdjust="spacingAndGlyphs" opacity="1">Банкны санхүүгийн тайлангийн бүтэц бүрэлдэ</text><rect x="4.95" y="61.83" width="59.67" height="0.48" fill="#000" /><text x="9.13" y="64.96" font-size="2.7300000000000004" font-weight="normal" font-family="Liberation Sans" fill="#4e3030" textLength="94.27" lengthAdjust="spacingAndGlyphs" opacity="0.65">үтэц бүрэлдэхүүн агуулга тодруулга үзүүлэлт харьцуулалт ашигт ажиллагаа хөрвөх чад</text></svg></div></div><span class="num" style="left:28px;top:519px;color:#444">22</span><div class="th" style="left:195px;top:439px;background:#fad6bb"><div style="position:absolute;left:0;top:0;width:131px;height:74px;overflow:hidden"><svg width="131" height="74" viewBox="0 0 131 74" font-family="Liberation Sans"><rect x="0.00" y="0.00" width="131.00" height="13.00" fill="#66a6cb" /><rect x="1.50" y="1.00" width="7.2" height="12" rx="0.8" fill="#25292b"/><rect x="2.10" y="4.60" width="1.6" height="1.6" fill="#e8e8e8"/><rect x="4.20" y="3.60" width="1.7" height="2.6" fill="#e0e0e0"/><rect x="6.30" y="2.80" width="1.8" height="3.4" fill="#e0e0e0"/><path d="M2.10 3.90 L5.50 2.20" stroke="#9a1a2a" stroke-width="0.9"/><rect x="2.00" y="7.00" width="6.2" height="5.4" fill="#1c1f20"/><rect x="2.30" y="8.60" width="5.6" height="1.6" fill="#8a8a8a" opacity=".8"/><circle cx="2.70" cy="13.30" r="0.9" fill="#222"/><circle cx="7.50" cy="13.30" r="0.9" fill="#222"/><ellipse cx="12.50" cy="11.40" rx="1.5" ry="1.5" fill="#f6e2d4"/><ellipse cx="12.50" cy="10.00" rx="1.5" ry="0.7" fill="#1e2226"/><rect x="10.30" y="12.60" width="4.2" height="0.6" fill="#8060b0" opacity=".4"/><ellipse cx="17.40" cy="11.40" rx="1.5" ry="1.5" fill="#f6e2d4"/><ellipse cx="17.40" cy="10.00" rx="1.5" ry="0.7" fill="#1e2226"/><rect x="15.20" y="12.60" width="4.2" height="0.6" fill="#8060b0" opacity=".4"/><ellipse cx="21.90" cy="11.40" rx="1.5" ry="1.5" fill="#f6e2d4"/><ellipse cx="21.90" cy="10.00" rx="1.5" ry="0.7" fill="#eef2f6"/><rect x="19.70" y="12.60" width="4.2" height="0.6" fill="#8060b0" opacity=".4"/><text x="30.61" y="4.96" font-size="3.8" font-weight="bold" font-family="Liberation Sans" fill="#fff" textLength="81.74" lengthAdjust="spacingAndGlyphs" >Банкны өмч, өмнөх ажиллагааны</text><text x="58.05" y="11.28" font-size="3.8" font-weight="bold" font-family="Liberation Sans" fill="#fff" textLength="26.85" lengthAdjust="spacingAndGlyphs" >шинжилгээ</text><text x="6.98" y="20.68" font-size="3.3800000000000003" font-weight="bold" font-family="Liberation Sans" fill="#3a2a2a" textLength="52.27" lengthAdjust="spacingAndGlyphs" opacity="0.95">Банкны санхүүгийн тайлангийн бүтэц б</text><rect x="6.98" y="20.54" width="52.27" height="0.95" fill="#3a3030" /><text x="11.51" y="29.80" font-size="2.8600000000000003" font-weight="normal" font-family="Liberation Sans" fill="#4e3030" textLength="115.16" lengthAdjust="spacingAndGlyphs" opacity="0.7">кны санхүүгийн тайлангийн бүтэц бүрэлдэхүүн агуулга тодруулга үзүүлэлт харьцуулалт ашигт ажилла</text><text x="11.51" y="32.78" font-size="2.8600000000000003" font-weight="normal" font-family="Liberation Sans" fill="#4e3030" textLength="115.16" lengthAdjust="spacingAndGlyphs" opacity="0.7"> бүтэц бүрэлдэхүүн агуулга тодруулга үзүүлэлт харьцуулалт ашигт ажиллагаа хөрвөх чадвар Банкны </text><text x="11.51" y="37.20" font-size="2.8600000000000003" font-weight="normal" font-family="Liberation Sans" fill="#4e3030" textLength="115.16" lengthAdjust="spacingAndGlyphs" opacity="0.7">ийн бүтэц бүрэлдэхүүн агуулга тодруулга үзүүлэлт харьцуулалт ашигт ажиллагаа хөрвөх чадвар Банк</text><text x="11.51" y="39.94" font-size="2.8600000000000003" font-weight="normal" font-family="Liberation Sans" fill="#4e3030" textLength="46.54" lengthAdjust="spacingAndGlyphs" opacity="0.7">анхүүгийн тайлангийн бүтэц бүрэлдэхүүн</text><path d="M11.51 43.33 L12.35 44.28 L13.90 42.14" stroke="#2a3a5a" stroke-width=".9" fill="none"/><text x="15.33" y="44.36" font-size="2.8600000000000003" font-weight="normal" font-family="Liberation Sans" fill="#4e3030" textLength="43.91" lengthAdjust="spacingAndGlyphs" opacity="0.7">ы санхүүгийн тайлангийн бүтэц бүрэлд</text><path d="M11.51 48.10 L12.35 49.06 L13.90 46.91" stroke="#2a3a5a" stroke-width=".9" fill="none"/><text x="15.33" y="49.13" font-size="2.8600000000000003" font-weight="normal" font-family="Liberation Sans" fill="#4e3030" textLength="29.59" lengthAdjust="spacingAndGlyphs" opacity="0.7">ы санхүүгийн тайлангийн </text><path d="M11.51 52.28 L12.35 53.23 L13.90 51.09" stroke="#2a3a5a" stroke-width=".9" fill="none"/><text x="15.33" y="53.31" font-size="2.8600000000000003" font-weight="normal" font-family="Liberation Sans" fill="#4e3030" textLength="31.38" lengthAdjust="spacingAndGlyphs" opacity="0.7">Банкны санхүүгийн тайланги</text><path d="M11.51 56.46 L12.35 57.41 L13.90 55.26" stroke="#2a3a5a" stroke-width=".9" fill="none"/><text x="15.33" y="57.49" font-size="2.8600000000000003" font-weight="normal" font-family="Liberation Sans" fill="#4e3030" textLength="23.63" lengthAdjust="spacingAndGlyphs" opacity="0.7">бүрэлдэхүүн агуулга</text><path d="M11.51 60.63 L12.35 61.59 L13.90 59.44" stroke="#2a3a5a" stroke-width=".9" fill="none"/><text x="15.33" y="61.66" font-size="2.8600000000000003" font-weight="normal" font-family="Liberation Sans" fill="#4e3030" textLength="37.95" lengthAdjust="spacingAndGlyphs" opacity="0.7">үтэц бүрэлдэхүүн агуулга тодруу</text></svg></div></div><span class="num" style="left:196px;top:519px;color:#444">23</span><div class="th" style="left:363px;top:439px;background:#fad6bb"><div style="position:absolute;left:0;top:0;width:131px;height:74px;overflow:hidden"><svg width="131" height="74" viewBox="0 0 131 74" font-family="Liberation Sans"><rect x="0.00" y="0.00" width="131.00" height="13.00" fill="#66a6cb" /><rect x="1.50" y="1.00" width="7.2" height="12" rx="0.8" fill="#25292b"/><rect x="2.10" y="4.60" width="1.6" height="1.6" fill="#e8e8e8"/><rect x="4.20" y="3.60" width="1.7" height="2.6" fill="#e0e0e0"/><rect x="6.30" y="2.80" width="1.8" height="3.4" fill="#e0e0e0"/><path d="M2.10 3.90 L5.50 2.20" stroke="#9a1a2a" stroke-width="0.9"/><rect x="2.00" y="7.00" width="6.2" height="5.4" fill="#1c1f20"/><rect x="2.30" y="8.60" width="5.6" height="1.6" fill="#8a8a8a" opacity=".8"/><circle cx="2.70" cy="13.30" r="0.9" fill="#222"/><circle cx="7.50" cy="13.30" r="0.9" fill="#222"/><ellipse cx="12.50" cy="11.40" rx="1.5" ry="1.5" fill="#f6e2d4"/><ellipse cx="12.50" cy="10.00" rx="1.5" ry="0.7" fill="#1e2226"/><rect x="10.30" y="12.60" width="4.2" height="0.6" fill="#8060b0" opacity=".4"/><ellipse cx="17.40" cy="11.40" rx="1.5" ry="1.5" fill="#f6e2d4"/><ellipse cx="17.40" cy="10.00" rx="1.5" ry="0.7" fill="#1e2226"/><rect x="15.20" y="12.60" width="4.2" height="0.6" fill="#8060b0" opacity=".4"/><ellipse cx="21.90" cy="11.40" rx="1.5" ry="1.5" fill="#f6e2d4"/><ellipse cx="21.90" cy="10.00" rx="1.5" ry="0.7" fill="#eef2f6"/><rect x="19.70" y="12.60" width="4.2" height="0.6" fill="#8060b0" opacity=".4"/><text x="22.25" y="8.95" font-size="4.6" font-weight="bold" font-family="Liberation Sans" fill="#fff" textLength="86.52" lengthAdjust="spacingAndGlyphs" >Дэмжит хэмжлэгийн шинжилгээ</text><rect x="6.14" y="16.24" width="121.12" height="17.54" fill="#c0504d" /><rect x="6.14" y="34.38" width="121.12" height="23.87" fill="#e6d0d0" /><rect x="45.88" y="16.24" width="0.48" height="42.00" fill="#fff" opacity=".6"/><rect x="86.45" y="16.24" width="0.48" height="42.00" fill="#fff" opacity=".6"/><text x="7.34" y="19.56" font-size="2.6" font-weight="normal" font-family="Liberation Sans" fill="#5a1010" textLength="11.34" lengthAdjust="spacingAndGlyphs" opacity="0.6">гийн тайла</text><text x="7.34" y="23.74" font-size="2.6" font-weight="normal" font-family="Liberation Sans" fill="#5a1010" textLength="37.59" lengthAdjust="spacingAndGlyphs" opacity="0.6">анхүүгийн тайлангийн бүтэц бүрэлдэ</text><text x="7.34" y="26.96" font-size="2.6" font-weight="normal" font-family="Liberation Sans" fill="#5a1010" textLength="10.14" lengthAdjust="spacingAndGlyphs" opacity="0.6">бүрэлдэхү</text><text x="7.34" y="30.18" font-size="2.6" font-weight="normal" font-family="Liberation Sans" fill="#5a1010" textLength="34.01" lengthAdjust="spacingAndGlyphs" opacity="0.6">ангийн бүтэц бүрэлдэхүүн агуулг</text><text x="7.34" y="33.17" font-size="2.6" font-weight="normal" font-family="Liberation Sans" fill="#5a1010" textLength="20.88" lengthAdjust="spacingAndGlyphs" opacity="0.6">санхүүгийн тайланги</text><text x="48.15" y="19.56" font-size="2.6" font-weight="normal" font-family="Liberation Sans" fill="#5a1010" textLength="8.71" lengthAdjust="spacingAndGlyphs" opacity="0.6">бүрэлдэ</text><text x="48.15" y="23.74" font-size="2.6" font-weight="normal" font-family="Liberation Sans" fill="#5a1010" textLength="9.90" lengthAdjust="spacingAndGlyphs" opacity="0.6">үтэц бүрэ</text><text x="48.15" y="26.96" font-size="2.6" font-weight="normal" font-family="Liberation Sans" fill="#5a1010" textLength="31.38" lengthAdjust="spacingAndGlyphs" opacity="0.6"> тайлангийн бүтэц бүрэлдэхүү</text><text x="88.48" y="19.56" font-size="2.6" font-weight="normal" font-family="Liberation Sans" fill="#5a1010" textLength="5.97" lengthAdjust="spacingAndGlyphs" opacity="0.6">гийн </text><text x="88.48" y="23.74" font-size="2.6" font-weight="normal" font-family="Liberation Sans" fill="#5a1010" textLength="37.59" lengthAdjust="spacingAndGlyphs" opacity="0.6">анхүүгийн тайлангийн бүтэц бүрэлдэ</text><text x="88.48" y="26.96" font-size="2.6" font-weight="normal" font-family="Liberation Sans" fill="#5a1010" textLength="10.74" lengthAdjust="spacingAndGlyphs" opacity="0.6">бүрэлдэхү</text><text x="7.34" y="37.94" font-size="2.6" font-weight="normal" font-family="Liberation Sans" fill="#5a3a5a" textLength="8.35" lengthAdjust="spacingAndGlyphs" opacity="0.6">санхүүг</text><text x="7.34" y="42.12" font-size="2.6" font-weight="normal" font-family="Liberation Sans" fill="#5a3a5a" textLength="18.50" lengthAdjust="spacingAndGlyphs" opacity="0.6">нкны санхүүгийн </text><text x="7.34" y="45.10" font-size="2.6" font-weight="normal" font-family="Liberation Sans" fill="#5a3a5a" textLength="10.14" lengthAdjust="spacingAndGlyphs" opacity="0.6">н бүтэц б</text><text x="7.34" y="48.44" font-size="2.6" font-weight="normal" font-family="Liberation Sans" fill="#5a3a5a" textLength="34.01" lengthAdjust="spacingAndGlyphs" opacity="0.6">йн тайлангийн бүтэц бүрэлдэхүүн</text><text x="7.34" y="51.43" font-size="2.6" font-weight="normal" font-family="Liberation Sans" fill="#5a3a5a" textLength="37.59" lengthAdjust="spacingAndGlyphs" opacity="0.6">Банкны санхүүгийн тайлангийн бүтэц</text><text x="7.34" y="54.65" font-size="2.6" font-weight="normal" font-family="Liberation Sans" fill="#5a3a5a" textLength="37.59" lengthAdjust="spacingAndGlyphs" opacity="0.6">н бүтэц бүрэлдэхүүн агуулга тодруу</text><text x="7.34" y="57.75" font-size="2.6" font-weight="normal" font-family="Liberation Sans" fill="#5a3a5a" textLength="33.41" lengthAdjust="spacingAndGlyphs" opacity="0.6">гийн тайлангийн бүтэц бүрэлдэх</text><text x="48.15" y="37.94" font-size="2.6" font-weight="normal" font-family="Liberation Sans" fill="#5a3a5a" textLength="9.31" lengthAdjust="spacingAndGlyphs" opacity="0.6">бүтэц бү</text><text x="48.15" y="42.12" font-size="2.6" font-weight="normal" font-family="Liberation Sans" fill="#5a3a5a" textLength="34.96" lengthAdjust="spacingAndGlyphs" opacity="0.6">гийн бүтэц бүрэлдэхүүн агуулга т</text><text x="48.15" y="51.43" font-size="2.6" font-weight="normal" font-family="Liberation Sans" fill="#5a3a5a" textLength="17.06" lengthAdjust="spacingAndGlyphs" opacity="0.6">ангийн бүтэц бү</text><text x="88.48" y="37.11" font-size="2.6" font-weight="normal" font-family="Liberation Sans" fill="#5a3a5a" textLength="26.85" lengthAdjust="spacingAndGlyphs" opacity="0.6">Банкны санхүүгийн тайлан</text><text x="88.48" y="40.33" font-size="2.6" font-weight="normal" font-family="Liberation Sans" fill="#5a3a5a" textLength="36.99" lengthAdjust="spacingAndGlyphs" opacity="0.6">н бүтэц бүрэлдэхүүн агуулга тодру</text><text x="88.48" y="44.27" font-size="2.6" font-weight="normal" font-family="Liberation Sans" fill="#5a3a5a" textLength="5.37" lengthAdjust="spacingAndGlyphs" opacity="0.6">йлан</text></svg></div></div><span class="num" style="left:364px;top:519px;color:#444">24</span><div class="th" style="left:531px;top:439px;background:#fad6bb"><div style="position:absolute;left:0;top:0;width:131px;height:74px;overflow:hidden"><svg width="131" height="74" viewBox="0 0 131 74" font-family="Liberation Sans"><rect x="0.00" y="0.00" width="131.00" height="74.00" fill="#ffff00" /><rect x="-4.00" y="-5.00" width="139.98" height="29.59" fill="#92d050" /><rect x="-4.00" y="24.59" width="139.98" height="25.54" fill="#00b0f0" /><rect x="-4.00" y="50.13" width="139.98" height="28.88" fill="#ffff00" /><rect x="-4.00" y="24.24" width="139.98" height="0.72" fill="#e8e8e8" /><rect x="-4.00" y="49.77" width="139.98" height="0.72" fill="#e8e8e8" /><rect x="35.14" y="-5.00" width="0.48" height="84.01" fill="#fff" opacity=".55"/><rect x="74.52" y="-5.00" width="0.48" height="84.01" fill="#fff" opacity=".55"/><rect x="91.23" y="-5.00" width="0.48" height="84.01" fill="#fff" opacity=".55"/><rect x="114.50" y="-5.00" width="0.48" height="84.01" fill="#fff" opacity=".55"/><rect x="-4.00" y="2.64" width="139.98" height="0.24" fill="#fff" opacity=".35"/><text x="77.15" y="2.05" font-size="2.3400000000000003" font-weight="normal" font-family="Liberation Sans" fill="#2a4a10" textLength="10.74" lengthAdjust="spacingAndGlyphs" opacity="0.6">Банкны сан</text><rect x="-4.00" y="5.74" width="139.98" height="0.24" fill="#fff" opacity=".35"/><text x="47.31" y="5.15" font-size="2.3400000000000003" font-weight="normal" font-family="Liberation Sans" fill="#2a4a10" textLength="4.77" lengthAdjust="spacingAndGlyphs" opacity="0.5">үтэц</text><text x="68.79" y="5.15" font-size="2.3400000000000003" font-weight="normal" font-family="Liberation Sans" fill="#2a4a10" textLength="4.77" lengthAdjust="spacingAndGlyphs" opacity="0.5">хүүг</text><text x="83.71" y="5.15" font-size="2.3400000000000003" font-weight="normal" font-family="Liberation Sans" fill="#2a4a10" textLength="4.18" lengthAdjust="spacingAndGlyphs" opacity="0.5">йн т</text><text x="105.79" y="5.15" font-size="2.3400000000000003" font-weight="normal" font-family="Liberation Sans" fill="#2a4a10" textLength="4.77" lengthAdjust="spacingAndGlyphs" opacity="0.5">Банк</text><text x="123.68" y="5.15" font-size="2.3400000000000003" font-weight="normal" font-family="Liberation Sans" fill="#2a4a10" textLength="7.16" lengthAdjust="spacingAndGlyphs" opacity="0.5">үтэц бү</text><rect x="-4.00" y="8.72" width="139.98" height="0.24" fill="#fff" opacity=".35"/><text x="0.18" y="8.13" font-size="2.3400000000000003" font-weight="normal" font-family="Liberation Sans" fill="#2a4a10" textLength="32.82" lengthAdjust="spacingAndGlyphs" opacity="0.55">нгийн бүтэц бүрэлдэхүүн агуулга т</text><text x="46.72" y="8.13" font-size="2.3400000000000003" font-weight="normal" font-family="Liberation Sans" fill="#2a4a10" textLength="5.37" lengthAdjust="spacingAndGlyphs" opacity="0.5">анхүү</text><text x="68.20" y="8.13" font-size="2.3400000000000003" font-weight="normal" font-family="Liberation Sans" fill="#2a4a10" textLength="5.37" lengthAdjust="spacingAndGlyphs" opacity="0.5"> бүтэ</text><text x="86.69" y="8.13" font-size="2.3400000000000003" font-weight="normal" font-family="Liberation Sans" fill="#2a4a10" textLength="4.77" lengthAdjust="spacingAndGlyphs" opacity="0.5">нгий</text><text x="108.77" y="8.13" font-size="2.3400000000000003" font-weight="normal" font-family="Liberation Sans" fill="#2a4a10" textLength="4.77" lengthAdjust="spacingAndGlyphs" opacity="0.5">анхү</text><text x="125.47" y="8.13" font-size="2.3400000000000003" font-weight="normal" font-family="Liberation Sans" fill="#2a4a10" textLength="5.37" lengthAdjust="spacingAndGlyphs" opacity="0.5"> бүтэ</text><rect x="-4.00" y="11.95" width="139.98" height="0.24" fill="#fff" opacity=".35"/><text x="0.18" y="11.36" font-size="2.3400000000000003" font-weight="normal" font-family="Liberation Sans" fill="#2a4a10" textLength="32.82" lengthAdjust="spacingAndGlyphs" opacity="0.55">хүүгийн тайлангийн бүтэц бүрэлдэх</text><text x="46.72" y="11.36" font-size="2.3400000000000003" font-weight="normal" font-family="Liberation Sans" fill="#2a4a10" textLength="5.37" lengthAdjust="spacingAndGlyphs" opacity="0.5">бүрэл</text><text x="68.20" y="11.36" font-size="2.3400000000000003" font-weight="normal" font-family="Liberation Sans" fill="#2a4a10" textLength="5.37" lengthAdjust="spacingAndGlyphs" opacity="0.5">йн та</text><text x="86.69" y="11.36" font-size="2.3400000000000003" font-weight="normal" font-family="Liberation Sans" fill="#2a4a10" textLength="4.77" lengthAdjust="spacingAndGlyphs" opacity="0.5">хүүг</text><text x="108.77" y="11.36" font-size="2.3400000000000003" font-weight="normal" font-family="Liberation Sans" fill="#2a4a10" textLength="4.77" lengthAdjust="spacingAndGlyphs" opacity="0.5">бүрэ</text><text x="125.47" y="11.36" font-size="2.3400000000000003" font-weight="normal" font-family="Liberation Sans" fill="#2a4a10" textLength="5.37" lengthAdjust="spacingAndGlyphs" opacity="0.5">йн та</text><rect x="-4.00" y="14.93" width="139.98" height="0.24" fill="#fff" opacity=".35"/><text x="0.18" y="14.34" font-size="2.3400000000000003" font-weight="normal" font-family="Liberation Sans" fill="#2a4a10" textLength="32.82" lengthAdjust="spacingAndGlyphs" opacity="0.55">бүрэлдэхүүн агуулга тодруулга үзү</text><text x="46.72" y="14.34" font-size="2.3400000000000003" font-weight="normal" font-family="Liberation Sans" fill="#2a4a10" textLength="5.37" lengthAdjust="spacingAndGlyphs" opacity="0.5">йланг</text><text x="68.20" y="14.34" font-size="2.3400000000000003" font-weight="normal" font-family="Liberation Sans" fill="#2a4a10" textLength="5.37" lengthAdjust="spacingAndGlyphs" opacity="0.5">Банкн</text><text x="86.69" y="14.34" font-size="2.3400000000000003" font-weight="normal" font-family="Liberation Sans" fill="#2a4a10" textLength="4.77" lengthAdjust="spacingAndGlyphs" opacity="0.5">бүрэ</text><text x="108.77" y="14.34" font-size="2.3400000000000003" font-weight="normal" font-family="Liberation Sans" fill="#2a4a10" textLength="4.77" lengthAdjust="spacingAndGlyphs" opacity="0.5">йлан</text><text x="125.47" y="14.34" font-size="2.3400000000000003" font-weight="normal" font-family="Liberation Sans" fill="#2a4a10" textLength="5.37" lengthAdjust="spacingAndGlyphs" opacity="0.5">Банкн</text><rect x="-4.00" y="18.15" width="139.98" height="0.24" fill="#fff" opacity=".35"/><text x="0.18" y="17.56" font-size="2.3400000000000003" font-weight="normal" font-family="Liberation Sans" fill="#2a4a10" textLength="32.82" lengthAdjust="spacingAndGlyphs" opacity="0.55">ангийн бүтэц бүрэлдэхүүн агуулга </text><text x="46.72" y="17.56" font-size="2.3400000000000003" font-weight="normal" font-family="Liberation Sans" fill="#2a4a10" textLength="5.37" lengthAdjust="spacingAndGlyphs" opacity="0.5">санхү</text><text x="68.20" y="17.56" font-size="2.3400000000000003" font-weight="normal" font-family="Liberation Sans" fill="#2a4a10" textLength="5.37" lengthAdjust="spacingAndGlyphs" opacity="0.5">н бүт</text><text x="86.69" y="17.56" font-size="2.3400000000000003" font-weight="normal" font-family="Liberation Sans" fill="#2a4a10" textLength="4.77" lengthAdjust="spacingAndGlyphs" opacity="0.5">анги</text><text x="108.77" y="17.56" font-size="2.3400000000000003" font-weight="normal" font-family="Liberation Sans" fill="#2a4a10" textLength="4.77" lengthAdjust="spacingAndGlyphs" opacity="0.5">санх</text><text x="125.47" y="17.56" font-size="2.3400000000000003" font-weight="normal" font-family="Liberation Sans" fill="#2a4a10" textLength="5.37" lengthAdjust="spacingAndGlyphs" opacity="0.5">н бүт</text><rect x="-4.00" y="21.25" width="139.98" height="0.24" fill="#fff" opacity=".35"/><text x="0.18" y="20.66" font-size="2.3400000000000003" font-weight="normal" font-family="Liberation Sans" fill="#2a4a10" textLength="32.82" lengthAdjust="spacingAndGlyphs" opacity="0.55">анхүүгийн тайлангийн бүтэц бүрэлд</text><text x="46.72" y="20.66" font-size="2.3400000000000003" font-weight="normal" font-family="Liberation Sans" fill="#2a4a10" textLength="5.37" lengthAdjust="spacingAndGlyphs" opacity="0.5">ц бүр</text><text x="68.20" y="20.66" font-size="2.3400000000000003" font-weight="normal" font-family="Liberation Sans" fill="#2a4a10" textLength="5.37" lengthAdjust="spacingAndGlyphs" opacity="0.5">гийн </text><text x="86.69" y="20.66" font-size="2.3400000000000003" font-weight="normal" font-family="Liberation Sans" fill="#2a4a10" textLength="4.77" lengthAdjust="spacingAndGlyphs" opacity="0.5">анхү</text><text x="108.77" y="20.66" font-size="2.3400000000000003" font-weight="normal" font-family="Liberation Sans" fill="#2a4a10" textLength="4.77" lengthAdjust="spacingAndGlyphs" opacity="0.5">ц бү</text><text x="125.47" y="20.66" font-size="2.3400000000000003" font-weight="normal" font-family="Liberation Sans" fill="#2a4a10" textLength="5.37" lengthAdjust="spacingAndGlyphs" opacity="0.5">гийн </text><rect x="-4.00" y="24.47" width="139.98" height="0.24" fill="#fff" opacity=".35"/><text x="0.18" y="23.89" font-size="2.3400000000000003" font-weight="normal" font-family="Liberation Sans" fill="#2a4a10" textLength="32.82" lengthAdjust="spacingAndGlyphs" opacity="0.55">бүрэлдэхүүн агуулга тодруулга үзү</text><text x="46.72" y="23.89" font-size="2.3400000000000003" font-weight="normal" font-family="Liberation Sans" fill="#2a4a10" textLength="5.37" lengthAdjust="spacingAndGlyphs" opacity="0.5">йланг</text><text x="68.20" y="23.89" font-size="2.3400000000000003" font-weight="normal" font-family="Liberation Sans" fill="#2a4a10" textLength="5.37" lengthAdjust="spacingAndGlyphs" opacity="0.5">Банкн</text><text x="86.69" y="23.89" font-size="2.3400000000000003" font-weight="normal" font-family="Liberation Sans" fill="#2a4a10" textLength="4.77" lengthAdjust="spacingAndGlyphs" opacity="0.5">бүрэ</text><text x="108.77" y="23.89" font-size="2.3400000000000003" font-weight="normal" font-family="Liberation Sans" fill="#2a4a10" textLength="4.77" lengthAdjust="spacingAndGlyphs" opacity="0.5">йлан</text><text x="125.47" y="23.89" font-size="2.3400000000000003" font-weight="normal" font-family="Liberation Sans" fill="#2a4a10" textLength="5.37" lengthAdjust="spacingAndGlyphs" opacity="0.5">Банкн</text><rect x="-4.00" y="27.46" width="139.98" height="0.24" fill="#fff" opacity=".35"/><text x="77.15" y="26.87" font-size="2.3400000000000003" font-weight="normal" font-family="Liberation Sans" fill="#0a2a50" textLength="10.74" lengthAdjust="spacingAndGlyphs" opacity="0.6">Банкны сан</text><rect x="-4.00" y="30.44" width="139.98" height="0.24" fill="#fff" opacity=".35"/><text x="47.31" y="29.85" font-size="2.3400000000000003" font-weight="normal" font-family="Liberation Sans" fill="#0a2a50" textLength="4.77" lengthAdjust="spacingAndGlyphs" opacity="0.5">үтэц</text><text x="68.79" y="29.85" font-size="2.3400000000000003" font-weight="normal" font-family="Liberation Sans" fill="#0a2a50" textLength="4.77" lengthAdjust="spacingAndGlyphs" opacity="0.5">хүүг</text><text x="83.71" y="29.85" font-size="2.3400000000000003" font-weight="normal" font-family="Liberation Sans" fill="#0a2a50" textLength="4.18" lengthAdjust="spacingAndGlyphs" opacity="0.5">йн т</text><text x="105.79" y="29.85" font-size="2.3400000000000003" font-weight="normal" font-family="Liberation Sans" fill="#0a2a50" textLength="4.77" lengthAdjust="spacingAndGlyphs" opacity="0.5">Банк</text><text x="123.68" y="29.85" font-size="2.3400000000000003" font-weight="normal" font-family="Liberation Sans" fill="#0a2a50" textLength="7.16" lengthAdjust="spacingAndGlyphs" opacity="0.5">үтэц бү</text><rect x="-4.00" y="33.66" width="139.98" height="0.24" fill="#fff" opacity=".35"/><text x="0.18" y="33.07" font-size="2.3400000000000003" font-weight="normal" font-family="Liberation Sans" fill="#0a2a50" textLength="32.82" lengthAdjust="spacingAndGlyphs" opacity="0.55">эц бүрэлдэхүүн агуулга тодруулга </text><text x="46.72" y="33.07" font-size="2.3400000000000003" font-weight="normal" font-family="Liberation Sans" fill="#0a2a50" textLength="5.37" lengthAdjust="spacingAndGlyphs" opacity="0.5"> тайл</text><text x="68.20" y="33.07" font-size="2.3400000000000003" font-weight="normal" font-family="Liberation Sans" fill="#0a2a50" textLength="5.37" lengthAdjust="spacingAndGlyphs" opacity="0.5">рэлдэ</text><text x="86.69" y="33.07" font-size="2.3400000000000003" font-weight="normal" font-family="Liberation Sans" fill="#0a2a50" textLength="4.77" lengthAdjust="spacingAndGlyphs" opacity="0.5">эц б</text><text x="108.77" y="33.07" font-size="2.3400000000000003" font-weight="normal" font-family="Liberation Sans" fill="#0a2a50" textLength="4.77" lengthAdjust="spacingAndGlyphs" opacity="0.5"> тай</text><text x="125.47" y="33.07" font-size="2.3400000000000003" font-weight="normal" font-family="Liberation Sans" fill="#0a2a50" textLength="5.37" lengthAdjust="spacingAndGlyphs" opacity="0.5">рэлдэ</text><rect x="-4.00" y="37.60" width="139.98" height="0.24" fill="#fff" opacity=".35"/><text x="0.18" y="37.01" font-size="2.3400000000000003" font-weight="normal" font-family="Liberation Sans" fill="#0a2a50" textLength="32.82" lengthAdjust="spacingAndGlyphs" opacity="0.55">ийн бүтэц бүрэлдэхүүн агуулга тод</text><text x="46.72" y="37.01" font-size="2.3400000000000003" font-weight="normal" font-family="Liberation Sans" fill="#0a2a50" textLength="5.37" lengthAdjust="spacingAndGlyphs" opacity="0.5">хүүги</text><text x="68.20" y="37.01" font-size="2.3400000000000003" font-weight="normal" font-family="Liberation Sans" fill="#0a2a50" textLength="5.37" lengthAdjust="spacingAndGlyphs" opacity="0.5">үтэц </text><text x="86.69" y="37.01" font-size="2.3400000000000003" font-weight="normal" font-family="Liberation Sans" fill="#0a2a50" textLength="4.77" lengthAdjust="spacingAndGlyphs" opacity="0.5">ийн </text><text x="108.77" y="37.01" font-size="2.3400000000000003" font-weight="normal" font-family="Liberation Sans" fill="#0a2a50" textLength="4.77" lengthAdjust="spacingAndGlyphs" opacity="0.5">хүүг</text><text x="125.47" y="37.01" font-size="2.3400000000000003" font-weight="normal" font-family="Liberation Sans" fill="#0a2a50" textLength="5.37" lengthAdjust="spacingAndGlyphs" opacity="0.5">үтэц </text><rect x="-4.00" y="40.58" width="139.98" height="0.24" fill="#fff" opacity=".35"/><text x="0.18" y="40.00" font-size="2.3400000000000003" font-weight="normal" font-family="Liberation Sans" fill="#0a2a50" textLength="32.82" lengthAdjust="spacingAndGlyphs" opacity="0.55">хүүгийн тайлангийн бүтэц бүрэлдэх</text><text x="46.72" y="40.00" font-size="2.3400000000000003" font-weight="normal" font-family="Liberation Sans" fill="#0a2a50" textLength="5.37" lengthAdjust="spacingAndGlyphs" opacity="0.5">бүрэл</text><text x="68.20" y="40.00" font-size="2.3400000000000003" font-weight="normal" font-family="Liberation Sans" fill="#0a2a50" textLength="5.37" lengthAdjust="spacingAndGlyphs" opacity="0.5">йн та</text><text x="86.69" y="40.00" font-size="2.3400000000000003" font-weight="normal" font-family="Liberation Sans" fill="#0a2a50" textLength="4.77" lengthAdjust="spacingAndGlyphs" opacity="0.5">хүүг</text><text x="108.77" y="40.00" font-size="2.3400000000000003" font-weight="normal" font-family="Liberation Sans" fill="#0a2a50" textLength="4.77" lengthAdjust="spacingAndGlyphs" opacity="0.5">бүрэ</text><text x="125.47" y="40.00" font-size="2.3400000000000003" font-weight="normal" font-family="Liberation Sans" fill="#0a2a50" textLength="5.37" lengthAdjust="spacingAndGlyphs" opacity="0.5">йн та</text><rect x="-4.00" y="43.81" width="139.98" height="0.24" fill="#fff" opacity=".35"/><text x="0.18" y="43.22" font-size="2.3400000000000003" font-weight="normal" font-family="Liberation Sans" fill="#0a2a50" textLength="32.82" lengthAdjust="spacingAndGlyphs" opacity="0.55">рэлдэхүүн агуулга тодруулга үзүүл</text><text x="46.72" y="43.22" font-size="2.3400000000000003" font-weight="normal" font-family="Liberation Sans" fill="#0a2a50" textLength="5.37" lengthAdjust="spacingAndGlyphs" opacity="0.5">ангий</text><text x="68.20" y="43.22" font-size="2.3400000000000003" font-weight="normal" font-family="Liberation Sans" fill="#0a2a50" textLength="5.37" lengthAdjust="spacingAndGlyphs" opacity="0.5">нкны </text><text x="86.69" y="43.22" font-size="2.3400000000000003" font-weight="normal" font-family="Liberation Sans" fill="#0a2a50" textLength="4.77" lengthAdjust="spacingAndGlyphs" opacity="0.5">рэлд</text><text x="108.77" y="43.22" font-size="2.3400000000000003" font-weight="normal" font-family="Liberation Sans" fill="#0a2a50" textLength="4.77" lengthAdjust="spacingAndGlyphs" opacity="0.5">анги</text><text x="125.47" y="43.22" font-size="2.3400000000000003" font-weight="normal" font-family="Liberation Sans" fill="#0a2a50" textLength="5.37" lengthAdjust="spacingAndGlyphs" opacity="0.5">нкны </text><rect x="-4.00" y="46.79" width="139.98" height="0.24" fill="#fff" opacity=".35"/><text x="0.18" y="46.20" font-size="2.3400000000000003" font-weight="normal" font-family="Liberation Sans" fill="#0a2a50" textLength="32.82" lengthAdjust="spacingAndGlyphs" opacity="0.55">ангийн бүтэц бүрэлдэхүүн агуулга </text><text x="46.72" y="46.20" font-size="2.3400000000000003" font-weight="normal" font-family="Liberation Sans" fill="#0a2a50" textLength="5.37" lengthAdjust="spacingAndGlyphs" opacity="0.5">санхү</text><text x="68.20" y="46.20" font-size="2.3400000000000003" font-weight="normal" font-family="Liberation Sans" fill="#0a2a50" textLength="5.37" lengthAdjust="spacingAndGlyphs" opacity="0.5">н бүт</text><text x="86.69" y="46.20" font-size="2.3400000000000003" font-weight="normal" font-family="Liberation Sans" fill="#0a2a50" textLength="4.77" lengthAdjust="spacingAndGlyphs" opacity="0.5">анги</text><text x="108.77" y="46.20" font-size="2.3400000000000003" font-weight="normal" font-family="Liberation Sans" fill="#0a2a50" textLength="4.77" lengthAdjust="spacingAndGlyphs" opacity="0.5">санх</text><text x="125.47" y="46.20" font-size="2.3400000000000003" font-weight="normal" font-family="Liberation Sans" fill="#0a2a50" textLength="5.37" lengthAdjust="spacingAndGlyphs" opacity="0.5">н бүт</text><rect x="-4.00" y="49.89" width="139.98" height="0.24" fill="#fff" opacity=".35"/><text x="0.18" y="49.30" font-size="2.3400000000000003" font-weight="normal" font-family="Liberation Sans" fill="#0a2a50" textLength="32.82" lengthAdjust="spacingAndGlyphs" opacity="0.55">анхүүгийн тайлангийн бүтэц бүрэлд</text><text x="46.72" y="49.30" font-size="2.3400000000000003" font-weight="normal" font-family="Liberation Sans" fill="#0a2a50" textLength="5.37" lengthAdjust="spacingAndGlyphs" opacity="0.5">ц бүр</text><text x="68.20" y="49.30" font-size="2.3400000000000003" font-weight="normal" font-family="Liberation Sans" fill="#0a2a50" textLength="5.37" lengthAdjust="spacingAndGlyphs" opacity="0.5">гийн </text><text x="86.69" y="49.30" font-size="2.3400000000000003" font-weight="normal" font-family="Liberation Sans" fill="#0a2a50" textLength="4.77" lengthAdjust="spacingAndGlyphs" opacity="0.5">анхү</text><text x="108.77" y="49.30" font-size="2.3400000000000003" font-weight="normal" font-family="Liberation Sans" fill="#0a2a50" textLength="4.77" lengthAdjust="spacingAndGlyphs" opacity="0.5">ц бү</text><text x="125.47" y="49.30" font-size="2.3400000000000003" font-weight="normal" font-family="Liberation Sans" fill="#0a2a50" textLength="5.37" lengthAdjust="spacingAndGlyphs" opacity="0.5">гийн </text><rect x="-4.00" y="53.11" width="139.98" height="0.24" fill="#fff" opacity=".35"/><text x="77.15" y="52.52" font-size="2.3400000000000003" font-weight="normal" font-family="Liberation Sans" fill="#6a6a00" textLength="10.74" lengthAdjust="spacingAndGlyphs" opacity="0.6">Банкны сан</text><rect x="-4.00" y="56.10" width="139.98" height="0.24" fill="#fff" opacity=".35"/><text x="47.31" y="55.51" font-size="2.3400000000000003" font-weight="normal" font-family="Liberation Sans" fill="#6a6a00" textLength="4.77" lengthAdjust="spacingAndGlyphs" opacity="0.5">үтэц</text><text x="68.79" y="55.51" font-size="2.3400000000000003" font-weight="normal" font-family="Liberation Sans" fill="#6a6a00" textLength="4.77" lengthAdjust="spacingAndGlyphs" opacity="0.5">хүүг</text><text x="83.71" y="55.51" font-size="2.3400000000000003" font-weight="normal" font-family="Liberation Sans" fill="#6a6a00" textLength="4.18" lengthAdjust="spacingAndGlyphs" opacity="0.5">йн т</text><text x="105.79" y="55.51" font-size="2.3400000000000003" font-weight="normal" font-family="Liberation Sans" fill="#6a6a00" textLength="4.77" lengthAdjust="spacingAndGlyphs" opacity="0.5">Банк</text><text x="123.68" y="55.51" font-size="2.3400000000000003" font-weight="normal" font-family="Liberation Sans" fill="#6a6a00" textLength="7.16" lengthAdjust="spacingAndGlyphs" opacity="0.5">үтэц бү</text><rect x="-4.00" y="60.27" width="139.98" height="0.24" fill="#fff" opacity=".35"/><text x="0.18" y="59.68" font-size="2.3400000000000003" font-weight="normal" font-family="Liberation Sans" fill="#6a6a00" textLength="32.82" lengthAdjust="spacingAndGlyphs" opacity="0.55">йн тайлангийн бүтэц бүрэлдэхүүн а</text><text x="46.72" y="59.68" font-size="2.3400000000000003" font-weight="normal" font-family="Liberation Sans" fill="#6a6a00" textLength="5.37" lengthAdjust="spacingAndGlyphs" opacity="0.5">Банкн</text><text x="68.20" y="59.68" font-size="2.3400000000000003" font-weight="normal" font-family="Liberation Sans" fill="#6a6a00" textLength="5.37" lengthAdjust="spacingAndGlyphs" opacity="0.5">йланг</text><text x="86.69" y="59.68" font-size="2.3400000000000003" font-weight="normal" font-family="Liberation Sans" fill="#6a6a00" textLength="4.77" lengthAdjust="spacingAndGlyphs" opacity="0.5">йн т</text><text x="108.77" y="59.68" font-size="2.3400000000000003" font-weight="normal" font-family="Liberation Sans" fill="#6a6a00" textLength="4.77" lengthAdjust="spacingAndGlyphs" opacity="0.5">Банк</text><text x="125.47" y="59.68" font-size="2.3400000000000003" font-weight="normal" font-family="Liberation Sans" fill="#6a6a00" textLength="5.37" lengthAdjust="spacingAndGlyphs" opacity="0.5">йланг</text><rect x="-4.00" y="63.50" width="139.98" height="0.24" fill="#fff" opacity=".35"/><text x="0.18" y="62.91" font-size="2.3400000000000003" font-weight="normal" font-family="Liberation Sans" fill="#6a6a00" textLength="32.82" lengthAdjust="spacingAndGlyphs" opacity="0.55">нкны санхүүгийн тайлангийн бүтэц </text><text x="46.72" y="62.91" font-size="2.3400000000000003" font-weight="normal" font-family="Liberation Sans" fill="#6a6a00" textLength="5.37" lengthAdjust="spacingAndGlyphs" opacity="0.5">н бүт</text><text x="68.20" y="62.91" font-size="2.3400000000000003" font-weight="normal" font-family="Liberation Sans" fill="#6a6a00" textLength="5.37" lengthAdjust="spacingAndGlyphs" opacity="0.5">санхү</text><text x="86.69" y="62.91" font-size="2.3400000000000003" font-weight="normal" font-family="Liberation Sans" fill="#6a6a00" textLength="4.77" lengthAdjust="spacingAndGlyphs" opacity="0.5">нкны</text><text x="108.77" y="62.91" font-size="2.3400000000000003" font-weight="normal" font-family="Liberation Sans" fill="#6a6a00" textLength="4.77" lengthAdjust="spacingAndGlyphs" opacity="0.5">н бү</text><text x="125.47" y="62.91" font-size="2.3400000000000003" font-weight="normal" font-family="Liberation Sans" fill="#6a6a00" textLength="5.37" lengthAdjust="spacingAndGlyphs" opacity="0.5">санхү</text><rect x="-4.00" y="66.60" width="139.98" height="0.24" fill="#fff" opacity=".35"/><text x="0.18" y="66.01" font-size="2.3400000000000003" font-weight="normal" font-family="Liberation Sans" fill="#6a6a00" textLength="32.82" lengthAdjust="spacingAndGlyphs" opacity="0.55"> бүтэц бүрэлдэхүүн агуулга тодруу</text><text x="46.72" y="66.01" font-size="2.3400000000000003" font-weight="normal" font-family="Liberation Sans" fill="#6a6a00" textLength="5.37" lengthAdjust="spacingAndGlyphs" opacity="0.5">гийн </text><text x="68.20" y="66.01" font-size="2.3400000000000003" font-weight="normal" font-family="Liberation Sans" fill="#6a6a00" textLength="5.37" lengthAdjust="spacingAndGlyphs" opacity="0.5">ц бүр</text><text x="86.69" y="66.01" font-size="2.3400000000000003" font-weight="normal" font-family="Liberation Sans" fill="#6a6a00" textLength="4.77" lengthAdjust="spacingAndGlyphs" opacity="0.5"> бүт</text><text x="108.77" y="66.01" font-size="2.3400000000000003" font-weight="normal" font-family="Liberation Sans" fill="#6a6a00" textLength="4.77" lengthAdjust="spacingAndGlyphs" opacity="0.5">гийн</text><text x="125.47" y="66.01" font-size="2.3400000000000003" font-weight="normal" font-family="Liberation Sans" fill="#6a6a00" textLength="5.37" lengthAdjust="spacingAndGlyphs" opacity="0.5">ц бүр</text><rect x="-4.00" y="69.46" width="139.98" height="0.24" fill="#fff" opacity=".35"/><text x="0.18" y="68.87" font-size="2.3400000000000003" font-weight="normal" font-family="Liberation Sans" fill="#6a6a00" textLength="32.82" lengthAdjust="spacingAndGlyphs" opacity="0.55">үгийн тайлангийн бүтэц бүрэлдэхүү</text><text x="46.72" y="68.87" font-size="2.3400000000000003" font-weight="normal" font-family="Liberation Sans" fill="#6a6a00" textLength="5.37" lengthAdjust="spacingAndGlyphs" opacity="0.5">рэлдэ</text><text x="68.20" y="68.87" font-size="2.3400000000000003" font-weight="normal" font-family="Liberation Sans" fill="#6a6a00" textLength="5.37" lengthAdjust="spacingAndGlyphs" opacity="0.5"> тайл</text><text x="86.69" y="68.87" font-size="2.3400000000000003" font-weight="normal" font-family="Liberation Sans" fill="#6a6a00" textLength="4.77" lengthAdjust="spacingAndGlyphs" opacity="0.5">үгий</text><text x="108.77" y="68.87" font-size="2.3400000000000003" font-weight="normal" font-family="Liberation Sans" fill="#6a6a00" textLength="4.77" lengthAdjust="spacingAndGlyphs" opacity="0.5">рэлд</text><text x="125.47" y="68.87" font-size="2.3400000000000003" font-weight="normal" font-family="Liberation Sans" fill="#6a6a00" textLength="5.37" lengthAdjust="spacingAndGlyphs" opacity="0.5"> тайл</text><rect x="-4.00" y="72.57" width="139.98" height="0.24" fill="#fff" opacity=".35"/><text x="0.18" y="71.98" font-size="2.3400000000000003" font-weight="normal" font-family="Liberation Sans" fill="#6a6a00" textLength="32.82" lengthAdjust="spacingAndGlyphs" opacity="0.55">элдэхүүн агуулга тодруулга үзүүлэ</text><text x="46.72" y="71.98" font-size="2.3400000000000003" font-weight="normal" font-family="Liberation Sans" fill="#6a6a00" textLength="5.37" lengthAdjust="spacingAndGlyphs" opacity="0.5">нгийн</text><text x="68.20" y="71.98" font-size="2.3400000000000003" font-weight="normal" font-family="Liberation Sans" fill="#6a6a00" textLength="5.37" lengthAdjust="spacingAndGlyphs" opacity="0.5">кны с</text><text x="86.69" y="71.98" font-size="2.3400000000000003" font-weight="normal" font-family="Liberation Sans" fill="#6a6a00" textLength="4.77" lengthAdjust="spacingAndGlyphs" opacity="0.5">элдэ</text><text x="108.77" y="71.98" font-size="2.3400000000000003" font-weight="normal" font-family="Liberation Sans" fill="#6a6a00" textLength="4.77" lengthAdjust="spacingAndGlyphs" opacity="0.5">нгий</text><text x="125.47" y="71.98" font-size="2.3400000000000003" font-weight="normal" font-family="Liberation Sans" fill="#6a6a00" textLength="5.37" lengthAdjust="spacingAndGlyphs" opacity="0.5">кны с</text><rect x="-4.00" y="75.19" width="139.98" height="0.24" fill="#fff" opacity=".35"/><text x="0.18" y="74.60" font-size="2.3400000000000003" font-weight="normal" font-family="Liberation Sans" fill="#6a6a00" textLength="32.82" lengthAdjust="spacingAndGlyphs" opacity="0.55">йлангийн бүтэц бүрэлдэхүүн агуулг</text><text x="46.72" y="74.60" font-size="2.3400000000000003" font-weight="normal" font-family="Liberation Sans" fill="#6a6a00" textLength="5.37" lengthAdjust="spacingAndGlyphs" opacity="0.5">ы сан</text><text x="68.20" y="74.60" font-size="2.3400000000000003" font-weight="normal" font-family="Liberation Sans" fill="#6a6a00" textLength="5.37" lengthAdjust="spacingAndGlyphs" opacity="0.5">ийн б</text><text x="86.69" y="74.60" font-size="2.3400000000000003" font-weight="normal" font-family="Liberation Sans" fill="#6a6a00" textLength="4.77" lengthAdjust="spacingAndGlyphs" opacity="0.5">йлан</text><text x="108.77" y="74.60" font-size="2.3400000000000003" font-weight="normal" font-family="Liberation Sans" fill="#6a6a00" textLength="4.77" lengthAdjust="spacingAndGlyphs" opacity="0.5">ы са</text><text x="125.47" y="74.60" font-size="2.3400000000000003" font-weight="normal" font-family="Liberation Sans" fill="#6a6a00" textLength="5.37" lengthAdjust="spacingAndGlyphs" opacity="0.5">ийн б</text></svg></div></div><span class="num" style="left:532px;top:519px;color:#444">25</span><div class="th" style="left:699px;top:439px;background:#fad6bb"><div style="position:absolute;left:0;top:0;width:131px;height:74px;overflow:hidden"><svg width="131" height="74" viewBox="0 0 131 74" font-family="Liberation Sans"><rect x="0.00" y="0.00" width="131.00" height="74.00" fill="#fad6bb" /><defs><radialGradient id="g26a" cx=".5" cy=".5" r=".7"><stop offset="0" stop-color="#4b4b4b"/><stop offset="1" stop-color="#222"/></radialGradient></defs><rect x="0.18" y="-0.23" width="63.84" height="38.78" fill="url(#g26a)"/><text x="9.72" y="3.24" font-size="2.3400000000000003" font-weight="bold" font-family="Liberation Sans" fill="#fff" textLength="45.94" lengthAdjust="spacingAndGlyphs" opacity="0.75">Банкны санхүүгийн тайлангийн бүтэц бүрэлдэхүүн</text><rect x="4.95" y="4.55" width="57.28" height="0.36" fill="#6a6a6a" opacity=".7"/><rect x="1.37" y="3.95" width="2.39" height="1.19" fill="#9ab" opacity=".35"/><rect x="4.95" y="8.37" width="57.28" height="0.36" fill="#6a6a6a" opacity=".7"/><rect x="1.37" y="7.77" width="2.39" height="1.19" fill="#9ab" opacity=".35"/><rect x="4.95" y="11.95" width="57.28" height="0.36" fill="#6a6a6a" opacity=".7"/><rect x="1.37" y="11.35" width="2.39" height="1.19" fill="#9ab" opacity=".35"/><rect x="4.95" y="15.53" width="57.28" height="0.36" fill="#6a6a6a" opacity=".7"/><rect x="1.37" y="14.93" width="2.39" height="1.19" fill="#9ab" opacity=".35"/><rect x="4.95" y="19.46" width="57.28" height="0.36" fill="#6a6a6a" opacity=".7"/><rect x="1.37" y="18.87" width="2.39" height="1.19" fill="#9ab" opacity=".35"/><rect x="4.95" y="23.04" width="57.28" height="0.36" fill="#6a6a6a" opacity=".7"/><rect x="1.37" y="22.45" width="2.39" height="1.19" fill="#9ab" opacity=".35"/><rect x="4.95" y="26.26" width="57.28" height="0.36" fill="#6a6a6a" opacity=".7"/><rect x="1.37" y="25.67" width="2.39" height="1.19" fill="#9ab" opacity=".35"/><rect x="4.95" y="30.20" width="57.28" height="0.36" fill="#6a6a6a" opacity=".7"/><rect x="1.37" y="29.61" width="2.39" height="1.19" fill="#9ab" opacity=".35"/><rect x="4.95" y="33.78" width="57.28" height="0.36" fill="#6a6a6a" opacity=".7"/><rect x="1.37" y="33.19" width="2.39" height="1.19" fill="#9ab" opacity=".35"/><path d="M12.11 10.51 L25.83 9.32 L56.86 9.56" stroke="#86bd4a" stroke-width="1.6" fill="none" opacity="1" stroke-linejoin="round"/><path d="M12.11 13.50 L27.03 13.50 L56.86 14.69" stroke="#2ea8dc" stroke-width="1.6" fill="none" opacity="1" stroke-linejoin="round"/><path d="M12.11 12.66 L27.03 10.27 L41.35 27.22 L56.86 31.40" stroke="#d42020" stroke-width="1.6" fill="none" opacity="1" stroke-linejoin="round"/><rect x="10.92" y="36.29" width="4.18" height="0.95" fill="#92d050" /><rect x="15.45" y="36.41" width="3.82" height="0.72" fill="#ccc" opacity=".35"/><rect x="21.06" y="36.29" width="4.18" height="0.95" fill="#00b0f0" /><rect x="25.59" y="36.41" width="9.79" height="0.72" fill="#ccc" opacity=".35"/><rect x="37.17" y="36.29" width="4.18" height="0.95" fill="#ff0000" /><rect x="41.70" y="36.41" width="12.17" height="0.72" fill="#ccc" opacity=".35"/><rect x="10.92" y="16.72" width="4.18" height="1.67" fill="#bbb" opacity=".4"/><rect x="25.47" y="16.72" width="4.18" height="1.67" fill="#bbb" opacity=".4"/><rect x="40.15" y="16.72" width="4.18" height="1.67" fill="#bbb" opacity=".4"/><rect x="54.47" y="16.72" width="4.18" height="1.67" fill="#bbb" opacity=".4"/><defs><radialGradient id="g26b" cx=".5" cy=".5" r=".7"><stop offset="0" stop-color="#4b4b4b"/><stop offset="1" stop-color="#222"/></radialGradient></defs><rect x="64.02" y="-0.23" width="66.83" height="38.78" fill="url(#g26b)"/><text x="82.52" y="3.24" font-size="2.3400000000000003" font-weight="bold" font-family="Liberation Sans" fill="#fff" textLength="31.62" lengthAdjust="spacingAndGlyphs" opacity="0.75">Банкны санхүүгийн тайлангийн бүт</text><rect x="68.79" y="5.14" width="60.26" height="0.36" fill="#6a6a6a" opacity=".7"/><rect x="65.21" y="4.55" width="2.39" height="1.19" fill="#9ab" opacity=".35"/><rect x="68.79" y="10.27" width="60.26" height="0.36" fill="#6a6a6a" opacity=".7"/><rect x="65.21" y="9.68" width="2.39" height="1.19" fill="#9ab" opacity=".35"/><rect x="68.79" y="14.69" width="60.26" height="0.36" fill="#6a6a6a" opacity=".7"/><rect x="65.21" y="14.09" width="2.39" height="1.19" fill="#9ab" opacity=".35"/><rect x="68.79" y="19.46" width="60.26" height="0.36" fill="#6a6a6a" opacity=".7"/><rect x="65.21" y="18.87" width="2.39" height="1.19" fill="#9ab" opacity=".35"/><rect x="68.79" y="23.88" width="60.26" height="0.36" fill="#6a6a6a" opacity=".7"/><rect x="65.21" y="23.28" width="2.39" height="1.19" fill="#9ab" opacity=".35"/><rect x="68.79" y="28.77" width="60.26" height="0.36" fill="#6a6a6a" opacity=".7"/><rect x="65.21" y="28.17" width="2.39" height="1.19" fill="#9ab" opacity=".35"/><rect x="68.79" y="33.42" width="60.26" height="0.36" fill="#6a6a6a" opacity=".7"/><rect x="65.21" y="32.83" width="2.39" height="1.19" fill="#9ab" opacity=".35"/><path d="M78.94 11.71 L92.66 9.32 L107.58 10.27 L122.49 16.48" stroke="#86bd4a" stroke-width="1.6" fill="none" opacity="1" stroke-linejoin="round"/><path d="M78.94 17.08 L92.66 16.84 L107.58 18.87 L122.49 16.84" stroke="#2ea8dc" stroke-width="1.6" fill="none" opacity="1" stroke-linejoin="round"/><path d="M78.94 15.29 L92.66 12.66 L107.58 31.40 L122.49 23.04" stroke="#d42020" stroke-width="1.6" fill="none" opacity="1" stroke-linejoin="round"/><rect x="74.76" y="36.29" width="4.18" height="0.95" fill="#92d050" /><rect x="79.29" y="36.41" width="3.82" height="0.72" fill="#ccc" opacity=".35"/><rect x="84.90" y="36.29" width="4.18" height="0.95" fill="#00b0f0" /><rect x="89.44" y="36.41" width="9.79" height="0.72" fill="#ccc" opacity=".35"/><rect x="101.01" y="36.29" width="4.18" height="0.95" fill="#ff0000" /><rect x="105.55" y="36.41" width="12.17" height="0.72" fill="#ccc" opacity=".35"/><rect x="78.34" y="21.01" width="4.18" height="1.67" fill="#bbb" opacity=".4"/><rect x="92.06" y="21.01" width="4.18" height="1.67" fill="#bbb" opacity=".4"/><rect x="106.38" y="21.01" width="4.18" height="1.67" fill="#bbb" opacity=".4"/><rect x="120.70" y="21.01" width="4.18" height="1.67" fill="#bbb" opacity=".4"/><text x="0.18" y="41.69" font-size="2.7300000000000004" font-weight="bold" font-family="Liberation Sans" fill="#111" textLength="33.41" lengthAdjust="spacingAndGlyphs" opacity="1">нгийн бүтэц бүрэлдэхүүн агуул</text><rect x="0.18" y="41.54" width="33.41" height="0.48" fill="#111" opacity=".9"/><text x="0.18" y="44.91" font-size="2.7300000000000004" font-weight="normal" font-family="Liberation Sans" fill="#4e3030" textLength="63.84" lengthAdjust="spacingAndGlyphs" opacity="0.85">хүүгийн тайлангийн бүтэц бүрэлдэхүүн агуулга тодруулга </text><text x="0.18" y="47.53" font-size="2.7300000000000004" font-weight="normal" font-family="Liberation Sans" fill="#4e3030" textLength="63.84" lengthAdjust="spacingAndGlyphs" opacity="0.85">эц бүрэлдэхүүн агуулга тодруулга үзүүлэлт харьцуулалт а</text><text x="0.18" y="51.47" font-size="2.7300000000000004" font-weight="bold" font-family="Liberation Sans" fill="#111" textLength="35.80" lengthAdjust="spacingAndGlyphs" opacity="1">ийн бүтэц бүрэлдэхүүн агуулга т</text><rect x="0.18" y="51.32" width="35.80" height="0.48" fill="#111" opacity=".9"/><text x="0.18" y="55.41" font-size="2.7300000000000004" font-weight="normal" font-family="Liberation Sans" fill="#4e3030" textLength="63.84" lengthAdjust="spacingAndGlyphs" opacity="0.85">тайлангийн бүтэц бүрэлдэхүүн агуулга тодруулга үзүүлэлт</text><text x="0.18" y="58.27" font-size="2.7300000000000004" font-weight="normal" font-family="Liberation Sans" fill="#4e3030" textLength="63.84" lengthAdjust="spacingAndGlyphs" opacity="0.85">нкны санхүүгийн тайлангийн бүтэц бүрэлдэхүүн агуулга то</text><text x="0.18" y="61.02" font-size="2.7300000000000004" font-weight="normal" font-family="Liberation Sans" fill="#4e3030" textLength="11.34" lengthAdjust="spacingAndGlyphs" opacity="0.85">ийн бүтэц</text><text x="0.18" y="63.41" font-size="2.7300000000000004" font-weight="bold" font-family="Liberation Sans" fill="#111" textLength="40.57" lengthAdjust="spacingAndGlyphs" opacity="1">ы санхүүгийн тайлангийн бүтэц бүрэл</text><rect x="0.18" y="63.26" width="40.57" height="0.48" fill="#111" opacity=".9"/><text x="0.18" y="66.99" font-size="2.7300000000000004" font-weight="normal" font-family="Liberation Sans" fill="#4e3030" textLength="63.84" lengthAdjust="spacingAndGlyphs" opacity="0.85">бүрэлдэхүүн агуулга тодруулга үзүүлэлт харьцуулалт ашиг</text><text x="0.18" y="69.37" font-size="2.7300000000000004" font-weight="normal" font-family="Liberation Sans" fill="#4e3030" textLength="63.84" lengthAdjust="spacingAndGlyphs" opacity="0.85">йн тайлангийн бүтэц бүрэлдэхүүн агуулга тодруулга үзүүл</text><text x="0.18" y="72.12" font-size="2.7300000000000004" font-weight="normal" font-family="Liberation Sans" fill="#4e3030" textLength="60.26" lengthAdjust="spacingAndGlyphs" opacity="0.85">элдэхүүн агуулга тодруулга үзүүлэлт харьцуулалт ашиг</text><text x="66.41" y="41.69" font-size="2.7300000000000004" font-weight="bold" font-family="Liberation Sans" fill="#111" textLength="33.41" lengthAdjust="spacingAndGlyphs" opacity="1">нгийн бүтэц бүрэлдэхүүн агуул</text><rect x="66.41" y="41.54" width="33.41" height="0.48" fill="#111" opacity=".9"/><text x="66.41" y="44.91" font-size="2.7300000000000004" font-weight="normal" font-family="Liberation Sans" fill="#4e3030" textLength="63.25" lengthAdjust="spacingAndGlyphs" opacity="0.85">хүүгийн тайлангийн бүтэц бүрэлдэхүүн агуулга тодруулга </text><text x="66.41" y="47.53" font-size="2.7300000000000004" font-weight="normal" font-family="Liberation Sans" fill="#4e3030" textLength="63.25" lengthAdjust="spacingAndGlyphs" opacity="0.85">эц бүрэлдэхүүн агуулга тодруулга үзүүлэлт харьцуулалт а</text><text x="66.41" y="51.47" font-size="2.7300000000000004" font-weight="bold" font-family="Liberation Sans" fill="#111" textLength="35.80" lengthAdjust="spacingAndGlyphs" opacity="1">ийн бүтэц бүрэлдэхүүн агуулга т</text><rect x="66.41" y="51.32" width="35.80" height="0.48" fill="#111" opacity=".9"/><text x="66.41" y="55.41" font-size="2.7300000000000004" font-weight="normal" font-family="Liberation Sans" fill="#4e3030" textLength="63.25" lengthAdjust="spacingAndGlyphs" opacity="0.85">тайлангийн бүтэц бүрэлдэхүүн агуулга тодруулга үзүүлэлт</text><text x="66.41" y="58.27" font-size="2.7300000000000004" font-weight="normal" font-family="Liberation Sans" fill="#4e3030" textLength="63.25" lengthAdjust="spacingAndGlyphs" opacity="0.85">нкны санхүүгийн тайлангийн бүтэц бүрэлдэхүүн агуулга то</text><text x="66.41" y="61.02" font-size="2.7300000000000004" font-weight="normal" font-family="Liberation Sans" fill="#4e3030" textLength="34.61" lengthAdjust="spacingAndGlyphs" opacity="0.85">ийн бүтэц бүрэлдэхүүн агуулга </text><text x="66.41" y="63.41" font-size="2.7300000000000004" font-weight="bold" font-family="Liberation Sans" fill="#111" textLength="40.57" lengthAdjust="spacingAndGlyphs" opacity="1">ы санхүүгийн тайлангийн бүтэц бүрэл</text><rect x="66.41" y="63.26" width="40.57" height="0.48" fill="#111" opacity=".9"/><text x="66.41" y="66.99" font-size="2.7300000000000004" font-weight="normal" font-family="Liberation Sans" fill="#4e3030" textLength="63.25" lengthAdjust="spacingAndGlyphs" opacity="0.85">бүрэлдэхүүн агуулга тодруулга үзүүлэлт харьцуулалт ашиг</text><text x="66.41" y="69.37" font-size="2.7300000000000004" font-weight="normal" font-family="Liberation Sans" fill="#4e3030" textLength="63.25" lengthAdjust="spacingAndGlyphs" opacity="0.85">йн тайлангийн бүтэц бүрэлдэхүүн агуулга тодруулга үзүүл</text><text x="66.41" y="72.12" font-size="2.7300000000000004" font-weight="normal" font-family="Liberation Sans" fill="#4e3030" textLength="60.26" lengthAdjust="spacingAndGlyphs" opacity="0.85">элдэхүүн агуулга тодруулга үзүүлэлт харьцуулалт ашиг</text></svg></div></div><span class="num" style="left:700px;top:519px;color:#444">26</span><div class="th" style="left:867px;top:439px;background:#fad6bb"><div style="position:absolute;left:0;top:0;width:131px;height:74px;overflow:hidden"><svg width="131" height="74" viewBox="0 0 131 74" font-family="Liberation Sans"><rect x="0.00" y="0.00" width="131.00" height="74.00" fill="#fad6bb" /><defs><radialGradient id="g27a" cx=".5" cy=".5" r=".7"><stop offset="0" stop-color="#4b4b4b"/><stop offset="1" stop-color="#222"/></radialGradient></defs><rect x="0.18" y="-0.23" width="63.84" height="39.98" fill="url(#g27a)"/><text x="12.11" y="3.24" font-size="2.3400000000000003" font-weight="bold" font-family="Liberation Sans" fill="#fff" textLength="39.98" lengthAdjust="spacingAndGlyphs" opacity="0.75">Банкны санхүүгийн тайлангийн бүтэц бүрэл</text><rect x="4.95" y="6.34" width="57.28" height="0.36" fill="#6a6a6a" opacity=".7"/><rect x="1.37" y="5.74" width="2.39" height="1.19" fill="#9ab" opacity=".35"/><rect x="4.95" y="10.27" width="57.28" height="0.36" fill="#6a6a6a" opacity=".7"/><rect x="1.37" y="9.68" width="2.39" height="1.19" fill="#9ab" opacity=".35"/><rect x="4.95" y="14.33" width="57.28" height="0.36" fill="#6a6a6a" opacity=".7"/><rect x="1.37" y="13.74" width="2.39" height="1.19" fill="#9ab" opacity=".35"/><rect x="4.95" y="18.63" width="57.28" height="0.36" fill="#6a6a6a" opacity=".7"/><rect x="1.37" y="18.03" width="2.39" height="1.19" fill="#9ab" opacity=".35"/><rect x="4.95" y="22.68" width="57.28" height="0.36" fill="#6a6a6a" opacity=".7"/><rect x="1.37" y="22.09" width="2.39" height="1.19" fill="#9ab" opacity=".35"/><rect x="4.95" y="26.98" width="57.28" height="0.36" fill="#6a6a6a" opacity=".7"/><rect x="1.37" y="26.38" width="2.39" height="1.19" fill="#9ab" opacity=".35"/><rect x="4.95" y="31.04" width="57.28" height="0.36" fill="#6a6a6a" opacity=".7"/><rect x="1.37" y="30.44" width="2.39" height="1.19" fill="#9ab" opacity=".35"/><path d="M11.51 27.22 L25.83 26.98 L40.75 26.98 L56.26 28.41" stroke="#86bd4a" stroke-width="1.6" fill="none" opacity="1" stroke-linejoin="round"/><path d="M11.51 26.26 L25.83 27.46 L40.75 25.07 L56.26 26.26" stroke="#2ea8dc" stroke-width="1.6" fill="none" opacity="1" stroke-linejoin="round"/><path d="M11.51 26.62 L25.83 27.46 L40.75 25.43 L56.26 8.37" stroke="#d42020" stroke-width="1.6" fill="none" opacity="1" stroke-linejoin="round"/><rect x="10.92" y="36.53" width="4.18" height="0.95" fill="#92d050" /><rect x="15.45" y="36.65" width="3.82" height="0.72" fill="#ccc" opacity=".35"/><rect x="21.06" y="36.53" width="4.18" height="0.95" fill="#00b0f0" /><rect x="25.59" y="36.65" width="9.79" height="0.72" fill="#ccc" opacity=".35"/><rect x="37.17" y="36.53" width="4.18" height="0.95" fill="#ff0000" /><rect x="41.70" y="36.65" width="12.17" height="0.72" fill="#ccc" opacity=".35"/><defs><radialGradient id="g27b" cx=".5" cy=".5" r=".7"><stop offset="0" stop-color="#4b4b4b"/><stop offset="1" stop-color="#222"/></radialGradient></defs><rect x="64.62" y="-0.23" width="65.04" height="38.78" fill="url(#g27b)"/><text x="87.89" y="3.24" font-size="2.3400000000000003" font-weight="bold" font-family="Liberation Sans" fill="#fff" textLength="19.09" lengthAdjust="spacingAndGlyphs" opacity="0.75">Банкны санхүүгийн т</text><rect x="69.39" y="6.34" width="58.47" height="0.36" fill="#6a6a6a" opacity=".7"/><rect x="65.81" y="5.74" width="2.39" height="1.19" fill="#9ab" opacity=".35"/><rect x="69.39" y="9.32" width="58.47" height="0.36" fill="#6a6a6a" opacity=".7"/><rect x="65.81" y="8.72" width="2.39" height="1.19" fill="#9ab" opacity=".35"/><rect x="69.39" y="12.66" width="58.47" height="0.36" fill="#6a6a6a" opacity=".7"/><rect x="65.81" y="12.06" width="2.39" height="1.19" fill="#9ab" opacity=".35"/><rect x="69.39" y="15.53" width="58.47" height="0.36" fill="#6a6a6a" opacity=".7"/><rect x="65.81" y="14.93" width="2.39" height="1.19" fill="#9ab" opacity=".35"/><rect x="69.39" y="18.87" width="58.47" height="0.36" fill="#6a6a6a" opacity=".7"/><rect x="65.81" y="18.27" width="2.39" height="1.19" fill="#9ab" opacity=".35"/><rect x="69.39" y="22.21" width="58.47" height="0.36" fill="#6a6a6a" opacity=".7"/><rect x="65.81" y="21.61" width="2.39" height="1.19" fill="#9ab" opacity=".35"/><rect x="69.39" y="26.62" width="58.47" height="0.36" fill="#6a6a6a" opacity=".7"/><rect x="65.81" y="26.03" width="2.39" height="1.19" fill="#9ab" opacity=".35"/><rect x="69.39" y="30.20" width="58.47" height="0.36" fill="#6a6a6a" opacity=".7"/><rect x="65.81" y="29.61" width="2.39" height="1.19" fill="#9ab" opacity=".35"/><rect x="69.39" y="33.19" width="58.47" height="0.36" fill="#6a6a6a" opacity=".7"/><rect x="65.81" y="32.59" width="2.39" height="1.19" fill="#9ab" opacity=".35"/><path d="M78.34 10.51 L92.66 9.92 L107.58 9.92 L121.89 10.51" stroke="#86bd4a" stroke-width="1.6" fill="none" opacity="1" stroke-linejoin="round"/><path d="M78.34 13.50 L92.66 12.66 L107.58 14.69 L121.89 12.66" stroke="#2ea8dc" stroke-width="1.6" fill="none" opacity="1" stroke-linejoin="round"/><path d="M78.34 11.71 L92.66 9.68 L107.58 30.80 L121.89 18.63" stroke="#d42020" stroke-width="1.6" fill="none" opacity="1" stroke-linejoin="round"/><rect x="75.36" y="35.69" width="4.18" height="0.95" fill="#92d050" /><rect x="79.89" y="35.81" width="3.82" height="0.72" fill="#ccc" opacity=".35"/><rect x="85.50" y="35.69" width="4.18" height="0.95" fill="#00b0f0" /><rect x="90.03" y="35.81" width="9.79" height="0.72" fill="#ccc" opacity=".35"/><rect x="101.61" y="35.69" width="4.18" height="0.95" fill="#ff0000" /><rect x="106.14" y="35.81" width="12.17" height="0.72" fill="#ccc" opacity=".35"/><rect x="129.89" y="-0.23" width="1.55" height="13.13" fill="#5b9bd5" /><rect x="10.32" y="32.23" width="4.18" height="1.67" fill="#bbb" opacity=".4"/><rect x="24.64" y="32.23" width="4.18" height="1.67" fill="#bbb" opacity=".4"/><rect x="39.56" y="32.23" width="4.18" height="1.67" fill="#bbb" opacity=".4"/><rect x="53.88" y="32.23" width="4.18" height="1.67" fill="#bbb" opacity=".4"/><rect x="76.55" y="16.48" width="4.18" height="1.67" fill="#bbb" opacity=".4"/><rect x="90.87" y="16.48" width="4.18" height="1.67" fill="#bbb" opacity=".4"/><rect x="105.79" y="16.48" width="4.18" height="1.67" fill="#bbb" opacity=".4"/><rect x="120.11" y="16.48" width="4.18" height="1.67" fill="#bbb" opacity=".4"/><text x="0.18" y="44.31" font-size="2.7300000000000004" font-weight="bold" font-family="Liberation Sans" fill="#111" textLength="36.40" lengthAdjust="spacingAndGlyphs" opacity="1">ы санхүүгийн тайлангийн бүтэц б</text><rect x="0.18" y="44.16" width="36.40" height="0.48" fill="#111" opacity=".9"/><text x="0.18" y="47.30" font-size="2.7300000000000004" font-weight="normal" font-family="Liberation Sans" fill="#4e3030" textLength="63.84" lengthAdjust="spacingAndGlyphs" opacity="0.85">үтэц бүрэлдэхүүн агуулга тодруулга үзүүлэлт харьцуулалт</text><text x="0.18" y="50.52" font-size="2.7300000000000004" font-weight="normal" font-family="Liberation Sans" fill="#4e3030" textLength="62.65" lengthAdjust="spacingAndGlyphs" opacity="0.85"> тайлангийн бүтэц бүрэлдэхүүн агуулга тодруулга үзүүлэ</text><text x="0.18" y="53.86" font-size="2.7300000000000004" font-weight="bold" font-family="Liberation Sans" fill="#111" textLength="38.78" lengthAdjust="spacingAndGlyphs" opacity="1">ы санхүүгийн тайлангийн бүтэц бүр</text><rect x="0.18" y="53.71" width="38.78" height="0.48" fill="#111" opacity=".9"/><text x="0.18" y="56.84" font-size="2.7300000000000004" font-weight="normal" font-family="Liberation Sans" fill="#4e3030" textLength="63.84" lengthAdjust="spacingAndGlyphs" opacity="0.85">үтэц бүрэлдэхүүн агуулга тодруулга үзүүлэлт харьцуулалт</text><text x="0.18" y="59.83" font-size="2.7300000000000004" font-weight="normal" font-family="Liberation Sans" fill="#4e3030" textLength="12.53" lengthAdjust="spacingAndGlyphs" opacity="0.85">йн тайланг</text><text x="0.18" y="63.17" font-size="2.7300000000000004" font-weight="bold" font-family="Liberation Sans" fill="#111" textLength="43.56" lengthAdjust="spacingAndGlyphs" opacity="1">кны санхүүгийн тайлангийн бүтэц бүрэл</text><rect x="0.18" y="63.02" width="43.56" height="0.48" fill="#111" opacity=".9"/><text x="0.18" y="65.79" font-size="2.7300000000000004" font-weight="normal" font-family="Liberation Sans" fill="#4e3030" textLength="63.84" lengthAdjust="spacingAndGlyphs" opacity="0.85">ийн бүтэц бүрэлдэхүүн агуулга тодруулга үзүүлэлт харьцу</text><text x="0.18" y="68.54" font-size="2.7300000000000004" font-weight="normal" font-family="Liberation Sans" fill="#4e3030" textLength="63.84" lengthAdjust="spacingAndGlyphs" opacity="0.85">анхүүгийн тайлангийн бүтэц бүрэлдэхүүн агуулга тодруулг</text><text x="0.18" y="71.40" font-size="2.7300000000000004" font-weight="normal" font-family="Liberation Sans" fill="#4e3030" textLength="48.33" lengthAdjust="spacingAndGlyphs" opacity="0.85">эц бүрэлдэхүүн агуулга тодруулга үзүүлэлт </text><text x="66.41" y="44.31" font-size="2.7300000000000004" font-weight="bold" font-family="Liberation Sans" fill="#111" textLength="36.40" lengthAdjust="spacingAndGlyphs" opacity="1">ы санхүүгийн тайлангийн бүтэц б</text><rect x="66.41" y="44.16" width="36.40" height="0.48" fill="#111" opacity=".9"/><text x="66.41" y="47.53" font-size="2.7300000000000004" font-weight="normal" font-family="Liberation Sans" fill="#4e3030" textLength="63.25" lengthAdjust="spacingAndGlyphs" opacity="0.85">эц бүрэлдэхүүн агуулга тодруулга үзүүлэлт харьцуулалт а</text><text x="66.41" y="50.52" font-size="2.7300000000000004" font-weight="normal" font-family="Liberation Sans" fill="#4e3030" textLength="48.33" lengthAdjust="spacingAndGlyphs" opacity="0.85"> тайлангийн бүтэц бүрэлдэхүүн агуулга тодр</text><text x="66.41" y="53.86" font-size="2.7300000000000004" font-weight="bold" font-family="Liberation Sans" fill="#111" textLength="38.78" lengthAdjust="spacingAndGlyphs" opacity="1">ы санхүүгийн тайлангийн бүтэц бүр</text><rect x="66.41" y="53.71" width="38.78" height="0.48" fill="#111" opacity=".9"/><text x="66.41" y="56.84" font-size="2.7300000000000004" font-weight="normal" font-family="Liberation Sans" fill="#4e3030" textLength="59.67" lengthAdjust="spacingAndGlyphs" opacity="0.85">үтэц бүрэлдэхүүн агуулга тодруулга үзүүлэлт харьцуул</text><text x="66.41" y="60.06" font-size="2.7300000000000004" font-weight="bold" font-family="Liberation Sans" fill="#111" textLength="43.56" lengthAdjust="spacingAndGlyphs" opacity="1"> тайлангийн бүтэц бүрэлдэхүүн агуулга</text><rect x="66.41" y="59.92" width="43.56" height="0.48" fill="#111" opacity=".9"/><text x="66.41" y="63.05" font-size="2.7300000000000004" font-weight="normal" font-family="Liberation Sans" fill="#4e3030" textLength="63.25" lengthAdjust="spacingAndGlyphs" opacity="0.85">нкны санхүүгийн тайлангийн бүтэц бүрэлдэхүүн агуулга то</text><text x="66.41" y="65.79" font-size="2.7300000000000004" font-weight="normal" font-family="Liberation Sans" fill="#4e3030" textLength="63.25" lengthAdjust="spacingAndGlyphs" opacity="0.85">ийн бүтэц бүрэлдэхүүн агуулга тодруулга үзүүлэлт харьцу</text><text x="66.41" y="68.54" font-size="2.7300000000000004" font-weight="normal" font-family="Liberation Sans" fill="#4e3030" textLength="36.99" lengthAdjust="spacingAndGlyphs" opacity="0.85">анхүүгийн тайлангийн бүтэц бүрэл</text></svg></div></div><span class="num" style="left:868px;top:519px;color:#444">27</span><div class="th" style="left:1035px;top:439px;background:#fad6bb"><div style="position:absolute;left:0;top:0;width:131px;height:74px;overflow:hidden"><svg width="131" height="74" viewBox="0 0 131 74" font-family="Liberation Sans"><rect x="0.00" y="0.00" width="131.00" height="74.00" fill="#fad6bb" /><defs><radialGradient id="g28a" cx=".5" cy=".5" r=".7"><stop offset="0" stop-color="#4b4b4b"/><stop offset="1" stop-color="#222"/></radialGradient></defs><rect x="0.18" y="-0.23" width="64.44" height="38.78" fill="url(#g28a)"/><text x="15.09" y="3.24" font-size="2.3400000000000003" font-weight="bold" font-family="Liberation Sans" fill="#fff" textLength="34.01" lengthAdjust="spacingAndGlyphs" opacity="0.75">Банкны санхүүгийн тайлангийн бүтэц</text><rect x="4.95" y="5.98" width="57.88" height="0.36" fill="#6a6a6a" opacity=".7"/><rect x="1.37" y="5.38" width="2.39" height="1.19" fill="#9ab" opacity=".35"/><rect x="4.95" y="9.32" width="57.88" height="0.36" fill="#6a6a6a" opacity=".7"/><rect x="1.37" y="8.72" width="2.39" height="1.19" fill="#9ab" opacity=".35"/><rect x="4.95" y="12.90" width="57.88" height="0.36" fill="#6a6a6a" opacity=".7"/><rect x="1.37" y="12.30" width="2.39" height="1.19" fill="#9ab" opacity=".35"/><rect x="4.95" y="16.48" width="57.88" height="0.36" fill="#6a6a6a" opacity=".7"/><rect x="1.37" y="15.88" width="2.39" height="1.19" fill="#9ab" opacity=".35"/><rect x="4.95" y="19.82" width="57.88" height="0.36" fill="#6a6a6a" opacity=".7"/><rect x="1.37" y="19.22" width="2.39" height="1.19" fill="#9ab" opacity=".35"/><rect x="4.95" y="23.40" width="57.88" height="0.36" fill="#6a6a6a" opacity=".7"/><rect x="1.37" y="22.80" width="2.39" height="1.19" fill="#9ab" opacity=".35"/><rect x="4.95" y="26.98" width="57.88" height="0.36" fill="#6a6a6a" opacity=".7"/><rect x="1.37" y="26.38" width="2.39" height="1.19" fill="#9ab" opacity=".35"/><rect x="4.95" y="30.56" width="57.88" height="0.36" fill="#6a6a6a" opacity=".7"/><rect x="1.37" y="29.96" width="2.39" height="1.19" fill="#9ab" opacity=".35"/><path d="M12.11 13.50 L27.03 9.56 L41.35 11.71 L56.26 10.51" stroke="#86bd4a" stroke-width="1.6" fill="none" opacity="1" stroke-linejoin="round"/><path d="M12.11 15.53 L27.03 16.48 L41.35 12.06 L56.26 16.24" stroke="#2ea8dc" stroke-width="1.6" fill="none" opacity="1" stroke-linejoin="round"/><path d="M12.11 17.08 L27.03 17.08 L41.35 22.21 L56.26 18.87" stroke="#d42020" stroke-width="1.6" fill="none" opacity="1" stroke-linejoin="round"/><rect x="10.92" y="35.93" width="4.18" height="0.95" fill="#92d050" /><rect x="15.45" y="36.05" width="3.82" height="0.72" fill="#ccc" opacity=".35"/><rect x="21.06" y="35.93" width="4.18" height="0.95" fill="#00b0f0" /><rect x="25.59" y="36.05" width="9.79" height="0.72" fill="#ccc" opacity=".35"/><rect x="37.17" y="35.93" width="4.18" height="0.95" fill="#ff0000" /><rect x="41.70" y="36.05" width="12.17" height="0.72" fill="#ccc" opacity=".35"/><defs><radialGradient id="g28b" cx=".5" cy=".5" r=".7"><stop offset="0" stop-color="#4b4b4b"/><stop offset="1" stop-color="#222"/></radialGradient></defs><rect x="64.62" y="-0.23" width="66.23" height="38.78" fill="url(#g28b)"/><text x="83.71" y="3.24" font-size="2.3400000000000003" font-weight="bold" font-family="Liberation Sans" fill="#fff" textLength="28.04" lengthAdjust="spacingAndGlyphs" opacity="0.75">Банкны санхүүгийн тайлангийн</text><rect x="69.39" y="5.98" width="59.67" height="0.36" fill="#6a6a6a" opacity=".7"/><rect x="65.81" y="5.38" width="2.39" height="1.19" fill="#9ab" opacity=".35"/><rect x="69.39" y="10.27" width="59.67" height="0.36" fill="#6a6a6a" opacity=".7"/><rect x="65.81" y="9.68" width="2.39" height="1.19" fill="#9ab" opacity=".35"/><rect x="69.39" y="14.45" width="59.67" height="0.36" fill="#6a6a6a" opacity=".7"/><rect x="65.81" y="13.85" width="2.39" height="1.19" fill="#9ab" opacity=".35"/><rect x="69.39" y="18.63" width="59.67" height="0.36" fill="#6a6a6a" opacity=".7"/><rect x="65.81" y="18.03" width="2.39" height="1.19" fill="#9ab" opacity=".35"/><rect x="69.39" y="22.21" width="59.67" height="0.36" fill="#6a6a6a" opacity=".7"/><rect x="65.81" y="21.61" width="2.39" height="1.19" fill="#9ab" opacity=".35"/><rect x="69.39" y="25.79" width="59.67" height="0.36" fill="#6a6a6a" opacity=".7"/><rect x="65.81" y="25.19" width="2.39" height="1.19" fill="#9ab" opacity=".35"/><rect x="69.39" y="29.96" width="59.67" height="0.36" fill="#6a6a6a" opacity=".7"/><rect x="65.81" y="29.37" width="2.39" height="1.19" fill="#9ab" opacity=".35"/><path d="M78.34 13.50 L92.66 10.51 L107.58 13.50 L121.89 13.85" stroke="#10a050" stroke-width="1.6" fill="none" opacity="1" stroke-linejoin="round"/><path d="M78.34 17.08 L92.66 12.66 L107.58 14.69 L121.89 13.85" stroke="#2ea8dc" stroke-width="1.6" fill="none" opacity="1" stroke-linejoin="round"/><path d="M78.34 20.66 L92.66 24.83 L107.58 23.04 L121.89 24.24" stroke="#b81818" stroke-width="1.6" fill="none" opacity="1" stroke-linejoin="round"/><rect x="75.36" y="35.93" width="4.18" height="0.95" fill="#92d050" /><rect x="79.89" y="36.05" width="3.82" height="0.72" fill="#ccc" opacity=".35"/><rect x="85.50" y="35.93" width="4.18" height="0.95" fill="#00b0f0" /><rect x="90.03" y="36.05" width="9.79" height="0.72" fill="#ccc" opacity=".35"/><rect x="101.61" y="35.93" width="4.18" height="0.95" fill="#ff0000" /><rect x="106.14" y="36.05" width="12.17" height="0.72" fill="#ccc" opacity=".35"/><rect x="10.92" y="32.23" width="4.18" height="1.67" fill="#bbb" opacity=".4"/><rect x="25.24" y="32.23" width="4.18" height="1.67" fill="#bbb" opacity=".4"/><rect x="39.56" y="32.23" width="4.18" height="1.67" fill="#bbb" opacity=".4"/><rect x="53.88" y="32.23" width="4.18" height="1.67" fill="#bbb" opacity=".4"/><rect x="77.15" y="32.23" width="4.18" height="1.67" fill="#bbb" opacity=".4"/><rect x="91.47" y="32.23" width="4.18" height="1.67" fill="#bbb" opacity=".4"/><rect x="105.79" y="32.23" width="4.18" height="1.67" fill="#bbb" opacity=".4"/><rect x="120.11" y="32.23" width="4.18" height="1.67" fill="#bbb" opacity=".4"/><text x="3.16" y="47.53" font-size="2.7300000000000004" font-weight="bold" font-family="Liberation Sans" fill="#111" textLength="36.40" lengthAdjust="spacingAndGlyphs" opacity="1">эц бүрэлдэхүүн агуулга тодруулг</text><rect x="3.16" y="47.39" width="36.40" height="0.48" fill="#111" opacity=".9"/><text x="3.16" y="50.64" font-size="2.7300000000000004" font-weight="normal" font-family="Liberation Sans" fill="#4e3030" textLength="53.10" lengthAdjust="spacingAndGlyphs" opacity="0.85">тайлангийн бүтэц бүрэлдэхүүн агуулга тодруулга</text><text x="3.16" y="54.10" font-size="2.7300000000000004" font-weight="bold" font-family="Liberation Sans" fill="#111" textLength="38.78" lengthAdjust="spacingAndGlyphs" opacity="1">санхүүгийн тайлангийн бүтэц бүрэл</text><rect x="3.16" y="53.95" width="38.78" height="0.48" fill="#111" opacity=".9"/><text x="3.16" y="56.84" font-size="2.7300000000000004" font-weight="normal" font-family="Liberation Sans" fill="#4e3030" textLength="53.10" lengthAdjust="spacingAndGlyphs" opacity="0.85">үтэц бүрэлдэхүүн агуулга тодруулга үзүүлэлт ха</text><text x="3.16" y="61.26" font-size="2.7300000000000004" font-weight="bold" font-family="Liberation Sans" fill="#111" textLength="43.56" lengthAdjust="spacingAndGlyphs" opacity="1">н бүтэц бүрэлдэхүүн агуулга тодруулга</text><rect x="3.16" y="61.11" width="43.56" height="0.48" fill="#111" opacity=".9"/><text x="3.16" y="64.24" font-size="2.7300000000000004" font-weight="normal" font-family="Liberation Sans" fill="#4e3030" textLength="53.10" lengthAdjust="spacingAndGlyphs" opacity="0.85">үгийн тайлангийн бүтэц бүрэлдэхүүн агуулга тод</text><text x="67.00" y="47.53" font-size="2.7300000000000004" font-weight="bold" font-family="Liberation Sans" fill="#111" textLength="36.99" lengthAdjust="spacingAndGlyphs" opacity="1">эц бүрэлдэхүүн агуулга тодруулга</text><rect x="67.00" y="47.39" width="36.99" height="0.48" fill="#111" opacity=".9"/><text x="67.00" y="50.64" font-size="2.7300000000000004" font-weight="normal" font-family="Liberation Sans" fill="#4e3030" textLength="63.25" lengthAdjust="spacingAndGlyphs" opacity="0.85">тайлангийн бүтэц бүрэлдэхүүн агуулга тодруулга үзүүлэлт</text><text x="67.00" y="53.62" font-size="2.7300000000000004" font-weight="normal" font-family="Liberation Sans" fill="#4e3030" textLength="5.37" lengthAdjust="spacingAndGlyphs" opacity="0.85">кны </text><text x="67.00" y="57.08" font-size="2.7300000000000004" font-weight="bold" font-family="Liberation Sans" fill="#111" textLength="39.38" lengthAdjust="spacingAndGlyphs" opacity="1">эц бүрэлдэхүүн агуулга тодруулга ү</text><rect x="67.00" y="56.93" width="39.38" height="0.48" fill="#111" opacity=".9"/><text x="67.00" y="59.83" font-size="2.7300000000000004" font-weight="normal" font-family="Liberation Sans" fill="#4e3030" textLength="60.86" lengthAdjust="spacingAndGlyphs" opacity="0.85">йн тайлангийн бүтэц бүрэлдэхүүн агуулга тодруулга үзү</text><text x="67.00" y="62.81" font-size="2.7300000000000004" font-weight="normal" font-family="Liberation Sans" fill="#4e3030" textLength="4.18" lengthAdjust="spacingAndGlyphs" opacity="0.85">Бан</text><text x="67.00" y="66.39" font-size="2.7300000000000004" font-weight="bold" font-family="Liberation Sans" fill="#111" textLength="44.15" lengthAdjust="spacingAndGlyphs" opacity="1">үтэц бүрэлдэхүүн агуулга тодруулга үзү</text><rect x="67.00" y="66.24" width="44.15" height="0.48" fill="#111" opacity=".9"/><text x="67.00" y="69.37" font-size="2.7300000000000004" font-weight="normal" font-family="Liberation Sans" fill="#4e3030" textLength="60.86" lengthAdjust="spacingAndGlyphs" opacity="0.85">йн тайлангийн бүтэц бүрэлдэхүүн агуулга тодруулга үзү</text><text x="67.00" y="71.40" font-size="2.7300000000000004" font-weight="normal" font-family="Liberation Sans" fill="#4e3030" textLength="5.37" lengthAdjust="spacingAndGlyphs" opacity="0.85">эц б</text></svg></div></div><span class="num" style="left:1036px;top:519px;color:#444">28</span><div class="th" style="left:27px;top:566px;background:#fad6bb"><div style="position:absolute;left:0;top:0;width:131px;height:74px;overflow:hidden"><svg width="131" height="74" viewBox="0 0 131 74" font-family="Liberation Sans"><rect x="0.00" y="0.00" width="131.00" height="13.00" fill="#66a6cb" /><rect x="1.50" y="1.00" width="7.2" height="12" rx="0.8" fill="#25292b"/><rect x="2.10" y="4.60" width="1.6" height="1.6" fill="#e8e8e8"/><rect x="4.20" y="3.60" width="1.7" height="2.6" fill="#e0e0e0"/><rect x="6.30" y="2.80" width="1.8" height="3.4" fill="#e0e0e0"/><path d="M2.10 3.90 L5.50 2.20" stroke="#9a1a2a" stroke-width="0.9"/><rect x="2.00" y="7.00" width="6.2" height="5.4" fill="#1c1f20"/><rect x="2.30" y="8.60" width="5.6" height="1.6" fill="#8a8a8a" opacity=".8"/><circle cx="2.70" cy="13.30" r="0.9" fill="#222"/><circle cx="7.50" cy="13.30" r="0.9" fill="#222"/><ellipse cx="12.50" cy="11.40" rx="1.5" ry="1.5" fill="#f6e2d4"/><ellipse cx="12.50" cy="10.00" rx="1.5" ry="0.7" fill="#1e2226"/><rect x="10.30" y="12.60" width="4.2" height="0.6" fill="#8060b0" opacity=".4"/><ellipse cx="17.40" cy="11.40" rx="1.5" ry="1.5" fill="#f6e2d4"/><ellipse cx="17.40" cy="10.00" rx="1.5" ry="0.7" fill="#1e2226"/><rect x="15.20" y="12.60" width="4.2" height="0.6" fill="#8060b0" opacity=".4"/><ellipse cx="21.90" cy="11.40" rx="1.5" ry="1.5" fill="#f6e2d4"/><ellipse cx="21.90" cy="10.00" rx="1.5" ry="0.7" fill="#eef2f6"/><rect x="19.70" y="12.60" width="4.2" height="0.6" fill="#8060b0" opacity=".4"/><text x="52.09" y="8.14" font-size="5.0" font-weight="bold" font-family="Liberation Sans" fill="#fff" textLength="26.25" lengthAdjust="spacingAndGlyphs" >Дүгнэлт</text><text x="7.34" y="19.58" font-size="2.9899999999999998" font-weight="normal" font-family="Liberation Sans" fill="#4e3030" textLength="114.56" lengthAdjust="spacingAndGlyphs" opacity="0.9">рэлдэхүүн агуулга тодруулга үзүүлэлт харьцуулалт ашигт ажиллагаа хөрвөх чадвар Банкны санхү</text><text x="7.34" y="23.76" font-size="2.9899999999999998" font-weight="normal" font-family="Liberation Sans" fill="#4e3030" textLength="114.56" lengthAdjust="spacingAndGlyphs" opacity="0.9">эц бүрэлдэхүүн агуулга тодруулга үзүүлэлт харьцуулалт ашигт ажиллагаа хөрвөх чадвар Банкны </text><text x="7.34" y="27.94" font-size="2.9899999999999998" font-weight="normal" font-family="Liberation Sans" fill="#4e3030" textLength="114.56" lengthAdjust="spacingAndGlyphs" opacity="0.9">н бүтэц бүрэлдэхүүн агуулга тодруулга үзүүлэлт харьцуулалт ашигт ажиллагаа хөрвөх чадвар Ба</text><text x="7.34" y="31.88" font-size="2.9899999999999998" font-weight="normal" font-family="Liberation Sans" fill="#4e3030" textLength="114.56" lengthAdjust="spacingAndGlyphs" opacity="0.9">йлангийн бүтэц бүрэлдэхүүн агуулга тодруулга үзүүлэлт харьцуулалт ашигт ажиллагаа хөрвөх ча</text><text x="7.34" y="36.05" font-size="2.9899999999999998" font-weight="normal" font-family="Liberation Sans" fill="#4e3030" textLength="114.56" lengthAdjust="spacingAndGlyphs" opacity="0.9">йн тайлангийн бүтэц бүрэлдэхүүн агуулга тодруулга үзүүлэлт харьцуулалт ашигт ажиллагаа хөрв</text><text x="7.34" y="40.23" font-size="2.9899999999999998" font-weight="normal" font-family="Liberation Sans" fill="#4e3030" textLength="114.56" lengthAdjust="spacingAndGlyphs" opacity="0.9">хүүгийн тайлангийн бүтэц бүрэлдэхүүн агуулга тодруулга үзүүлэлт харьцуулалт ашигт ажиллагаа</text><text x="7.34" y="44.17" font-size="2.9899999999999998" font-weight="normal" font-family="Liberation Sans" fill="#4e3030" textLength="114.56" lengthAdjust="spacingAndGlyphs" opacity="0.9">кны санхүүгийн тайлангийн бүтэц бүрэлдэхүүн агуулга тодруулга үзүүлэлт харьцуулалт ашигт аж</text><text x="7.34" y="47.39" font-size="2.9899999999999998" font-weight="normal" font-family="Liberation Sans" fill="#4e3030" textLength="114.56" lengthAdjust="spacingAndGlyphs" opacity="0.9">үтэц бүрэлдэхүүн агуулга тодруулга үзүүлэлт харьцуулалт ашигт ажиллагаа хөрвөх чадвар Банкн</text><text x="7.34" y="51.57" font-size="2.9899999999999998" font-weight="normal" font-family="Liberation Sans" fill="#4e3030" textLength="114.56" lengthAdjust="spacingAndGlyphs" opacity="0.9">ийн бүтэц бүрэлдэхүүн агуулга тодруулга үзүүлэлт харьцуулалт ашигт ажиллагаа хөрвөх чадвар </text><text x="7.34" y="55.74" font-size="2.9899999999999998" font-weight="normal" font-family="Liberation Sans" fill="#4e3030" textLength="57.28" lengthAdjust="spacingAndGlyphs" opacity="0.9">кны санхүүгийн тайлангийн бүтэц бүрэлдэхүүн а</text></svg></div></div><span class="num" style="left:28px;top:646px;color:#444">29</span><div class="th" style="left:195px;top:566px;background:#fad6bb"><div style="position:absolute;left:0;top:0;width:131px;height:74px;overflow:hidden"><svg width="131" height="74" viewBox="0 0 131 74" font-family="Liberation Sans"><rect x="0.00" y="0.00" width="131.00" height="13.00" fill="#66a6cb" /><rect x="1.50" y="1.00" width="7.2" height="12" rx="0.8" fill="#25292b"/><rect x="2.10" y="4.60" width="1.6" height="1.6" fill="#e8e8e8"/><rect x="4.20" y="3.60" width="1.7" height="2.6" fill="#e0e0e0"/><rect x="6.30" y="2.80" width="1.8" height="3.4" fill="#e0e0e0"/><path d="M2.10 3.90 L5.50 2.20" stroke="#9a1a2a" stroke-width="0.9"/><rect x="2.00" y="7.00" width="6.2" height="5.4" fill="#1c1f20"/><rect x="2.30" y="8.60" width="5.6" height="1.6" fill="#8a8a8a" opacity=".8"/><circle cx="2.70" cy="13.30" r="0.9" fill="#222"/><circle cx="7.50" cy="13.30" r="0.9" fill="#222"/><ellipse cx="12.50" cy="11.40" rx="1.5" ry="1.5" fill="#f6e2d4"/><ellipse cx="12.50" cy="10.00" rx="1.5" ry="0.7" fill="#1e2226"/><rect x="10.30" y="12.60" width="4.2" height="0.6" fill="#8060b0" opacity=".4"/><ellipse cx="17.40" cy="11.40" rx="1.5" ry="1.5" fill="#f6e2d4"/><ellipse cx="17.40" cy="10.00" rx="1.5" ry="0.7" fill="#1e2226"/><rect x="15.20" y="12.60" width="4.2" height="0.6" fill="#8060b0" opacity=".4"/><ellipse cx="21.90" cy="11.40" rx="1.5" ry="1.5" fill="#f6e2d4"/><ellipse cx="21.90" cy="10.00" rx="1.5" ry="0.7" fill="#eef2f6"/><rect x="19.70" y="12.60" width="4.2" height="0.6" fill="#8060b0" opacity=".4"/><text x="31.20" y="8.14" font-size="5.0" font-weight="bold" font-family="Liberation Sans" fill="#fff" textLength="68.62" lengthAdjust="spacingAndGlyphs" >Ашигласан материал</text><text x="10.92" y="21.54" font-size="3.12" font-weight="bold" font-family="Liberation Sans" fill="#000" textLength="12.53" lengthAdjust="spacingAndGlyphs" opacity="1">Банкны са</text><rect x="10.92" y="21.61" width="12.53" height="0.72" fill="#000" /><text x="10.92" y="25.53" font-size="2.6" font-weight="normal" font-family="Liberation Sans" fill="#555" textLength="83.53" lengthAdjust="spacingAndGlyphs" opacity="0.7">Банкны санхүүгийн тайлангийн бүтэц бүрэлдэхүүн агуулга тодруулга үзүүлэлт ха</text><text x="10.92" y="29.71" font-size="2.6" font-weight="normal" font-family="Liberation Sans" fill="#555" textLength="24.46" lengthAdjust="spacingAndGlyphs" opacity="0.7">ы санхүүгийн тайлангий</text><text x="10.92" y="34.31" font-size="3.12" font-weight="bold" font-family="Liberation Sans" fill="#000" textLength="22.67" lengthAdjust="spacingAndGlyphs" opacity="1">нхүүгийн тайланги</text><rect x="10.92" y="34.14" width="22.67" height="0.72" fill="#000" /><text x="10.92" y="37.94" font-size="2.6" font-weight="normal" font-family="Liberation Sans" fill="#0000ff" textLength="26.85" lengthAdjust="spacingAndGlyphs" opacity="1">эц бүрэлдэхүүн агуулга т</text><rect x="10.92" y="37.96" width="26.85" height="0.84" fill="#0000ff" /><text x="10.92" y="43.31" font-size="2.6" font-weight="normal" font-family="Liberation Sans" fill="#0000ff" textLength="25.06" lengthAdjust="spacingAndGlyphs" opacity="1">рэлдэхүүн агуулга тодр</text><rect x="10.92" y="43.33" width="25.06" height="0.84" fill="#0000ff" /><text x="10.92" y="47.49" font-size="2.6" font-weight="normal" font-family="Liberation Sans" fill="#0000ff" textLength="22.67" lengthAdjust="spacingAndGlyphs" opacity="1">эц бүрэлдэхүүн агуул</text><rect x="10.92" y="47.51" width="22.67" height="0.84" fill="#0000ff" /><text x="10.92" y="51.43" font-size="2.6" font-weight="normal" font-family="Liberation Sans" fill="#0000ff" textLength="20.88" lengthAdjust="spacingAndGlyphs" opacity="1">ийн бүтэц бүрэлдэхү</text><rect x="10.92" y="51.44" width="20.88" height="0.84" fill="#0000ff" /><text x="10.92" y="55.60" font-size="2.6" font-weight="normal" font-family="Liberation Sans" fill="#0000ff" textLength="22.67" lengthAdjust="spacingAndGlyphs" opacity="1">йлангийн бүтэц бүрэл</text><rect x="10.92" y="55.62" width="22.67" height="0.84" fill="#0000ff" /></svg></div></div><span class="num" style="left:196px;top:646px;color:#444">30</span><div class="th" style="left:363px;top:566px;background:#fad6bb"><div style="position:absolute;left:0;top:0;width:131px;height:74px;overflow:hidden"><svg width="131" height="74" viewBox="0 0 131 74" font-family="Liberation Sans"><rect x="0.00" y="0.00" width="131.00" height="74.00" fill="#66a6cb" /><rect x="-4.00" y="68.99" width="139.98" height="10.02" fill="#fad6bb" /><text x="32.99" y="25.44" font-size="5.0" font-weight="normal" font-family="Liberation Sans" fill="#fff" textLength="70.41" lengthAdjust="spacingAndGlyphs" >Анхаарал хандуулсанд</text><text x="50.30" y="33.79" font-size="5.0" font-weight="normal" font-family="Liberation Sans" fill="#fff" textLength="35.20" lengthAdjust="spacingAndGlyphs" >баярлалаа.</text><rect x="2.92" y="58.84" width="7.2" height="12" rx="0.8" fill="#25292b"/><rect x="3.52" y="62.44" width="1.6" height="1.6" fill="#e8e8e8"/><rect x="5.62" y="61.44" width="1.7" height="2.6" fill="#e0e0e0"/><rect x="7.72" y="60.64" width="1.8" height="3.4" fill="#e0e0e0"/><path d="M3.52 61.74 L6.92 60.04" stroke="#9a1a2a" stroke-width="0.9"/><rect x="3.42" y="64.84" width="6.2" height="5.4" fill="#1c1f20"/><rect x="3.72" y="66.44" width="5.6" height="1.6" fill="#8a8a8a" opacity=".8"/><circle cx="4.12" cy="71.14" r="0.9" fill="#222"/><circle cx="8.92" cy="71.14" r="0.9" fill="#222"/><ellipse cx="13.92" cy="69.24" rx="1.5" ry="1.5" fill="#f6e2d4"/><ellipse cx="13.92" cy="67.84" rx="1.5" ry="0.7" fill="#1e2226"/><rect x="11.72" y="70.44" width="4.2" height="0.6" fill="#8060b0" opacity=".4"/><ellipse cx="18.82" cy="69.24" rx="1.5" ry="1.5" fill="#f6e2d4"/><ellipse cx="18.82" cy="67.84" rx="1.5" ry="0.7" fill="#1e2226"/><rect x="16.62" y="70.44" width="4.2" height="0.6" fill="#8060b0" opacity=".4"/><ellipse cx="23.32" cy="69.24" rx="1.5" ry="1.5" fill="#f6e2d4"/><ellipse cx="23.32" cy="67.84" rx="1.5" ry="0.7" fill="#eef2f6"/><rect x="21.12" y="70.44" width="4.2" height="0.6" fill="#8060b0" opacity=".4"/></svg></div></div><span class="num" style="left:364px;top:646px;color:#444">31</span><div class="sb"><span class="sbt" style="left:8px">Slide 2 of 31</span><span class="sbt" style="left:120px;transform:scaleX(.96)">English (United States)</span><svg width="1212" height="23" style="position:absolute;left:0;top:-1px" fill="none" stroke="#666" stroke-width="1.2">
<path d="M90.6 4.6 L96.5 6.2 L96.5 16.6 L90.6 15 Z M96.5 6.2 L102.5 4.6 V8 M96.5 16.6 L98 15.6 M96.5 16.6 L95 15.6 M103.8 9.5 V15 L96.5 16.6"/>
<path d="M99 11.5 L103.5 6 L105 7.3 L100.5 12.8 L98.6 13.2 Z"/>
<rect x="1015.6" y="4.6" width="13" height="12.6"/><path d="M1018.6 4.6 V17.2 M1018.6 12.6 H1028.6"/><rect x="1021.4" y="7.3" width="4.5" height="2"/>
</svg><div style="position:absolute;left:1042px;top:0;width:40px;height:21px;background:#c6c6c6"></div><svg width="1212" height="23" style="position:absolute;left:0;top:-1px" fill="none" stroke="#666" stroke-width="1.3">
<rect x="1055.6" y="4.6" width="5.6" height="4.4" fill="#cfcfcf"/><rect x="1063.6" y="4.6" width="5.6" height="4.4" fill="#cfcfcf"/>
<rect x="1055.6" y="12.4" width="5.6" height="4.4" fill="#cfcfcf"/><rect x="1063.6" y="12.4" width="5.6" height="4.4" fill="#cfcfcf"/>
<path d="M1095.6 4.6 L1101.5 5.6 L1107.4 4.6 V15.6 L1101.5 16.6 L1095.6 15.6 Z M1101.5 5.6 V17.5" />
<path d="M1097.5 7.3 H1100 M1097.5 9.3 H1100 M1097.5 11.3 H1100 M1097.5 13.3 H1100 M1103 7.3 H1105.5 M1103 9.3 H1105.5 M1103 11.3 H1105.5 M1103 13.3 H1105.5" stroke-width="1"/>
<path d="M1135 5.6 H1148" stroke-width="1.8"/><path d="M1136.2 6.2 V12.3 H1146.8 V6.2 M1138.5 9 H1144 M1141.5 12.3 V15.8 M1139 16 H1144"/>
<path d="M1168 10.9 H1176" stroke-width="1.4"/><path d="M1181 11.9 H1212" stroke="#9a9a9a" stroke-width="1"/>
</svg><div style="position:absolute;left:1202px;top:5px;width:5px;height:11px;background:#666"></div></div><div style="position:absolute;left:0;top:703px;width:48px;height:1px;background:#000"></div><div style="position:absolute;left:392px;top:703px;width:820px;height:1px;background:#000"></div></body></html>
